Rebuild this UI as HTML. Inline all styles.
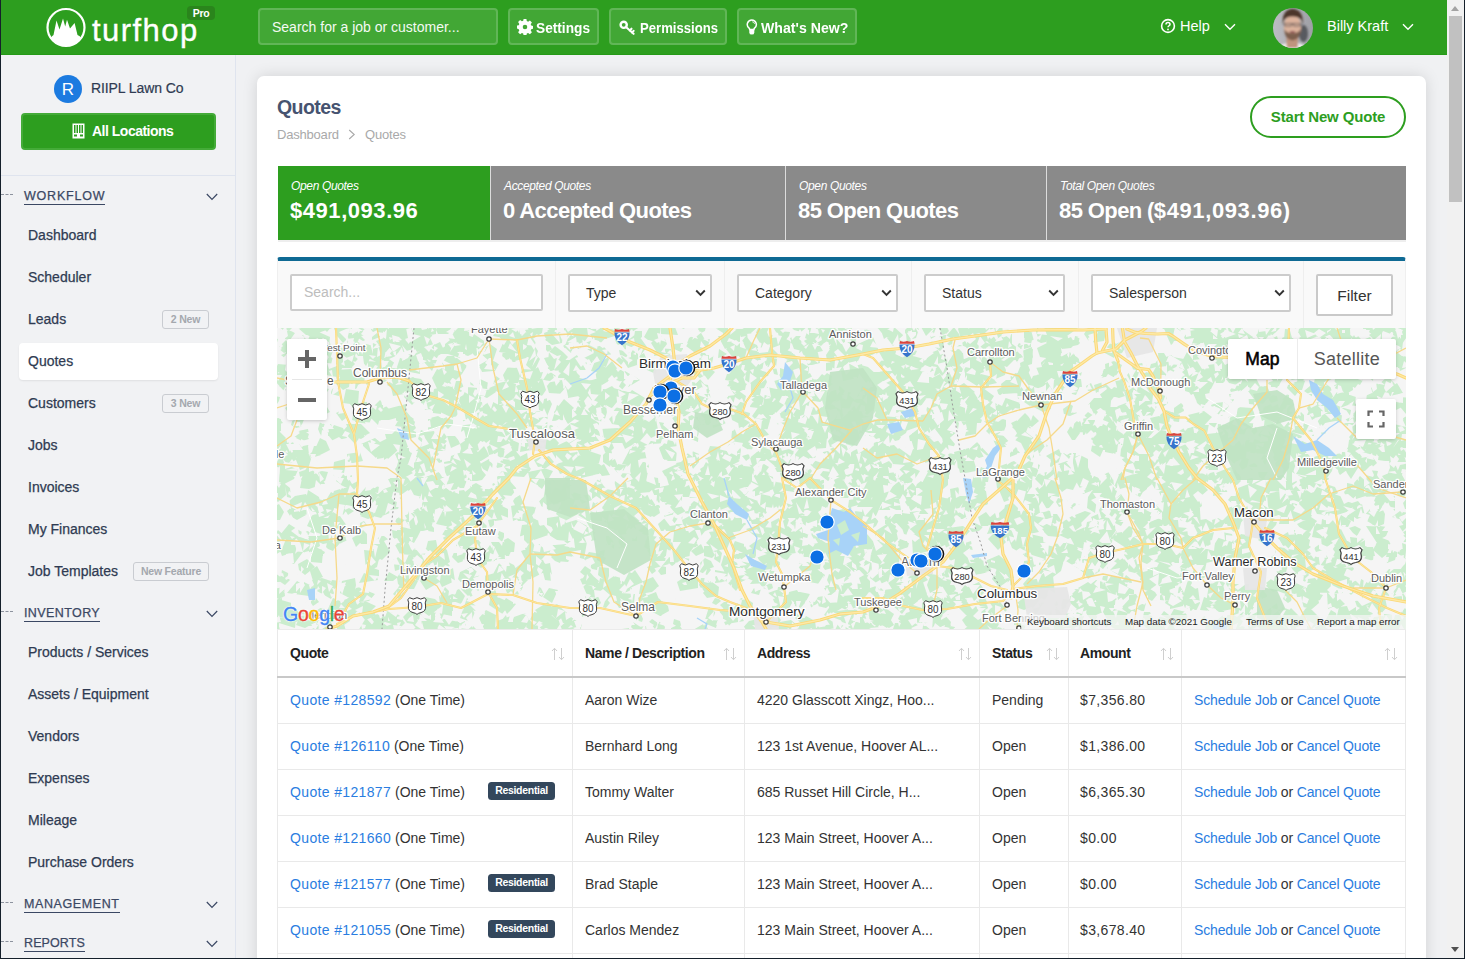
<!DOCTYPE html>
<html lang="en">
<head>
<meta charset="utf-8">
<title>Quotes - Turfhop</title>
<style>
*{box-sizing:border-box;margin:0;padding:0}
html,body{width:1465px;height:959px;overflow:hidden;background:#15202b}
body{font-family:"Liberation Sans",sans-serif;color:#2f3b52;position:relative}
.abs{position:absolute}
#frame{position:absolute;left:1px;top:0;width:1463px;height:958px;background:#f0f1f3;overflow:hidden}
/* header */
#hdr{position:absolute;left:0;top:0;width:1446px;height:55px;background:#2d9e1f;border-bottom:1px solid #259a17}
.hbtn{position:absolute;top:8px;height:37px;border:2px solid rgba(255,255,255,.17);background:rgba(255,255,255,.1);border-radius:4px;color:#fff;font-weight:bold;font-size:14px;line-height:37px;white-space:nowrap}
.hbtn span{position:absolute;top:0;line-height:35px;letter-spacing:0;font-size:15.300px;transform-origin:0 50%}
.htxt{position:absolute;color:#fff;font-size:14.5px;white-space:nowrap;line-height:20px}
/* scrollbar */
#sb{position:absolute;left:1446px;top:0;width:17px;height:958px;background:#f1f1f1}
#sb .thumb{position:absolute;left:2px;top:16px;width:13px;height:186px;background:#c1c1c1}
#sb .up{position:absolute;left:4px;top:6px;width:0;height:0;border-left:4.5px solid transparent;border-right:4.5px solid transparent;border-bottom:5px solid #a3a3a3}
#sb .dn{position:absolute;left:4px;top:947px;width:0;height:0;border-left:4.5px solid transparent;border-right:4.5px solid transparent;border-top:5px solid #505050}
/* sidebar */
#side{position:absolute;left:0;top:55px;width:235px;height:903px;background:#f1f2f4;border-right:1px solid #dfe4ee}
.mi{position:absolute;left:27px;font-size:14px;color:#2f3b52;white-space:nowrap;line-height:20px;-webkit-text-stroke:.25px #2f3b52}
.sec{position:absolute;left:23px;font-size:12.5px;letter-spacing:.8px;color:#3b4863;white-space:nowrap;line-height:16px;border-bottom:1.5px solid #3b4863;padding-bottom:0;-webkit-text-stroke:.25px #3b4863}
.dash{position:absolute;left:0;width:12px;height:0;border-top:1px dashed #8d939e}
.chev{position:absolute;left:205px;width:12px;height:8px}
.bdg{position:absolute;height:19px;border:1px solid #c9ccd1;border-radius:3px;color:#a4a8ae;font-size:10.5px;line-height:17px;text-align:center;white-space:nowrap;font-weight:bold;letter-spacing:-.2px}
/* card */
#card{position:absolute;left:256px;top:76px;width:1169px;height:900px;background:#fff;border-radius:7px;box-shadow:0 0 15px rgba(0,0,0,.13)}
.stat{position:absolute;top:166px;height:74px;background:#8a8a8a;color:#fff}
.stat i{position:absolute;left:13px;top:12px;font-size:12px;line-height:16px;white-space:nowrap;letter-spacing:-.35px}
.stat b{position:absolute;left:12px;top:31px;font-size:22px;line-height:28px;white-space:nowrap;letter-spacing:-.6px}
.sel{position:absolute;top:274px;height:38px;border:2px solid #ccc;border-radius:2px;background:#fff;font-size:14px;color:#333;line-height:35px;padding-left:16px;white-space:nowrap}
.sel svg{position:absolute;right:4px;top:13px}
.fdiv{position:absolute;top:261px;width:1px;height:67px;background:#eee}
/* table */
.th{position:absolute;top:643px;font-weight:bold;font-size:14px;color:#222;line-height:20px;white-space:nowrap;letter-spacing:-.4px}
.srt{position:absolute;top:647px;width:14px;height:14px}
.vl{position:absolute;top:630px;width:1px;height:330px;background:#e9e9e9}
.hl{position:absolute;left:277px;width:1129px;height:1px;background:#e9e9e9}
.td{position:absolute;font-size:14px;color:#333;line-height:20px;white-space:nowrap}
.td a,.lnk{color:#2a7de1;text-decoration:none}
.res{position:absolute;left:488px;width:67px;height:18px;border-radius:3.5px;background:#33475c;color:#fff;font-size:10.5px;font-weight:bold;text-align:center;line-height:17px;letter-spacing:-.3px}
</style>
</head>
<body>
<div id="frame">

<!-- ================= HEADER ================= -->
<div id="hdr">
  <!-- logo -->
  <svg class="abs" style="left:44px;top:6px" width="44" height="44" viewBox="0 0 44 44">
    <circle cx="21" cy="21.5" r="18.500" fill="none" stroke="#fff" stroke-width="2.200"/>
    <path d="M5.500 32.300Q7 29.800 8.500 29L11.500 14.500L14.500 23.500L18 12.400L20.200 20.500L22 13.700L25 22.500L29.600 17L32.500 29Q35 29.800 36.500 32.300A19 19 0 0 1 5.500 32.300Z" fill="#fff"/>
  </svg>
  <div class="abs" style="left:91px;top:13px;font-size:31px;line-height:36px;color:#fff;letter-spacing:1.45px;white-space:nowrap;-webkit-text-stroke:.35px #fff">turfhop</div>
  <div class="abs" style="left:186px;top:6px;width:28px;height:14px;border-radius:4px;background:#2a851c;color:#fff;font-size:10.5px;font-weight:bold;line-height:14px;text-align:center;letter-spacing:-.3px">Pro</div>

  <!-- search -->
  <div class="hbtn" style="left:257px;width:240px;font-weight:normal"><span style="left:12px;letter-spacing:0;color:#f4faf3;font-size:14px;top:0">Search for a job or customer...</span></div>
  <!-- settings -->
  <div class="hbtn" style="left:507px;width:91px">
    <svg class="abs" style="left:7px;top:9px" width="16" height="16" viewBox="0 0 16 16"><path fill="#fff" d="M6.6 0h2.8l.4 2.1 1.3.55 1.8-1.2 2 2-1.2 1.8.55 1.3 2.1.4v2.8l-2.1.4-.55 1.3 1.2 1.8-2 2-1.8-1.2-1.3.55-.4 2.1H6.6l-.4-2.1-1.3-.55-1.8 1.2-2-2 1.2-1.8-.55-1.3L-.35 9.400V6.600l2.1-.4.55-1.3-1.2-1.8 2-2 1.8 1.2 1.3-.55zM8 5.700a2.300 2.300 0 100 4.600 2.300 2.300 0 000-4.600z"/></svg>
    <span style="left:26px;transform:scaleX(.895)">Settings</span>
  </div>
  <!-- permissions -->
  <div class="hbtn" style="left:608px;width:118px">
    <svg class="abs" style="left:7px;top:8px" width="18" height="18" viewBox="0 0 18 18"><circle cx="5.700" cy="6.800" r="3.100" fill="none" stroke="#fff" stroke-width="2.400"/><path d="M8.200 9.200L15.600 15.800M11.800 12.600l1.700-1.900M14.100 14.600l1.500-1.700" stroke="#fff" stroke-width="2.100" fill="none" stroke-linecap="round"/></svg>
    <span style="left:29px;transform:scaleX(.857)">Permissions</span>
  </div>
  <!-- what's new -->
  <div class="hbtn" style="left:736px;width:120px">
    <svg class="abs" style="left:7px;top:8px" width="12" height="18" viewBox="0 0 12 18"><path d="M5.800 2a4.500 4.500 0 00-2.700 8.100c.4.400.6.900.6 1.500h4.200c0-.6.200-1.100.6-1.500A4.500 4.500 0 005.800 2z" fill="none" stroke="#fff" stroke-width="1.500"/><path d="M3.300 11.200h5v3.200a2.500 2.200 0 01-5 0z" fill="#fff"/><path d="M6.300 3.800a2.600 2.600 0 012.300 2" fill="none" stroke="#fff" stroke-width=".9"/></svg>
    <span style="left:22px;transform:scaleX(.924)">What's New?</span>
  </div>
  <!-- help -->
  <svg class="abs" style="left:1159px;top:17.500px" width="16" height="16" viewBox="0 0 16 16"><circle cx="8" cy="8" r="6.400" fill="none" stroke="#fff" stroke-width="1.600"/><path d="M6 6.400a2 2 0 114 0c0 1.300-2 1.400-2 2.900" fill="none" stroke="#fff" stroke-width="1.500"/><circle cx="8" cy="11.400" r=".9" fill="#fff"/></svg>
  <div class="htxt" style="left:1179px;top:16px">Help</div>
  <svg class="abs" style="left:1222.500px;top:22.500px" width="12" height="8" viewBox="0 0 12 8"><path d="M1 1.200l5 5 5-5" fill="none" stroke="#fff" stroke-width="1.400"/></svg>
  <!-- avatar -->
  <svg class="abs" style="left:1272px;top:8px" width="40" height="40" viewBox="0 0 40 40">
    <defs><clipPath id="avc"><circle cx="20" cy="20" r="20"/></clipPath><linearGradient id="avg" x1="0" x2="1"><stop offset="0" stop-color="#bcbdc3"/><stop offset="1" stop-color="#9fa0a6"/></linearGradient><filter id="avb" x="-10%" y="-10%" width="120%" height="120%"><feGaussianBlur stdDeviation=".9"/></filter></defs>
    <g clip-path="url(#avc)"><rect width="40" height="40" fill="url(#avg)"/>
    <g filter="url(#avb)">
      <ellipse cx="30.500" cy="25.500" rx="4.500" ry="8.500" fill="#505157" opacity=".9"/>
      <ellipse cx="19.500" cy="42" rx="15" ry="7.500" fill="#f3f0f0"/>
      <rect x="13.500" y="26" width="11.500" height="14" rx="2" fill="#c0947e"/>
      <ellipse cx="19.500" cy="19" rx="8.700" ry="12.300" fill="#dcb29c"/>
      <path d="M11.300 21Q11.500 31.500 19.500 32.500Q27.500 31.500 27.700 21Q25 25.500 19.500 25.300Q14 25.500 11.300 21Z" fill="#6b4f40" opacity=".85"/>
      <ellipse cx="19.500" cy="24" rx="3" ry="1" fill="#8c4c4c"/>
      <path d="M9.900 17Q8.300 2 19.500 .8Q31 2 29.700 17L28.300 11.500Q24 7.800 19 8.600Q13.500 8.800 11.300 12Z" fill="#4b3429"/>
      <path d="M10.800 15.500H28.200M11.500 15.500V18H18.500V15.500M20.500 15.500V18H27.500V15.500" fill="none" stroke="#3a3a40" stroke-width=".9" opacity=".8"/>
    </g></g>
  </svg>
  <div class="htxt" style="left:1326px;top:16px">Billy Kraft</div>
  <svg class="abs" style="left:1401px;top:22.500px" width="12" height="8" viewBox="0 0 12 8"><path d="M1 1.200l5 5 5-5" fill="none" stroke="#fff" stroke-width="1.400"/></svg>
</div>

<!-- ================= SCROLLBAR ================= -->
<div id="sb"><div class="up"></div><div class="thumb"></div><div class="dn"></div></div>

<!-- ================= SIDEBAR ================= -->
<div id="side">
  <div class="abs" style="left:53px;top:20px;width:28px;height:28px;border-radius:50%;background:#1c7be0;color:#fff;font-size:17px;text-align:center;line-height:29px">R</div>
  <div class="abs" style="left:90px;top:23px;font-size:14px;line-height:20px;white-space:nowrap;letter-spacing:-.1px;-webkit-text-stroke:.2px #2f3b52">RIIPL Lawn Co</div>
  <div class="abs" style="left:20px;top:58px;width:195px;height:37px;border-radius:4px;background:#2d9e1f;border:2px solid #44ab38"></div>
  <svg class="abs" style="left:71px;top:68px" width="13" height="16" viewBox="0 0 13 16"><rect x=".5" y=".5" width="12" height="15" fill="#fff"/><g fill="#2d9e1f"><rect x="2" y="2" width="1.500" height="8"/><rect x="4.500" y="2" width="1.500" height="8"/><rect x="7" y="2" width="1.500" height="8"/><rect x="9.500" y="2" width="1.500" height="8"/><rect x="2" y="11.500" width="3" height="2"/><rect x="8" y="11.500" width="3" height="2"/></g></svg>
  <div class="abs" style="left:91px;top:66px;font-size:14px;font-weight:bold;color:#fff;line-height:20px;white-space:nowrap;letter-spacing:-.5px">All Locations</div>
  <div class="abs" style="left:0;top:120px;width:235px;height:1px;background:#dfe4ee"></div>

  <div class="dash" style="top:139px"></div>
  <div class="sec" style="top:133px">WORKFLOW</div>
  <svg class="chev" style="top:138px" viewBox="0 0 12 8"><path d="M.8 1l5.200 5.400L11.200 1" fill="none" stroke="#3b4863" stroke-width="1.200"/></svg>

  <div class="mi" style="top:170px">Dashboard</div>
  <div class="mi" style="top:212px">Scheduler</div>
  <div class="mi" style="top:254px">Leads</div>
  <div class="bdg" style="left:161px;top:255px;width:47px">2 New</div>
  <div class="abs" style="left:18px;top:288px;width:199px;height:37px;background:#fff;border-radius:4px;box-shadow:0 1px 2px rgba(0,0,0,.08)"></div>
  <div class="mi" style="top:296px">Quotes</div>
  <div class="mi" style="top:338px">Customers</div>
  <div class="bdg" style="left:161px;top:339px;width:47px">3 New</div>
  <div class="mi" style="top:380px">Jobs</div>
  <div class="mi" style="top:422px">Invoices</div>
  <div class="mi" style="top:464px">My Finances</div>
  <div class="mi" style="top:506px">Job Templates</div>
  <div class="bdg" style="left:132px;top:507px;width:76px">New Feature</div>

  <div class="dash" style="top:556px"></div>
  <div class="sec" style="top:550px;letter-spacing:.4px">INVENTORY</div>
  <svg class="chev" style="top:555px" viewBox="0 0 12 8"><path d="M.8 1l5.200 5.400L11.200 1" fill="none" stroke="#3b4863" stroke-width="1.200"/></svg>

  <div class="mi" style="top:587px">Products / Services</div>
  <div class="mi" style="top:629px">Assets / Equipment</div>
  <div class="mi" style="top:671px">Vendors</div>
  <div class="mi" style="top:713px">Expenses</div>
  <div class="mi" style="top:755px">Mileage</div>
  <div class="mi" style="top:797px">Purchase Orders</div>

  <div class="dash" style="top:847px"></div>
  <div class="sec" style="top:841px;letter-spacing:.6px">MANAGEMENT</div>
  <svg class="chev" style="top:846px" viewBox="0 0 12 8"><path d="M.8 1l5.200 5.400L11.200 1" fill="none" stroke="#3b4863" stroke-width="1.200"/></svg>

  <div class="dash" style="top:886px"></div>
  <div class="sec" style="top:880px;letter-spacing:.1px">REPORTS</div>
  <svg class="chev" style="top:885px" viewBox="0 0 12 8"><path d="M.8 1l5.200 5.400L11.200 1" fill="none" stroke="#3b4863" stroke-width="1.200"/></svg>
</div>

<!-- ================= MAIN CARD ================= -->
<div id="card"></div>
<div id="main" class="abs" style="left:-1px;top:0;width:1465px;height:958px">
  <div class="abs" style="left:277px;top:94px;font-size:19.5px;line-height:26px;color:#465370;font-weight:bold;letter-spacing:-.55px;white-space:nowrap">Quotes</div>
  <div class="abs" style="left:277px;top:125px;font-size:13px;line-height:20px;color:#a9a9a9;white-space:nowrap;letter-spacing:-.2px">Dashboard</div>
  <svg class="abs" style="left:348px;top:129px" width="8" height="11" viewBox="0 0 8 11"><path d="M1.200 1l5 4.500-5 4.500" fill="none" stroke="#a9a9a9" stroke-width="1.100"/></svg>
  <div class="abs" style="left:365px;top:125px;font-size:13px;line-height:20px;color:#a9a9a9;white-space:nowrap;letter-spacing:-.2px">Quotes</div>

  <div class="abs" style="left:1250px;top:96px;width:156px;height:42px;border:2px solid #2d9e1f;border-radius:21px;color:#2d9e1f;font-size:15px;font-weight:bold;text-align:center;line-height:38px;letter-spacing:-.15px;white-space:nowrap">Start New Quote</div>

  <!-- stats -->
  <div class="abs" style="left:278px;top:166px;width:1127.500px;height:76px;background:#eee"></div>
  <div class="abs" style="left:278px;top:166px;width:1127.500px;height:74px;background:#dcdcdc"></div>
  <div class="stat" style="left:278px;width:212px;background:#2d9e1f"><i>Open Quotes</i><b><span style="letter-spacing:.55px">$491,093.96</span></b></div>
  <div class="stat" style="left:491px;width:294px"><i>Accepted Quotes</i><b>0 Accepted Quotes</b></div>
  <div class="stat" style="left:786px;width:260px"><i>Open Quotes</i><b>85 Open Quotes</b></div>
  <div class="stat" style="left:1047px;width:358.500px"><i>Total Open Quotes</i><b>85 Open (<span style="letter-spacing:.6px">$491,093.96</span>)</b></div>

  <!-- filter bar -->
  <div class="abs" style="left:277px;top:257px;width:1129px;height:71px;background:#f9f9f9;border-top:4px solid #0f6a94;border-left:1px solid #efefef;border-right:1px solid #efefef;border-radius:3px 3px 0 0"></div>
  <div class="abs" style="left:290px;top:274px;width:253px;height:37px;border:2px solid #ccc;border-radius:2px;background:#fff;font-size:14px;color:#bdbdbd;line-height:33px;padding-left:12px">Search...</div>
  <div class="fdiv" style="left:555px"></div>
  <div class="sel" style="left:568px;width:144px">Type<svg width="11" height="8" viewBox="0 0 11 8"><path d="M1.200 1.500l4.300 4.300 4.300-4.300" fill="none" stroke="#333" stroke-width="1.900"/></svg></div>
  <div class="fdiv" style="left:724px"></div>
  <div class="sel" style="left:737px;width:161px">Category<svg width="11" height="8" viewBox="0 0 11 8"><path d="M1.200 1.500l4.300 4.300 4.300-4.300" fill="none" stroke="#333" stroke-width="1.900"/></svg></div>
  <div class="fdiv" style="left:911px"></div>
  <div class="sel" style="left:924px;width:141px">Status<svg width="11" height="8" viewBox="0 0 11 8"><path d="M1.200 1.500l4.300 4.300 4.300-4.300" fill="none" stroke="#333" stroke-width="1.900"/></svg></div>
  <div class="fdiv" style="left:1078px"></div>
  <div class="sel" style="left:1091px;width:200px">Salesperson<svg width="11" height="8" viewBox="0 0 11 8"><path d="M1.200 1.500l4.300 4.300 4.300-4.300" fill="none" stroke="#333" stroke-width="1.900"/></svg></div>
  <div class="fdiv" style="left:1303px"></div>
  <div class="abs" style="left:1316px;top:274px;width:77px;height:42px;border:2px solid #c9c9c9;border-radius:2px;background:#fff;font-size:15.5px;color:#333;line-height:39px;text-align:center">Filter</div>

  <!-- MAP -->
  <div id="map" class="abs" style="left:277px;top:328px;width:1129px;height:301px;background:#dff0df;overflow:hidden">
  <svg class="abs" style="left:0;top:0" width="1129" height="301" viewBox="0 0 1129 301" font-family="Liberation Sans, sans-serif">
<rect width="1129" height="301" fill="#f5f5f5"/>
<path d="M307 141L308 147L297 149L289 140L294 132ZM978 154L988 149L989 173L973 165ZM272 223L265 231L257 228L262 217ZM922 140L920 147L916 150L908 151L906 143L912 136ZM387 226L392 236L375 241L374 231ZM644 153L651 160L653 163L642 171L636 159ZM733 248L728 258L722 259L715 251L720 241L726 241ZM651 220L655 215L666 222L656 229ZM227 10L216 8L220 1L229 2ZM792 54L789 47L796 45L797 48ZM764 175L759 164L766 158L775 167L770 176ZM653 137L657 133L661 135L660 140L660 142L655 142ZM335 96L332 91L338 85L344 87L343 91L341 97ZM588 248L576 235L590 228L594 230L595 242ZM409 0L392 -6L399 -17L409 -21L419 -6ZM669 187L664 190L662 181L663 178L669 180L673 185ZM438 166L427 168L420 159L429 148L436 150ZM709 158L705 168L695 164L694 159L697 146L707 146ZM240 161L231 172L216 167L232 152ZM814 146L806 148L802 144L810 137ZM216 217L225 224L228 229L218 232L213 227ZM864 246L877 248L882 255L871 263L865 261ZM94 217L105 206L113 213L113 224L105 232L99 229ZM399 135L404 134L409 141L404 144ZM871 107L864 114L853 107L858 100L863 99L869 102ZM589 69L593 74L589 77L583 76L582 73ZM934 26L934 20L946 23L947 26L942 34L936 30ZM831 264L840 271L834 276L827 275L823 275L828 266ZM656 0L664 -5L667 -1L668 6L662 8ZM1074 140L1063 142L1065 124L1079 123ZM201 68L196 69L193 54L196 56ZM1048 181L1043 183L1040 180L1042 174L1046 174ZM753 164L761 159L764 166L759 173ZM23 15L28 17L32 27L24 33L15 29L17 22ZM600 317L585 316L581 306L586 299L599 302ZM430 237L434 242L430 247L423 244L424 236ZM237 26L236 26L237 18L243 18L243 23ZM138 62L132 63L128 52L136 49L141 52ZM1086 272L1085 268L1091 266L1093 270L1090 274ZM631 214L629 217L625 220L622 213L623 211ZM72 9L69 4L71 0L78 -4L79 1L82 6ZM624 192L617 196L613 192L618 186L624 186ZM465 136L473 146L468 151L456 148L455 141ZM260 42L261 43L264 52L254 57L243 49L245 41ZM978 33L985 45L974 51L967 46L972 34ZM126 99L118 98L122 91L126 83L137 91L131 98ZM625 165L637 163L640 169L637 179L632 178L628 169ZM1091 -15L1107 -6L1091 -1L1082 -10ZM648 69L647 62L650 57L656 56L659 63ZM164 110L167 105L170 109L166 114ZM1087 95L1082 100L1070 95L1075 90L1085 86ZM414 167L416 158L425 158L425 169ZM907 31L896 43L893 33L896 29ZM914 38L912 42L902 40L903 32ZM640 306L639 314L636 319L625 316L631 305ZM878 48L883 54L877 59L867 54L870 48ZM500 3L513 4L512 8L503 19L500 15ZM511 49L517 54L509 62L503 54ZM802 307L807 312L800 322L788 319L790 303ZM538 274L535 280L534 279L532 273ZM137 22L130 20L136 12L142 13L145 17ZM246 248L250 244L255 245L254 251L249 252ZM561 280L565 276L570 283L568 288L560 285ZM417 185L411 183L413 177L417 173L427 178L424 182ZM252 60L261 67L244 81L236 72ZM842 111L850 103L863 104L860 119L856 119ZM158 297L151 301L141 297L147 290L153 291ZM399 171L405 172L405 183L399 186L393 179ZM629 105L623 109L611 99L621 84L634 92ZM272 1L267 -2L269 -10L278 -15L280 2ZM803 177L800 183L797 183L793 179L797 175ZM75 289L63 293L56 282L71 270L80 276L83 280ZM1060 277L1051 281L1050 265L1060 266ZM986 292L978 300L972 302L969 290L982 283ZM236 124L232 114L235 112L242 115L241 123ZM290 163L285 160L289 154L293 158ZM1131 106L1134 114L1128 118L1123 111ZM516 107L515 113L510 115L508 111L508 106ZM718 17L724 17L728 17L727 26L721 30L718 28ZM518 53L513 44L525 35L532 39L530 58ZM872 302L868 299L865 294L867 284L873 284L876 291ZM315 128L318 133L307 135L305 129ZM195 250L196 255L189 256L188 251ZM496 119L494 127L483 125L486 113ZM361 71L356 84L346 82L343 76L356 68ZM528 241L522 224L538 218L538 243ZM662 119L668 123L663 130L659 125ZM1008 1L1019 2L1018 7L1012 14L1007 11ZM726 91L729 92L729 98L727 103L717 103L715 95ZM1063 271L1068 276L1060 281L1054 277ZM471 231L472 242L469 243L464 242L462 236L464 233ZM929 150L924 157L919 159L916 155L918 149L924 150ZM618 48L612 41L614 38L623 43ZM385 279L376 284L367 280L369 268L379 264ZM872 139L872 144L868 148L865 143L868 135ZM687 266L684 273L678 273L676 263ZM336 2L325 -8L329 -14L339 -13L342 -5ZM1011 57L1021 53L1022 63L1018 68L1010 60ZM202 24L213 16L220 21L216 33L212 33ZM671 188L664 177L664 169L676 172L676 185ZM592 297L597 301L597 316L583 304ZM703 289L702 293L698 299L693 298L691 290L694 286ZM780 293L785 289L789 289L787 296ZM559 240L564 230L569 240L569 243ZM159 212L161 222L153 227L149 221L151 213ZM210 109L202 98L204 90L214 86L222 97L217 105ZM268 178L270 159L281 160L289 168L281 176ZM711 84L707 80L705 77L712 72L720 76L718 82ZM747 300L745 304L739 303L739 298L743 296L749 298ZM252 3L249 -6L257 -5L254 2ZM370 133L368 140L356 136L360 128L368 124ZM445 148L445 140L449 141L451 146ZM55 296L39 297L41 290L49 286ZM875 294L888 293L886 312L873 305ZM871 99L861 103L859 90L867 91ZM463 203L452 205L448 197L452 192L469 195ZM878 149L882 140L890 146L886 151ZM894 186L898 179L906 178L907 187L902 190ZM707 85L704 95L692 95L690 78L702 78ZM159 6L153 7L150 2L155 -2L159 0ZM196 99L190 100L192 91L201 86L203 98ZM923 293L927 288L935 288L932 297ZM1019 208L1017 205L1017 202L1024 203L1021 208ZM340 136L340 139L335 139L332 134L338 131ZM917 122L914 120L915 116L919 114L922 117ZM298 9L295 6L296 0L300 0L303 4ZM951 165L936 168L938 155L945 154ZM1089 116L1103 117L1099 128L1089 125ZM438 156L431 164L424 156L427 151ZM961 6L956 5L952 -1L959 -3ZM802 241L784 230L790 217L805 224L803 234ZM917 131L922 137L912 147L905 139L911 133ZM200 20L185 23L184 16L185 5L198 10ZM870 304L875 300L885 308L884 315L876 320ZM656 82L660 89L654 92L647 91L649 84L650 79ZM1123 242L1126 238L1129 235L1133 240L1135 242L1128 245ZM824 282L811 291L809 287L810 276L814 273L820 274ZM465 171L454 160L460 149L475 157L473 162ZM298 14L304 12L305 20L300 19ZM230 81L235 88L219 93L214 79L216 74ZM99 158L102 159L101 165L95 164L93 162ZM1133 156L1125 161L1119 150L1133 149ZM1089 -15L1097 -11L1100 -2L1086 1ZM246 98L240 107L232 103L231 94L239 93ZM67 145L56 143L57 134L68 131L68 140ZM83 8L77 24L70 15L73 5ZM533 45L541 59L521 63L519 53ZM273 196L285 186L291 200L277 204ZM654 71L652 66L657 61L663 64L664 70L660 72ZM587 140L583 139L581 135L584 131L589 132L590 136ZM324 109L325 113L317 113L315 110L316 106L320 104ZM181 159L178 158L178 150L182 150ZM1115 260L1114 254L1117 248L1125 246L1128 256L1128 260ZM625 97L620 104L614 101L615 91L619 89ZM901 292L896 294L893 288L898 285L900 290ZM540 52L545 46L552 51L548 58L540 55ZM90 197L82 201L83 195L87 193ZM493 163L476 169L475 158L483 151ZM449 239L453 234L461 238L461 241L452 244ZM891 159L902 165L897 172L888 176L882 164ZM187 162L189 165L187 172L180 169L180 163ZM701 126L691 141L679 133L677 124L692 120ZM66 304L86 306L86 314L73 323L64 315ZM549 120L536 121L530 109L540 103L548 104L550 109ZM152 71L161 60L168 66L163 78ZM88 31L84 24L89 16L97 18L95 29ZM667 13L663 8L674 6L677 5L674 17ZM971 87L976 91L974 101L964 98ZM327 21L326 31L319 36L313 29L309 19L316 13ZM285 132L288 122L296 122L298 134L293 135ZM601 206L619 202L621 211L610 223L598 211ZM802 41L793 46L791 41L786 32L796 25L802 31ZM509 51L511 42L519 28L528 50ZM1094 84L1090 84L1089 79L1089 77L1095 76L1095 82ZM845 115L836 116L835 108L838 105L843 104ZM663 306L658 289L666 285L674 294L672 303ZM324 260L329 251L335 254L333 261ZM864 83L872 80L874 87L866 88ZM994 76L999 87L997 88L990 91L986 80ZM636 46L638 39L646 40L645 48ZM641 297L632 301L625 292L628 287L637 287ZM509 42L508 48L503 47L503 40ZM251 66L254 61L262 62L259 71ZM-18 184L-10 177L1 181L-1 194L-9 197ZM600 293L605 289L607 297L603 298ZM177 187L180 196L172 196L170 191L169 189ZM64 17L56 -2L71 0L69 12ZM284 176L283 172L291 172L291 175ZM31 69L28 69L24 66L27 63L32 62L35 66ZM157 133L150 144L138 139L139 129L141 119L151 120ZM24 -2L30 -9L41 -10L44 -2L37 6ZM777 275L780 273L782 280L780 281ZM459 11L457 4L465 6L467 9L461 14ZM702 6L698 8L684 2L689 -5L697 -7ZM528 10L531 0L544 -4L549 13L544 18ZM1032 144L1039 144L1042 149L1037 160L1027 153L1028 151ZM855 96L855 87L862 87L865 93L859 96ZM473 39L481 32L491 36L490 41L483 47ZM834 109L822 105L826 96L832 99ZM788 133L794 140L785 152L775 148L778 139L782 131ZM322 227L323 223L328 222L327 228ZM798 16L794 20L785 21L781 16L785 13L794 9ZM618 -9L622 -18L632 -12L629 -7ZM1127 127L1129 134L1113 134L1118 127ZM355 75L363 76L365 94L348 94ZM863 50L856 49L854 37L865 35L870 38ZM562 248L557 254L553 248L556 244ZM294 141L289 144L283 146L279 137L288 130L295 134ZM1011 244L1019 233L1028 232L1032 245L1026 254L1019 254ZM558 124L555 123L553 121L557 119L559 118L561 123ZM1130 89L1135 105L1123 110L1114 99ZM1033 252L1040 257L1038 262L1029 263L1028 256ZM329 79L325 67L326 61L339 62L340 74L335 80ZM294 289L305 297L304 304L289 307L282 300ZM283 188L283 194L281 202L270 197L270 190ZM49 104L44 108L42 101L43 99L49 97L50 102ZM954 292L949 302L945 302L939 293L947 286ZM23 160L26 145L31 138L41 147L44 157L32 161ZM520 29L515 36L508 29L517 26ZM1082 -6L1082 -1L1068 -1L1067 -9L1080 -16ZM852 267L846 272L841 265L838 259L850 256L851 257ZM900 133L913 145L904 153L895 155L893 140ZM880 145L885 147L894 154L888 163L878 161L875 156ZM904 36L908 31L909 34L910 38L905 40ZM939 254L944 253L948 255L946 259L943 260L940 259ZM1125 1L1129 6L1123 11L1120 8L1120 4ZM1047 65L1048 74L1042 75L1035 68L1039 65ZM783 159L791 141L800 154L796 162ZM318 33L329 40L328 46L314 43ZM537 168L534 171L529 174L526 169L531 161L536 161ZM729 32L731 22L740 20L746 29L735 33ZM357 81L353 89L340 82L351 76ZM956 268L959 257L966 263L963 270ZM632 66L629 68L622 68L623 60L631 61ZM243 309L238 308L240 300L246 301ZM340 202L331 200L331 187L342 186L345 194ZM646 89L655 93L655 100L647 105L641 94ZM171 41L174 52L161 52L158 44L165 40ZM1124 1L1110 5L1104 3L1103 -2L1105 -8L1118 -8ZM826 24L835 13L842 18L837 30ZM274 0L277 1L278 2L277 6L273 6L270 3ZM961 308L958 302L965 298L968 299ZM110 57L112 54L116 51L119 50L120 56L117 61ZM1113 166L1108 178L1102 172L1098 168L1105 160L1110 157ZM715 6L713 12L705 5L706 2ZM1129 8L1126 14L1122 13L1121 3ZM713 23L702 16L704 7L710 2L723 6L727 14ZM192 223L179 218L188 202L197 207L204 215ZM441 166L452 160L457 171L452 176L446 175ZM170 65L182 70L178 76L164 83L162 69ZM303 113L310 111L317 119L308 130ZM285 87L290 76L302 88L291 96ZM576 41L562 33L573 20L585 24ZM976 123L970 124L967 118L973 114L979 115ZM349 97L345 92L348 84L355 90L355 97ZM679 33L674 32L675 27L676 25L680 25L681 32ZM23 26L18 34L12 29L15 20ZM335 2L334 -11L343 -12L346 0ZM575 82L580 74L586 69L598 77L599 88L585 90ZM935 292L937 291L943 295L940 300L935 297ZM929 215L931 220L924 220L924 216ZM110 81L129 76L129 86L126 96L110 88ZM1007 92L1021 91L1023 99L1009 101ZM975 119L977 111L992 115L995 118L988 126L973 125ZM384 288L380 285L381 279L385 279L388 284ZM838 277L828 276L822 269L839 263ZM623 52L628 56L629 59L623 61L620 58ZM397 218L407 230L395 238L383 227L391 215ZM1140 200L1130 189L1136 183L1142 196ZM1100 162L1098 164L1092 169L1087 164L1087 153L1095 153ZM811 -14L816 -12L815 -6L811 -4L805 -8L805 -10ZM120 7L106 14L109 -6L122 0ZM417 148L416 151L404 155L402 150L407 139ZM605 88L618 89L612 104L605 99ZM528 318L516 314L519 308L527 306ZM452 252L444 237L447 227L465 238L462 247ZM239 8L251 8L252 20L237 15ZM364 163L345 158L349 149L356 148L366 158ZM41 172L56 170L57 181L52 191L41 188L37 181ZM199 178L202 166L208 172L206 177ZM133 -23L147 -18L151 -12L143 2L129 -6ZM894 192L881 188L889 170L903 186ZM523 11L525 18L513 15L517 7ZM584 173L576 172L578 162L589 160L590 170ZM662 186L677 182L680 191L674 199L664 196ZM1067 53L1074 47L1084 52L1078 60ZM957 109L961 108L965 108L967 115L963 115L959 114ZM605 96L606 90L610 90L610 97ZM1103 189L1097 181L1103 176L1108 186ZM733 81L727 87L722 85L723 75ZM264 178L265 170L271 172L270 178ZM477 178L462 184L458 182L456 170L472 172ZM447 173L439 167L446 161L450 166ZM1021 227L1028 232L1026 237L1021 240L1017 234ZM225 98L210 92L221 77L232 91ZM356 104L368 95L376 104L380 114L365 123L357 112ZM1027 93L1025 93L1019 90L1024 84L1027 87ZM517 211L516 223L505 225L506 213ZM603 149L611 151L616 161L603 160ZM703 53L688 50L688 41L704 38ZM587 133L594 135L590 142L586 140ZM580 121L584 136L573 136L568 129L576 123ZM288 133L306 126L310 138L289 141ZM127 264L123 272L116 266L121 260ZM316 185L323 196L317 207L309 193ZM227 -3L245 7L239 14L230 16L223 10L221 2ZM672 23L678 22L686 25L687 33L677 42L670 34ZM1050 16L1054 11L1061 15L1057 21ZM470 222L476 220L480 225L478 230L470 230ZM1094 112L1089 118L1074 112L1072 109L1080 100L1090 98ZM815 98L818 97L821 101L818 104L815 106L813 101ZM851 285L849 289L841 299L833 291L833 287L837 281ZM545 52L552 59L548 68L538 63ZM568 227L557 228L551 219L561 209L570 217ZM470 56L466 62L457 66L453 60L452 52L462 52ZM706 266L697 273L694 267L691 259L702 254L708 263ZM1052 177L1053 186L1050 187L1040 186L1037 180L1043 176ZM355 188L365 195L366 199L358 201L351 197ZM863 173L876 182L873 193L860 193L853 185ZM574 285L560 293L553 283L551 275L565 274ZM116 18L119 5L128 8L129 16L123 23ZM812 -2L817 0L818 5L813 8L807 6ZM273 151L277 152L278 157L276 159L270 155ZM597 52L592 55L593 43L597 44ZM393 203L384 203L381 196L389 189L395 191ZM577 230L572 227L574 216L584 215L590 225ZM615 259L628 264L635 273L625 286L614 276ZM51 -9L55 -2L50 4L45 -1L43 -4ZM267 5L272 3L274 7L271 12L268 10ZM8 257L2 253L4 250L8 248L13 252ZM553 146L552 138L560 129L574 135L565 145ZM430 136L445 141L437 156L429 146ZM779 162L778 154L788 149L796 158ZM969 43L976 44L983 58L974 62L963 58ZM519 202L526 195L528 199L529 206L523 209L519 205ZM739 55L741 54L751 65L741 71ZM1137 262L1133 259L1129 247L1147 247L1154 253ZM248 2L266 -1L265 5L254 12ZM442 222L438 205L445 201L456 205L450 221ZM950 18L949 25L941 27L940 19L941 13L948 14ZM516 175L525 176L528 187L520 192L511 184ZM600 294L607 279L617 286L610 300ZM827 13L813 15L807 6L821 -5L829 5ZM127 198L124 193L127 187L134 191L137 194ZM636 227L635 211L642 206L649 209L652 223ZM1009 176L1009 178L1008 184L1005 184L998 180L1002 174ZM904 172L919 186L909 190L895 181ZM832 279L825 282L818 276L821 270L827 270ZM690 224L680 230L672 220L684 211ZM876 254L873 253L869 248L872 245L875 244L880 248ZM472 193L472 187L479 189L479 193ZM161 123L153 122L156 112L160 109L169 117L168 123ZM627 146L620 139L624 130L638 137ZM451 47L460 37L465 43L464 54L452 56ZM1076 171L1071 169L1074 163L1076 163L1079 167ZM164 217L170 222L173 234L159 242L153 225ZM482 8L490 -7L497 -2L504 5L490 14ZM228 133L241 134L244 139L231 141ZM463 105L459 107L456 103L459 100L463 101ZM210 259L207 248L218 245L225 256L218 262ZM257 20L247 21L248 20L248 10L255 9L259 15ZM228 121L226 131L214 124L223 119ZM164 26L164 21L170 17L174 20L175 26ZM603 295L612 289L617 297L612 300ZM582 155L573 153L577 140L597 139L600 151ZM473 176L480 173L485 181L478 188L468 183ZM274 229L281 223L286 226L283 235L278 233ZM1118 19L1121 12L1126 14L1125 22ZM92 273L82 274L86 261L98 266ZM670 162L652 163L652 155L671 154ZM42 65L38 52L47 49L50 61ZM630 141L627 141L625 137L629 133ZM106 23L99 13L112 8L114 18ZM890 206L892 207L896 213L890 218L887 217L883 210ZM547 223L544 219L547 215L552 215L549 221ZM58 17L53 31L46 21L49 17ZM189 6L178 7L176 -4L190 -4ZM914 269L923 274L914 283L908 279L904 273ZM521 49L519 56L512 54L516 48ZM590 270L591 263L603 264L602 271L598 273ZM559 19L569 22L568 27L560 27ZM1005 279L1013 282L1009 298L1002 291ZM725 144L735 154L728 168L720 160L719 152ZM571 129L572 127L578 123L582 129L577 132ZM754 16L754 19L747 21L747 16ZM250 86L245 86L246 72L250 73ZM769 244L763 234L775 223L787 232L784 243L776 249ZM616 78L612 87L602 83L596 70L608 71ZM482 112L467 114L466 107L473 95L485 99L487 105ZM1052 7L1045 10L1037 8L1040 3L1044 0ZM506 267L503 274L491 265L502 261ZM305 176L300 168L308 163L313 168L315 172ZM5 -13L13 -11L11 2L6 2L0 -3ZM1115 129L1110 126L1115 123L1118 124ZM1012 196L1002 196L1005 183L1012 190ZM955 125L962 125L963 132L956 135L954 132ZM33 315L30 303L49 299L46 319ZM525 62L533 51L544 52L540 68ZM697 284L692 290L682 280L689 272ZM887 -7L893 -4L886 1L884 -2ZM642 259L646 269L634 278L621 267L626 258ZM409 106L418 97L422 100L421 114L409 109ZM309 36L306 29L314 25L316 34L313 37ZM330 66L333 59L351 64L346 70ZM195 170L192 179L182 177L187 167ZM627 206L623 194L634 192L647 202L642 210ZM238 102L238 108L233 111L230 101L234 97ZM1127 -1L1130 -10L1135 -8L1135 0ZM557 129L556 142L545 140L542 134L546 124L551 123ZM179 167L172 174L164 171L160 165L169 160L174 163ZM972 266L978 267L981 273L970 274ZM971 22L977 22L983 37L976 47L970 46L961 33ZM397 218L404 203L416 212L418 217L402 223ZM461 228L466 223L471 224L472 231L467 234ZM518 263L533 266L528 275L517 276ZM480 104L480 111L476 110L470 111L471 105L472 103ZM777 174L772 180L754 182L750 167L760 161ZM677 183L673 182L667 178L673 172L678 174ZM373 187L376 175L381 177L383 185L377 189ZM90 206L90 216L84 216L79 209L86 202ZM665 6L659 -3L662 -10L673 -9L671 -1ZM844 166L850 175L851 183L843 188L836 178L837 172ZM1029 16L1040 11L1039 22L1027 20ZM436 184L445 185L447 196L435 197ZM165 278L152 288L145 283L148 269L158 271ZM382 297L391 306L387 314L376 307ZM735 23L725 26L720 12L735 6ZM993 163L992 153L1003 149L1009 164ZM1011 22L1015 25L1016 29L1013 32L1009 31L1006 26ZM641 252L649 263L638 268L631 263L631 251ZM434 40L428 42L421 34L426 28L437 26ZM145 254L143 241L148 234L158 249ZM554 236L557 233L561 234L562 239L558 241ZM940 313L930 312L931 303L940 302L946 311ZM368 70L359 83L342 77L355 62ZM606 -5L605 -2L602 1L599 -1L598 -4L601 -7ZM93 178L81 168L89 159L102 167ZM863 275L868 278L864 284L859 283L858 277ZM562 -14L572 -10L575 1L560 4L553 -6ZM372 176L369 165L382 161L383 180ZM310 267L303 251L315 247L322 253L318 263ZM736 214L742 214L746 220L740 223L737 220ZM471 185L483 179L487 189L481 196L475 196ZM504 156L513 148L519 154L517 164L504 162ZM1062 7L1070 3L1075 15L1060 13ZM94 17L96 25L89 38L83 31L81 20ZM724 38L709 43L707 34L715 21L723 26ZM589 190L585 174L599 170L607 170L599 188ZM560 69L558 76L551 73L556 68ZM933 137L930 134L933 129L935 128L937 136ZM495 222L502 225L503 237L496 240L491 242L489 233ZM957 256L972 256L971 275L951 266ZM259 200L251 203L250 195L253 192ZM669 6L665 3L669 -3L672 3ZM314 242L312 249L309 249L303 244L308 238ZM658 207L676 201L678 215L666 221ZM770 164L777 163L777 166L772 168ZM64 170L61 181L46 177L54 164ZM89 290L99 301L90 309L82 301ZM692 92L700 95L699 106L688 108ZM693 311L690 312L685 306L687 302L693 305ZM585 289L590 300L588 309L571 299ZM540 307L521 300L529 288L538 293ZM626 7L621 12L611 8L611 1L616 -2ZM461 231L457 230L457 218L465 223ZM917 198L919 194L922 193L926 196L928 203L920 204ZM419 145L423 152L418 154L414 149ZM885 95L883 87L889 82L897 85L900 90L893 94ZM754 210L762 210L762 213L758 217L756 215ZM451 -16L451 8L435 -2L436 -12ZM943 267L938 263L941 259L946 256L948 265ZM959 48L953 36L964 33L967 44ZM451 161L448 149L463 149L456 162ZM438 270L442 271L444 273L439 277L435 275ZM758 268L751 262L749 253L769 249L767 260ZM1006 299L1003 311L995 312L993 294ZM890 171L890 180L886 179L885 170ZM666 -8L671 -16L682 -11L682 -6ZM674 86L682 95L681 101L675 101L667 94ZM869 135L862 132L866 123L876 132ZM448 21L441 8L454 8L459 14ZM295 151L296 153L295 158L292 159L290 155L291 151ZM722 0L723 9L715 13L712 0L717 -2ZM781 202L779 205L770 207L767 204L770 190L774 194ZM30 198L35 187L46 185L52 194L44 204ZM1007 73L1003 70L1008 66L1012 67L1012 72ZM187 233L181 235L175 229L178 222L182 223L189 225ZM533 169L531 150L547 152L547 166ZM970 237L959 223L967 215L976 224ZM229 68L215 61L221 51L231 55ZM387 84L381 90L375 82L378 75L383 77ZM319 36L320 28L327 19L334 26L329 39ZM767 222L769 217L774 218L777 219L776 226L772 225ZM257 59L260 67L252 71L251 61ZM-2 53L5 39L14 36L21 48L18 56L7 63ZM293 141L289 145L285 141L288 137ZM929 113L918 111L917 106L927 105ZM487 87L482 79L494 72L500 79L497 87ZM19 290L18 300L2 295L3 287L11 277ZM142 290L157 293L154 301L144 307L140 292ZM361 101L358 101L354 96L361 93L363 97ZM594 130L587 129L588 123L594 123ZM375 116L375 102L382 101L392 107L389 115ZM203 136L212 131L217 138L213 145L206 141ZM1115 252L1110 261L1102 260L1100 252ZM138 -7L152 -8L151 5L145 5L139 3ZM415 160L420 163L416 168L408 167ZM605 157L608 170L595 172L596 159ZM238 215L237 224L228 223L227 212L231 210ZM460 82L453 83L449 79L452 72L456 74L460 79ZM1120 225L1130 216L1136 222L1133 234ZM168 259L172 263L171 270L164 267ZM540 168L537 161L544 159L547 167ZM241 189L243 179L246 178L259 179L256 190L250 195ZM1058 9L1050 6L1054 -2L1062 3ZM742 24L743 28L740 35L736 26ZM271 24L269 22L269 17L273 17L275 21ZM408 205L407 211L398 212L397 202L402 202ZM137 197L129 205L117 192L126 187L137 190ZM1103 114L1111 126L1091 125L1093 117ZM648 132L645 126L650 123L653 125ZM122 85L123 93L117 92L120 84ZM620 36L621 34L628 33L630 37L627 39L621 39ZM829 232L822 231L822 224L823 223L831 228ZM864 250L859 245L865 242L867 247ZM446 15L453 2L469 14L458 29ZM808 183L814 185L802 197L798 187ZM803 145L806 143L810 142L811 147L806 149ZM479 227L489 224L495 225L493 232L487 237L482 232ZM301 35L294 34L295 31L302 30ZM1034 168L1040 177L1024 186L1022 174ZM1011 308L1012 303L1018 304L1017 309ZM827 120L823 129L814 123L816 112L824 115ZM750 203L749 210L740 212L739 211L738 203L746 198ZM257 49L254 44L261 39L264 46ZM1078 169L1070 166L1070 155L1075 156L1081 159ZM233 76L240 81L236 89L229 90L224 89L226 73ZM169 274L163 276L162 268L168 265ZM192 3L183 1L190 -8L194 -5ZM1139 49L1131 42L1146 36L1151 46ZM1083 148L1092 156L1095 166L1079 171L1077 155ZM280 221L282 223L277 230L273 227L270 222L274 219ZM910 54L921 63L914 67L910 61ZM75 29L77 25L81 26L83 29L78 34L75 31ZM496 271L513 266L515 275L509 286L499 279ZM227 214L228 231L222 231L214 214ZM108 297L102 293L110 283L122 287L128 295L117 306ZM1001 76L1003 84L1001 92L988 89L990 81ZM1012 248L1005 245L1004 231L1011 226L1017 234L1017 241ZM524 280L518 278L517 270L524 267L530 273L526 280ZM1013 233L1018 226L1025 224L1031 233L1024 241ZM718 15L729 18L731 21L720 24ZM805 154L795 149L802 141L808 142ZM436 97L422 97L422 90L428 77L432 76L444 87ZM884 231L888 219L905 226L901 232L890 236ZM784 19L779 22L770 19L768 5L781 4ZM357 172L353 173L349 170L352 167L358 168ZM868 69L876 69L873 82L860 81L857 73ZM421 207L408 213L401 211L400 202L408 195L420 199ZM960 283L964 292L955 292L952 289ZM305 33L306 39L299 43L291 40L292 33L298 29ZM938 259L935 256L942 252L945 255L947 257L941 261ZM1074 50L1071 62L1067 64L1048 56L1052 50ZM1038 55L1040 46L1044 43L1051 50L1048 54ZM488 18L489 10L496 1L505 14L496 27ZM785 25L769 30L765 18L783 16ZM69 96L84 96L93 105L77 113ZM1050 314L1037 319L1035 314L1043 306ZM1046 211L1035 209L1038 195L1054 199ZM775 244L768 243L764 236L766 231L774 231L776 235ZM536 146L536 157L522 156L526 147ZM471 37L466 36L469 28L476 30L476 33ZM906 186L923 182L924 199L903 192ZM329 280L315 277L318 264L323 263L333 275ZM743 75L728 86L718 81L726 69ZM176 283L168 282L170 278L176 277ZM981 144L991 144L986 152L982 149ZM149 104L157 103L161 115L153 122L143 120ZM1123 43L1120 32L1128 33L1131 39ZM579 311L576 305L581 301L585 304L586 310ZM1058 143L1043 159L1031 148L1046 136ZM188 201L176 208L169 200L174 193L179 189L187 198ZM386 172L388 162L402 158L402 170ZM509 68L500 61L507 52L518 59ZM539 86L547 92L550 103L545 112L531 102L535 94ZM960 107L951 101L951 89L960 88L969 93L967 100ZM1097 42L1096 53L1090 48L1094 44ZM263 216L262 225L252 239L244 223ZM269 308L281 290L284 300L280 316ZM226 15L240 18L237 26L222 24ZM1082 134L1073 134L1066 128L1071 119L1083 119ZM292 116L284 104L294 95L303 96L304 108ZM812 199L824 208L819 213L802 211ZM274 25L278 24L282 27L280 34L276 37L272 31ZM23 27L23 35L15 29L18 26ZM207 261L201 263L199 261L204 256ZM882 34L887 48L879 53L870 48L874 36ZM376 107L370 93L379 91L381 102ZM715 -13L728 -11L732 3L723 7L712 2ZM286 299L287 319L278 315L269 309L277 297ZM662 253L674 250L679 261L672 269ZM1081 -18L1083 -5L1066 -6L1063 -16L1071 -21ZM1040 264L1041 244L1050 247L1059 253L1052 265ZM398 191L393 196L390 194L387 188L392 184L396 187ZM158 65L159 72L154 74L151 69ZM176 96L171 101L167 97L169 90L176 92ZM992 24L993 29L986 29L987 19ZM916 245L912 258L900 250L904 244ZM179 69L167 71L158 64L163 59L173 53L176 60ZM949 158L943 152L939 145L956 138L961 146ZM249 37L255 22L263 31L257 44ZM935 47L931 37L938 36L941 44ZM563 222L555 213L558 206L565 200L575 208L571 216ZM913 192L907 187L906 175L918 167L923 175L923 187ZM516 194L523 191L523 200L516 201ZM876 238L892 229L896 243L878 245ZM515 110L514 102L521 96L532 102L529 111L526 115ZM956 129L946 125L951 112L967 114L968 124ZM547 224L568 224L563 237L555 241ZM396 224L397 212L404 209L412 209L419 216L410 228ZM565 213L566 219L563 227L550 225L550 217L555 209ZM430 250L434 254L424 260L422 257L424 250ZM943 261L954 265L950 272L946 277L942 265ZM897 80L904 75L906 77L907 83L901 86L897 85ZM594 278L586 284L580 269L589 267ZM1044 177L1026 179L1024 169L1028 161L1043 171ZM476 139L481 151L469 156L466 154L467 138ZM554 94L561 96L560 107L554 106L550 99ZM274 173L271 177L265 179L262 173L271 165ZM597 141L598 138L602 134L605 138L605 143L599 145ZM142 2L138 -1L136 -4L138 -9L143 -9L144 -5ZM133 205L123 190L135 184L139 199ZM1135 124L1126 129L1116 120L1122 112L1137 109ZM1074 10L1059 16L1058 9L1062 2ZM976 9L969 13L961 9L966 2ZM422 70L413 68L414 61L423 51L433 63ZM426 156L435 148L441 152L436 165ZM940 121L934 118L932 113L938 111L944 112L944 121ZM114 297L111 302L109 306L97 301L97 296L104 291ZM827 118L834 116L832 122L826 122ZM899 117L905 119L908 125L902 129L897 129L895 122ZM1056 134L1062 130L1066 136L1061 138ZM349 105L354 107L361 112L355 117L348 121L343 110ZM275 120L266 117L266 114L272 110L276 113ZM1081 117L1080 125L1070 127L1072 112L1077 109ZM1058 201L1053 210L1039 204L1053 188ZM962 167L961 160L977 154L980 165L977 170L971 176ZM23 108L23 105L26 102L31 101L32 106L31 109ZM832 155L828 159L821 152L825 147L829 145L836 150ZM91 33L112 35L115 45L91 41ZM794 297L797 290L807 288L804 302L799 302ZM579 197L579 203L572 201L577 196ZM706 3L684 11L681 1L688 -10L702 -4ZM1110 235L1109 229L1110 225L1120 224L1118 232ZM682 234L690 236L690 242L687 247L682 246ZM561 32L558 35L550 33L549 27L553 21L561 22ZM51 190L56 184L61 187L57 193ZM642 1L639 10L632 12L628 9L628 2L635 -5ZM1137 273L1131 276L1128 270L1132 265ZM173 133L174 128L187 123L196 130L193 141L184 141ZM256 220L253 221L250 219L253 214L254 212L258 218ZM494 89L490 103L480 102L471 94L482 78ZM643 103L657 111L658 119L648 124L637 121L634 111ZM706 242L700 242L697 239L698 231L708 233L709 238ZM816 264L830 260L829 271L819 273ZM940 117L937 113L942 109L949 114L944 118ZM722 216L719 206L724 200L731 202L736 210L731 213ZM699 314L688 311L684 304L697 293L702 302ZM826 189L832 190L840 204L829 213L823 210L816 194ZM666 10L667 19L663 23L655 17ZM357 -14L366 -3L350 7L347 0ZM495 237L495 246L485 249L480 239L494 235ZM957 109L955 99L970 100L964 116ZM1079 29L1078 22L1085 18L1090 28ZM148 173L142 170L147 163L155 163L161 166L157 176ZM1093 250L1108 253L1108 260L1095 266ZM738 303L746 297L754 305L753 310L739 312ZM1113 179L1110 170L1118 168L1118 183ZM648 276L644 270L642 268L649 265L652 270L652 274ZM1057 198L1058 204L1052 213L1042 208L1046 191ZM360 86L355 98L349 101L339 93L342 81L352 83ZM203 111L196 100L205 99L208 106ZM752 249L760 255L756 264L750 262L746 256ZM856 40L862 40L867 56L856 58L850 47ZM449 21L463 8L471 20L457 31ZM90 74L90 81L80 85L73 76ZM176 79L168 74L171 66L177 63L180 75ZM526 67L522 65L526 59L533 61L531 68ZM630 23L634 20L640 23L638 27L633 28ZM712 53L715 49L720 55L711 57ZM1071 256L1065 259L1062 255L1066 247L1073 250ZM504 45L516 46L515 59L513 63L500 60L497 52ZM658 295L665 302L658 309L654 296ZM415 192L424 194L429 202L419 214L414 212L408 199ZM731 -2L727 0L723 -1L725 -5L726 -9L731 -8ZM183 298L186 316L166 312L178 302ZM894 173L894 180L888 181L884 173ZM563 44L553 38L564 31L568 37ZM565 235L565 220L572 216L582 225L577 234ZM184 167L184 180L175 180L170 172L177 163ZM368 213L376 208L394 211L393 219L376 226ZM979 141L974 142L972 137L977 135L981 137ZM708 25L706 30L693 28L692 19L697 16ZM299 125L306 135L289 142L284 131L292 121ZM844 131L847 114L856 111L859 127L851 137ZM41 309L35 311L33 305L36 300L42 303ZM883 143L887 130L895 130L898 139L891 150ZM555 144L557 149L551 153L543 147L546 143ZM1112 241L1125 241L1128 251L1121 260L1104 250ZM1110 288L1114 295L1107 304L1097 295L1101 291ZM233 300L240 300L239 307L237 311L230 305ZM1033 20L1025 22L1023 17L1032 16ZM-9 218L1 202L10 210L13 218L-4 228ZM690 140L687 134L691 130L695 134L696 140ZM708 32L690 38L690 31L703 22ZM90 103L89 108L84 111L75 108L77 103L85 99ZM89 286L88 276L93 279L98 285L99 288ZM191 149L187 160L183 160L175 153L176 145L184 140ZM983 272L977 275L968 272L971 261L980 260L984 268ZM473 89L473 95L462 100L460 88ZM639 85L648 85L649 90L641 94ZM349 100L343 99L339 94L343 90L351 92L350 93ZM343 111L340 101L346 98L357 103L351 112ZM17 38L4 27L16 22L25 34ZM781 304L772 317L763 314L765 299L772 299ZM820 241L807 243L805 232L814 219L825 226ZM1129 233L1142 238L1142 244L1133 254L1126 242ZM25 35L24 31L27 25L36 26L37 29L32 35ZM621 52L619 48L622 46L628 48L629 52L624 56ZM456 114L461 120L455 126L449 121L452 116ZM938 293L942 299L934 304L928 302L930 293ZM420 206L407 201L413 189L428 188L427 203ZM878 238L893 232L901 246L895 256L884 253L881 248ZM499 305L511 299L513 310L510 321L497 318ZM870 161L866 164L850 154L855 147L871 142ZM182 175L194 179L197 187L192 189L174 188L174 180ZM652 113L659 110L667 120L660 129L650 123ZM746 67L746 54L752 49L757 55L760 67L753 67ZM243 11L254 25L249 30L234 34L229 20ZM811 254L815 257L814 264L806 265L801 260ZM912 48L905 40L914 38L918 39L916 45ZM452 195L447 198L442 194L444 190L448 185L454 191ZM381 243L385 238L389 239L389 246L384 247ZM540 20L543 35L531 38L527 25L536 18ZM192 186L200 177L206 191L198 198ZM240 270L230 257L233 251L243 248L246 259ZM968 63L963 65L961 64L962 56L967 55L969 59ZM344 169L346 171L347 175L342 176L339 175ZM1082 100L1076 104L1075 97L1078 95L1081 98ZM467 306L464 302L472 293L481 291L490 303L484 312ZM803 9L801 16L797 13L798 8ZM208 184L210 179L214 178L215 185ZM562 140L556 140L557 133L561 133ZM988 297L986 297L982 285L990 285L992 284L993 291ZM380 294L380 297L378 301L372 294L375 291ZM935 89L922 103L911 87L927 83ZM609 111L610 125L603 125L598 117L604 112ZM1132 151L1118 150L1123 137L1132 135L1138 146ZM870 212L863 208L863 200L868 200L876 207ZM459 25L467 17L474 21L475 29L469 30L465 32ZM524 298L527 308L519 313L515 304ZM714 104L713 102L712 97L718 98L719 103ZM530 173L539 171L547 173L544 187L539 186L529 181ZM769 231L770 240L765 241L763 235ZM585 280L594 284L596 295L590 300L582 295L583 283ZM671 159L659 156L664 149L671 151ZM1098 180L1105 192L1096 197L1086 189L1093 181ZM336 217L329 217L329 208L338 207ZM480 38L464 37L469 16L485 26ZM654 182L640 180L637 171L656 166L658 174ZM1094 289L1088 289L1086 286L1088 280L1093 283ZM572 -8L581 -12L583 -5L576 -2ZM869 275L867 283L848 281L862 272ZM232 37L240 40L243 48L241 55L228 55L226 47ZM356 81L349 77L352 69L360 75ZM593 302L600 297L605 304L595 308ZM972 220L957 214L964 206L975 208ZM169 -6L172 -10L175 -7L169 -3ZM987 216L981 212L986 207L994 212L991 217ZM139 61L139 58L138 50L144 51L147 55L145 60ZM406 216L409 218L413 224L412 233L404 228L403 225ZM565 300L565 305L558 307L559 300ZM303 91L303 86L314 84L314 91ZM659 206L657 195L672 194L668 206ZM919 -17L918 -5L916 0L904 2L901 -16ZM265 115L270 106L273 105L282 115L276 124L264 119ZM844 250L845 262L834 266L829 256L834 248ZM150 301L159 296L166 315L150 321L143 311ZM354 182L349 201L332 190L344 177ZM215 248L222 235L226 239L223 253ZM679 94L677 89L685 83L689 92ZM201 98L198 113L189 115L184 103L186 96L199 93ZM963 46L964 53L955 59L949 51ZM952 276L947 276L944 271L948 267L955 273ZM1031 222L1014 223L1005 214L1010 207L1024 206L1033 212ZM892 201L880 199L887 186L891 183L901 200ZM417 48L418 42L428 38L432 45L423 50ZM443 235L437 231L440 220L445 225ZM1117 0L1112 7L1101 5L1100 -4L1110 -6ZM194 67L201 76L204 80L196 85L187 84L184 77ZM189 223L182 211L181 203L197 209L196 214ZM618 26L627 30L628 35L618 37L616 33ZM892 6L898 -2L904 3L898 9ZM6 -8L10 -14L20 -12L14 -4ZM606 130L591 137L585 129L596 118L606 121ZM66 75L69 61L82 63L81 77ZM917 118L924 111L929 126L918 129ZM810 180L811 169L815 163L820 171L818 185ZM296 5L305 9L306 17L299 18ZM644 130L640 133L631 135L636 121L644 122ZM526 115L538 108L541 115L538 132L528 127ZM454 163L442 174L438 161L453 158ZM185 164L193 166L196 172L189 175L181 172ZM840 110L850 121L843 127L828 124L828 118ZM803 200L788 206L787 193L795 188L804 195ZM924 41L935 40L939 52L931 60L923 51ZM79 23L75 40L60 38L61 19ZM662 198L679 202L672 214L660 211ZM937 280L934 283L923 282L927 269L937 273ZM223 77L226 82L218 87L217 82ZM699 273L703 271L708 270L710 274L709 279L703 278ZM774 27L778 25L779 34L776 34ZM738 204L735 209L724 206L729 200ZM602 150L596 145L596 137L604 133L608 144ZM78 250L79 257L76 272L63 265L65 253ZM505 144L497 138L504 123L512 121L514 138ZM664 134L670 132L673 133L671 140L668 142L666 139ZM810 304L807 324L796 318L801 302ZM767 276L752 267L763 258L772 261ZM597 308L586 323L579 311L584 300ZM665 48L658 40L656 29L666 26L674 38ZM567 223L560 213L560 206L570 202L583 210L576 223ZM896 151L907 154L903 163L894 159ZM141 139L147 141L146 148L137 148ZM755 19L756 29L754 34L745 29L745 23ZM511 301L516 306L511 308L508 307ZM568 234L559 223L571 219L576 224ZM930 142L923 131L941 124L941 142ZM74 18L82 14L90 27L83 30ZM902 229L892 215L898 206L906 214ZM782 -12L786 1L782 15L769 7L766 -1ZM818 235L821 223L837 228L826 241ZM296 20L294 25L286 18L293 13ZM247 65L251 74L242 75L238 68ZM644 113L633 113L632 108L641 101L646 106ZM147 21L149 30L147 35L138 37L134 32L139 25ZM1082 124L1084 119L1087 117L1090 125ZM715 96L709 95L707 93L716 90ZM834 211L832 202L838 197L839 212ZM923 198L932 203L934 219L917 213ZM1136 290L1126 293L1121 288L1128 280ZM712 -3L715 -14L729 -9L730 -2L720 4ZM783 31L783 37L780 53L773 49L768 37L769 27ZM141 253L137 261L130 261L127 255L130 251L135 251ZM116 68L113 55L126 47L127 66ZM545 66L540 58L548 52L558 57ZM91 87L92 80L104 86L101 97ZM341 169L337 174L329 170L328 165L329 161L340 163ZM308 132L313 140L310 146L303 141ZM140 20L141 14L147 18L146 24L141 22ZM938 152L932 152L931 147L933 145L937 144L939 150ZM811 251L807 245L812 234L821 235L823 243ZM1113 140L1112 132L1117 133L1118 137ZM1050 248L1046 261L1039 254L1043 246ZM1009 266L995 261L989 255L1003 244L1015 254ZM952 303L954 299L961 298L964 299L963 309L958 309ZM1097 4L1081 -7L1088 -18L1096 -19L1103 -6ZM531 219L518 216L523 199L534 207ZM120 39L123 30L127 26L136 36L128 47ZM527 315L522 321L514 312L517 299L530 306ZM1062 19L1058 24L1049 23L1055 14ZM489 255L495 256L496 260L492 262L486 260ZM582 177L578 179L573 181L571 179L572 172L578 171ZM962 39L970 37L973 43L971 50L961 51ZM836 221L836 229L832 229L831 222ZM424 5L413 -9L432 -18L428 3ZM709 165L706 169L701 167L699 164L704 161L708 162ZM1113 85L1109 74L1120 73L1127 78ZM219 175L231 181L231 191L218 193L208 185ZM861 58L868 58L877 68L870 77L858 73ZM9 144L16 149L8 153L7 146ZM399 178L390 176L389 170L393 167L401 166L404 172ZM808 247L803 242L810 239L811 241ZM1043 80L1048 73L1053 77L1052 85ZM1019 27L1002 27L1003 14L1006 9L1018 16ZM1037 143L1040 131L1048 136L1047 144ZM131 119L113 124L108 106L126 105ZM885 314L883 304L887 298L896 309ZM136 195L128 191L131 186L135 191ZM806 38L804 48L792 36L803 34ZM319 74L331 81L327 94L318 92L311 81ZM225 176L207 178L205 163L223 164ZM649 222L648 218L651 211L660 214L659 223ZM596 93L598 109L582 106L583 94ZM1058 159L1061 165L1053 170L1047 169L1048 161L1052 157ZM324 226L326 238L316 240L307 231L312 224ZM1073 1L1074 20L1055 16L1058 1ZM577 140L578 128L590 120L597 136L587 143ZM35 285L43 280L48 281L45 289L38 295ZM1049 6L1039 6L1035 -8L1048 -10L1054 -6ZM157 61L161 60L163 64L159 66L156 66ZM288 -8L283 -11L294 -18L298 -15L295 -6ZM208 165L197 183L184 176L184 165L202 160ZM355 138L355 148L346 150L337 141L341 136ZM-3 294L2 294L3 300L-1 304L-8 299ZM340 9L343 9L344 13L343 16L341 17L336 13ZM44 221L46 223L45 235L34 234L34 225ZM590 254L594 250L599 259L597 266L587 265L583 257ZM759 149L749 146L745 138L752 133L763 137ZM841 272L838 257L848 255L851 264ZM525 48L519 42L521 41L529 44ZM40 263L43 260L53 254L57 265L54 271ZM439 300L427 295L432 279L437 283L442 289ZM1037 179L1032 176L1033 168L1038 168L1043 170ZM299 49L315 53L314 58L307 73L301 68L298 59ZM360 37L351 40L344 29L350 21L360 26ZM826 164L824 168L816 176L812 173L817 158ZM666 313L661 318L658 315L660 308L666 310ZM1075 58L1068 59L1066 48L1075 48L1079 50ZM640 78L632 72L633 67L641 70ZM605 93L597 88L595 85L601 79L610 82L609 86ZM560 250L562 254L555 262L550 252L552 246ZM736 83L732 79L733 75L739 74L743 76L743 82ZM715 82L710 81L710 78L716 76ZM1110 147L1115 135L1119 138L1122 145L1122 149ZM831 80L843 84L839 97L826 92ZM1128 -4L1134 3L1127 13L1116 7L1117 -1ZM-2 289L-6 291L-10 287L-7 282L-5 284ZM191 78L195 72L201 73L199 79L195 84ZM325 57L320 49L335 33L344 46ZM314 284L305 289L303 283L309 275ZM761 146L770 144L765 158L758 151ZM841 239L833 242L828 229L835 229ZM-21 296L-13 292L-2 303L-17 307ZM816 215L805 214L808 201L816 204ZM524 165L525 158L546 161L545 168L539 175L530 172ZM146 33L147 29L160 32L155 43ZM506 111L504 106L507 102L514 104L514 108ZM67 304L63 304L60 301L66 296L68 299ZM337 54L348 43L363 52L346 62ZM1020 248L1023 254L1018 258L1015 253ZM481 139L487 136L492 139L487 146L483 144ZM646 254L650 266L641 272L634 270L636 254ZM575 92L570 99L558 91L561 85L568 83ZM670 267L679 276L671 287L659 283L659 278ZM128 235L132 226L138 220L148 232L139 244ZM872 149L880 150L878 157L874 154ZM529 145L531 153L525 158L521 151ZM-7 48L1 46L2 49L-6 50ZM592 264L599 264L596 270L592 267ZM569 96L578 98L573 104L565 100ZM565 39L560 41L551 32L564 25ZM644 295L639 289L643 280L652 280L652 293ZM1141 101L1129 101L1126 90L1132 87L1143 89L1144 95ZM726 66L724 56L734 48L749 57L741 65ZM960 267L962 270L959 279L951 277L951 272L955 262ZM1022 288L1026 291L1015 295L1011 293L1008 288L1014 280ZM373 111L372 118L368 121L361 120L359 115L368 110ZM638 40L645 43L639 59L630 45ZM176 273L180 262L182 261L188 268L184 276ZM198 96L195 102L189 102L187 96L194 95ZM635 100L623 101L619 86L634 82ZM570 140L554 130L558 115L575 128ZM329 252L328 256L327 258L322 255L323 250ZM478 39L486 44L482 55L476 53ZM855 139L850 142L847 137L853 135ZM97 298L106 306L103 315L98 315L90 311L93 300ZM1056 79L1061 80L1062 83L1055 84ZM103 93L91 84L103 72L113 82ZM888 44L882 32L894 27L903 34L892 43ZM136 296L130 295L126 289L132 283L142 280L147 294ZM1057 178L1061 177L1064 184L1059 188L1054 184ZM636 170L646 157L659 164L660 171L652 176ZM111 131L106 124L105 113L116 109L121 122ZM28 123L18 131L15 120L22 116ZM498 200L494 207L488 206L486 199ZM694 213L696 224L690 223L688 215ZM-6 291L-4 296L-7 301L-15 300L-16 292L-14 291ZM-7 277L1 271L18 276L16 288L8 290L-2 289ZM645 117L641 118L637 110L643 105L649 111ZM789 284L801 289L799 304L784 299L782 293ZM924 7L930 5L933 16L931 15L924 14ZM892 218L883 219L879 215L885 209L892 206L896 212ZM795 130L803 127L811 131L811 144L798 145ZM799 220L792 207L804 199L812 209ZM1076 182L1060 187L1058 178L1057 169L1078 176ZM-1 257L-6 261L-7 250L-5 248ZM610 -8L618 10L608 9L600 -1ZM356 199L345 194L345 184L356 176L362 191ZM1026 208L1026 206L1030 202L1034 206L1031 211ZM1130 282L1151 284L1149 291L1131 295L1130 287ZM640 129L638 135L633 133L633 128L635 126ZM394 236L382 231L390 219L398 229ZM672 98L669 97L665 95L669 90L672 91L675 92ZM294 159L297 171L284 174L282 168L287 155ZM60 -3L71 -13L77 -6L73 8L64 6ZM899 105L912 97L916 116L899 114ZM37 157L32 159L28 160L24 151L28 146L36 146ZM934 110L929 106L930 99L932 99L939 103L938 108ZM517 33L513 35L511 26L516 25ZM517 80L509 80L508 72L507 70L516 70L520 73ZM931 22L932 25L926 28L923 24ZM579 46L574 39L585 36L587 46ZM341 100L332 116L326 111L324 101ZM147 116L141 111L144 102L151 105L152 110ZM136 199L141 208L137 215L126 209L130 204ZM241 62L246 64L247 69L241 71ZM676 136L666 144L658 127L665 123L680 127ZM72 220L64 221L60 211L68 208ZM878 225L874 221L874 213L883 210L888 220ZM782 293L780 288L790 289L785 294ZM598 307L600 313L593 314L591 308L593 306ZM302 51L297 55L294 56L288 48L296 41L303 48ZM652 105L643 90L651 83L661 98ZM1020 196L1034 189L1040 193L1033 204L1023 200ZM813 219L811 213L825 203L836 213L830 220ZM433 150L425 145L423 141L432 135L436 139ZM32 111L25 113L15 108L21 103L26 102ZM246 62L241 62L239 58L244 56L247 57ZM371 97L368 105L362 105L361 95ZM437 86L441 79L452 79L452 88ZM239 276L234 282L230 286L225 276L229 270ZM975 80L980 92L968 103L957 101L961 79ZM1098 272L1105 276L1090 289L1087 281ZM192 134L181 131L186 114L201 124ZM885 125L877 121L883 109L894 111L896 114L893 129ZM892 196L889 192L893 188L897 192L898 195ZM231 99L239 87L248 91L249 104L237 103ZM811 63L809 58L814 55L818 63ZM810 194L819 192L828 200L822 210L816 211L808 205ZM434 208L441 211L439 224L431 222ZM533 125L538 122L539 126L538 130L533 130L532 127ZM643 88L643 98L629 103L621 91L629 83ZM218 232L215 228L218 225L221 225L223 227L223 232ZM1061 13L1063 27L1051 23L1057 12ZM821 151L829 155L832 159L827 169L818 168L814 159ZM897 150L902 155L897 159L893 153ZM507 131L500 140L486 128L492 122L504 120ZM993 45L999 44L1005 50L998 58ZM122 13L117 9L119 1L129 0L131 10ZM389 168L399 156L405 159L405 173ZM640 190L653 177L656 181L659 201L647 196ZM110 81L119 88L116 92L101 92L101 85ZM284 290L288 285L296 292L286 295ZM332 240L332 248L330 254L321 247L322 239ZM634 139L643 143L634 157L621 151ZM170 31L180 30L190 38L185 46L179 52L169 45ZM333 269L332 258L337 258L343 264L342 271ZM784 62L781 47L786 40L795 56ZM754 168L758 165L764 174L750 183L747 177ZM1128 121L1118 107L1119 104L1136 107L1137 113ZM569 8L579 11L578 24L574 29L561 23L559 17ZM594 -3L597 -6L600 -7L604 -4L599 0ZM439 203L447 209L451 219L438 222L429 215ZM201 266L195 270L190 265L193 261ZM39 270L42 274L36 278L34 275L34 273ZM62 168L61 166L65 160L68 162L70 167ZM130 193L145 200L140 210L126 207L123 200ZM1022 5L1023 10L1017 9L1017 4ZM370 305L364 307L362 299L369 298ZM465 45L469 57L468 62L450 58L454 53ZM439 312L430 311L431 306L439 301L445 308ZM761 272L760 278L755 279L753 277L754 273L757 271ZM652 187L663 190L658 197L652 195ZM671 179L667 174L668 171L675 168L680 174ZM502 229L498 219L509 213L515 226L510 232ZM817 84L811 77L817 70L826 70L828 77ZM83 -1L79 -7L84 -10L88 -7L87 -2ZM838 49L829 49L828 36L837 33L845 37L843 42ZM1046 137L1039 130L1043 124L1052 125L1050 134ZM211 192L217 191L217 197L213 200ZM151 16L144 15L142 11L150 13ZM861 58L857 49L870 45L874 52L865 60ZM959 105L974 109L970 120L960 120ZM613 115L603 112L600 97L610 91L621 100ZM232 17L229 20L225 15L229 11ZM129 39L126 50L122 50L114 45L122 38ZM1008 244L1023 233L1032 247L1022 256ZM498 34L501 47L497 46L495 38ZM826 316L819 312L821 295L830 297ZM1 20L9 12L15 21L7 25ZM858 284L849 280L854 270L862 271L865 282ZM121 181L112 182L110 178L114 172L123 175ZM549 222L550 233L547 231L539 228ZM316 307L322 302L327 315L314 313ZM657 214L648 223L638 226L636 215L642 205ZM812 262L814 256L819 252L829 255L825 269L819 268ZM549 215L546 226L535 219L537 207ZM209 225L210 236L204 240L192 230L198 224ZM559 63L565 66L566 74L559 75L555 69ZM604 31L610 20L619 23L617 35ZM8 80L12 77L22 80L19 83L12 86ZM557 34L550 31L552 26L558 28ZM818 103L823 98L830 98L831 107L827 110L823 111ZM520 74L521 81L517 82L516 76ZM998 5L988 1L1001 -8L1010 -7ZM175 69L176 79L168 78L164 71L168 64ZM193 88L189 82L193 76L197 79L197 85ZM427 218L432 218L438 227L435 230L427 228ZM572 -20L581 -16L583 -13L575 0L572 -4L565 -11ZM517 146L521 154L516 159L511 159L510 152L513 147ZM817 259L820 269L812 272L811 262ZM345 219L338 223L334 218L342 214ZM241 -5L243 6L226 11L222 5L234 -12ZM986 112L981 107L984 103L987 101L993 104L992 110ZM312 255L323 255L320 270L313 269L310 259ZM762 93L755 99L749 96L756 87ZM609 229L607 216L614 217L622 223L616 227ZM898 132L897 151L891 154L884 146L887 135ZM858 137L862 137L864 142L859 144L857 140ZM241 52L249 52L255 55L254 61L245 63ZM899 255L906 259L900 269L891 264L893 257ZM1067 80L1074 82L1071 98L1057 92L1060 80ZM257 217L263 220L264 235L252 235L248 220ZM720 0L709 9L706 11L702 -2L716 -8ZM878 240L879 244L875 247L870 242L875 239ZM0 128L6 131L7 135L2 140L-3 137L-4 130ZM1073 46L1068 39L1071 35L1078 40ZM542 167L552 175L549 183L542 187L533 182ZM122 48L131 50L136 59L125 65ZM600 63L604 57L619 54L620 68ZM496 162L499 153L508 155L507 164L498 167ZM1031 150L1031 161L1025 161L1021 147ZM466 173L470 169L481 173L472 182ZM1031 251L1038 250L1043 256L1043 267L1029 267ZM822 155L817 157L814 153L817 148L822 150ZM308 95L295 90L297 83L310 83ZM782 193L774 196L771 194L773 188L781 189ZM148 -12L144 4L135 4L139 -11ZM249 -20L258 -9L247 -3L242 -14ZM335 165L338 153L349 161L351 174L337 174ZM1082 185L1075 180L1075 175L1081 173L1085 178ZM192 88L192 90L191 94L186 94L185 91L188 85ZM648 108L649 111L643 114L640 109L645 106ZM398 -1L401 7L384 6L383 -4ZM993 300L987 291L996 286L1006 293L1004 298ZM908 63L908 60L910 52L917 50L923 60L918 66ZM791 -15L800 -9L801 0L790 8L785 -1L786 -7ZM1141 148L1137 151L1131 148L1140 142ZM1002 58L994 59L994 53L1005 51ZM56 59L62 61L62 65L62 68L54 66L54 64ZM878 250L883 246L893 251L892 261L882 258ZM514 107L514 111L511 113L506 108L509 104L512 102ZM593 150L590 148L588 142L590 135L596 137L599 146ZM1099 156L1105 150L1111 157L1109 163L1107 165L1096 164ZM571 12L582 18L573 26L569 16ZM373 177L380 181L374 189L367 186L363 180ZM622 148L619 154L612 151L610 143L620 140ZM1007 130L999 131L992 115L1006 115ZM612 133L615 136L614 148L606 148L604 149L599 139ZM754 191L752 194L743 194L744 189ZM832 294L824 306L814 308L805 297L818 284ZM206 181L198 183L194 182L191 174L201 171L203 172ZM509 41L512 36L516 40L511 46ZM296 135L306 127L321 130L316 143ZM627 254L617 259L613 241L625 243ZM226 76L227 83L221 81L220 78ZM570 71L569 82L563 86L556 76ZM206 202L211 199L214 201L213 208L206 208ZM18 217L20 223L5 228L1 217ZM170 45L165 35L170 28L177 28L182 38L173 48ZM312 163L321 151L332 164L328 174ZM1078 257L1076 261L1072 258L1071 252L1077 253ZM36 225L30 221L31 216L41 214L40 221ZM654 167L647 167L643 155L655 149L665 159ZM414 214L410 223L399 223L393 215L411 208ZM837 253L841 258L836 263L832 258ZM136 101L126 103L127 85L129 83L138 94ZM69 183L66 187L63 185L64 180L66 178ZM229 252L223 242L231 234L237 237L240 243L237 250ZM619 2L607 11L602 -3L614 -5ZM730 189L737 190L735 198L732 202L724 199L725 192ZM44 154L41 144L45 143L51 144L48 153ZM656 70L661 65L666 76L654 80ZM-6 213L-9 205L-6 203L-2 211ZM990 12L981 7L990 -2L1000 3ZM202 37L211 32L218 38L216 43L205 44ZM826 248L831 248L830 253L825 252ZM573 112L577 110L578 117L574 119L572 114ZM796 78L800 85L793 88L787 87L786 81L793 76ZM355 213L356 205L360 207L360 213ZM673 145L668 156L656 154L650 143L661 137L670 139ZM1084 77L1088 85L1082 93L1076 88L1079 82ZM353 30L343 27L342 22L354 24ZM672 204L671 200L686 198L693 203L685 212ZM622 293L635 295L634 311L626 314ZM242 181L247 185L248 191L246 193L241 193L237 186ZM967 50L969 44L973 45L975 50L972 52ZM639 279L638 281L634 283L632 282L632 277L637 276ZM2 176L7 184L3 192L-6 192L-7 185L-2 178ZM227 160L222 156L222 151L229 154L229 156ZM677 64L685 75L676 86L668 77L666 70ZM1058 54L1051 54L1046 49L1049 45L1056 47ZM674 275L665 279L656 277L650 273L656 264L666 264ZM107 161L118 174L116 177L101 168ZM223 77L224 85L217 90L213 86L213 78L219 77ZM674 236L681 243L675 248L668 248L669 239ZM680 -19L686 -12L679 -5L668 -1L665 -8L665 -19ZM52 258L55 252L63 253L58 261ZM570 86L583 78L585 92L569 95ZM275 106L272 99L273 97L281 98L279 102ZM208 114L202 110L210 101L215 111ZM147 128L151 112L157 114L157 131ZM543 256L527 253L537 239L548 247ZM621 -9L623 -7L624 -2L619 -1L617 -8ZM527 108L520 109L519 103L520 95L528 96L532 105ZM949 101L960 112L944 124L939 107ZM1075 -2L1071 4L1062 -5L1072 -9ZM132 17L132 10L134 8L140 13L139 18L134 21ZM1071 25L1072 19L1077 8L1083 13L1086 21ZM1027 167L1022 174L1010 170L1014 163L1019 158ZM529 73L523 82L510 71L518 64ZM850 159L843 161L839 150L842 146L849 144L855 152ZM995 304L986 287L992 284L1004 292ZM1101 71L1089 75L1090 64L1099 66ZM109 30L115 23L120 26L114 34ZM659 132L647 135L643 119L649 116L660 117ZM901 -2L901 12L894 17L886 -1ZM233 27L232 31L229 32L225 26L228 23ZM139 109L131 111L128 106L133 101L139 104ZM159 230L168 232L173 238L157 240ZM160 41L176 49L171 56L163 67L155 50ZM1085 176L1088 188L1080 191L1073 186ZM286 149L289 140L293 140L299 144L301 151L293 156ZM1031 278L1045 292L1033 303L1020 293ZM66 23L78 36L75 39L60 33ZM802 284L799 276L802 271L809 273L812 280L808 283ZM443 214L432 215L438 201L447 210ZM482 49L487 51L484 60L470 53ZM488 183L483 188L470 180L479 173ZM1000 275L1001 279L997 292L990 286L989 283ZM217 177L210 171L216 155L234 163ZM872 248L870 253L863 252L864 244L869 244ZM650 190L640 198L635 186L649 181ZM882 74L875 88L865 83L864 73ZM712 142L706 147L702 144L704 139ZM486 140L492 146L486 152L483 150L484 142ZM1014 111L1020 119L1018 133L1005 123ZM531 127L524 125L526 109L539 113ZM956 146L962 146L964 149L964 152L959 155L956 151ZM1013 180L1015 175L1033 179L1032 187L1017 194ZM719 301L721 299L739 304L733 318L723 315ZM929 71L919 72L913 58L932 46L938 53ZM154 184L158 194L142 198L139 186L152 177ZM308 60L315 72L305 82L300 74ZM906 162L910 170L905 173L902 167ZM1019 263L1025 259L1029 265L1023 269L1020 269ZM818 298L818 320L805 319L801 304ZM1142 201L1128 207L1122 198L1134 195ZM853 139L852 121L866 124L869 132ZM795 207L792 203L791 197L798 194L803 199L803 203ZM474 107L472 104L475 99L479 106ZM217 -1L205 -4L207 -7L216 -10ZM439 183L425 179L427 172L438 164L444 169L442 180ZM368 264L374 277L364 282L361 270ZM4 91L4 103L-10 107L-13 92ZM493 6L483 10L479 4L493 -5ZM667 81L656 70L663 61L675 71ZM993 202L985 201L976 197L984 184L992 181L997 191ZM390 190L395 189L402 190L397 204L389 202ZM819 60L828 55L839 66L830 78ZM594 141L600 142L601 147L593 149L591 146L591 141ZM1085 -14L1090 -12L1090 -7L1090 -6L1085 -5ZM272 65L269 55L285 52L288 66ZM942 273L945 262L955 266L950 273ZM986 1L998 10L997 13L987 20L979 7ZM918 139L902 133L911 120L924 120L925 128ZM782 43L773 51L766 56L759 39L768 31ZM490 41L485 35L493 29L500 31L499 39L492 42ZM44 127L34 130L29 118L45 118ZM416 252L416 257L412 259L409 258L410 250ZM486 216L494 213L501 219L492 227ZM593 10L583 10L588 1L594 3ZM864 161L863 167L860 167L856 164L859 161L864 161ZM39 125L39 119L45 118L44 124ZM159 246L155 254L146 254L145 247L152 240ZM958 176L959 164L967 166L963 176ZM244 93L225 88L227 79L249 85ZM461 50L469 57L462 64L453 59ZM144 13L149 21L140 24L137 19L140 14ZM10 183L19 176L26 183L29 187L20 192L13 188ZM386 173L381 166L385 164L391 165L390 171ZM935 212L927 214L924 208L937 204ZM875 212L873 218L867 216L864 210L872 209ZM862 243L858 245L850 243L852 236L859 231ZM863 203L852 187L869 185L871 195ZM635 140L618 141L613 129L622 120L636 130ZM284 133L279 120L289 117L295 126ZM751 2L754 6L754 8L751 12L747 10L747 4ZM799 214L803 208L806 209L807 216L804 220ZM920 5L930 8L926 15L916 13L914 5ZM166 20L162 23L159 16L163 14ZM501 7L513 13L514 19L506 27L496 19ZM1074 267L1070 263L1077 259L1077 264ZM895 257L896 237L913 243L908 251ZM945 204L955 206L958 221L946 226L937 217ZM168 178L178 192L178 200L159 196ZM808 279L802 284L793 280L793 268L798 261L811 262ZM576 117L562 111L566 101L580 99L583 110ZM555 60L559 56L564 59L568 63L564 69L557 67ZM725 252L720 234L731 233L737 250ZM865 276L861 285L852 278L852 267L859 266ZM1003 101L1013 88L1032 97L1027 107ZM117 117L118 125L107 132L106 117ZM1049 227L1053 223L1056 227L1057 230L1050 231ZM453 282L460 282L466 288L456 295L449 289ZM528 145L530 141L532 139L535 143L533 146L530 148ZM772 0L774 6L753 13L752 4ZM980 85L976 76L982 71L988 71ZM385 143L402 135L407 142L402 153L391 153ZM687 121L698 131L688 144L683 145L679 127ZM96 289L88 292L81 283L88 273L101 279ZM619 246L618 252L610 254L607 242L616 240ZM913 160L926 157L924 170L920 173L911 169ZM672 83L663 97L660 90L667 73ZM515 100L517 104L514 107L506 102L509 98ZM996 292L988 303L979 298L980 289L992 284ZM163 84L168 73L176 67L185 79L178 91ZM696 181L695 172L707 179L700 184ZM713 275L714 274L721 274L720 279L717 281ZM1084 201L1080 208L1076 205L1072 200L1078 198ZM573 14L585 18L583 26L575 32L567 22ZM341 164L349 174L337 180L333 175ZM548 96L540 89L547 77L553 88ZM660 62L649 70L639 68L647 50ZM1048 175L1056 179L1059 186L1050 190L1043 184ZM333 5L320 19L313 8L326 -2ZM1048 95L1042 86L1047 78L1059 84L1064 92L1053 94ZM186 128L183 116L198 106L202 122ZM900 304L893 296L896 288L902 288L910 292L904 300ZM874 71L865 71L866 66L873 65ZM482 22L474 29L467 27L468 16L469 12L480 17ZM700 153L701 149L708 148L705 155ZM689 231L690 239L688 242L679 239L680 232ZM109 24L105 24L101 19L103 14L107 13L115 17ZM952 4L949 -6L961 -9L967 -1ZM902 235L900 236L891 231L893 225L898 224L902 225ZM315 233L317 230L321 237L320 242L315 241L312 237ZM999 114L990 115L990 110L998 104ZM757 211L769 215L768 220L760 229L754 222ZM80 282L76 291L67 297L59 290L62 277L72 279ZM44 147L48 156L34 156L37 151ZM796 12L801 12L803 15L801 17L796 18ZM1134 123L1141 125L1137 132L1134 130ZM164 18L164 26L159 29L152 25L149 22L158 16ZM682 229L689 225L693 236L687 240L679 237L680 232ZM727 23L706 30L704 19L726 9ZM465 289L455 282L464 270L470 271L476 275L475 284ZM776 157L767 157L768 148L782 148ZM240 266L230 265L228 260L232 254L237 252L243 263ZM692 80L688 74L696 63L703 74ZM455 176L448 181L433 175L432 168L441 162L451 167ZM867 241L863 246L857 243L860 237ZM454 46L455 53L448 52L450 46ZM1045 107L1042 100L1045 98L1049 101L1049 105ZM555 315L550 317L547 315L548 310L553 309ZM835 148L841 151L840 160L829 160L828 154ZM754 232L756 232L759 238L753 240L747 239L747 233ZM511 157L505 156L505 152L511 151L514 154ZM28 186L12 183L12 173L18 168L29 166L34 174ZM867 109L875 110L880 115L876 118L864 118L863 113ZM614 191L614 197L608 196L608 189ZM171 301L175 302L180 304L176 310L171 308ZM747 101L749 111L746 114L738 112L741 101ZM174 19L174 13L187 12L191 16L190 26L180 25ZM668 124L665 110L673 110L678 116L675 122ZM873 154L870 148L878 145L883 148L877 156ZM449 164L445 155L454 150L458 157ZM78 94L78 85L93 82L96 87L92 96ZM804 42L798 47L787 43L787 37L802 32ZM668 209L659 217L656 219L651 204L660 204ZM481 5L489 6L483 15L478 7ZM254 189L262 193L264 205L258 208L250 198ZM448 14L446 5L454 1L457 1L457 12ZM11 137L6 131L7 126L17 124L20 131ZM1002 108L996 100L1005 91L1009 95L1011 108ZM901 192L902 203L896 205L892 201L894 192ZM714 28L723 34L721 39L711 37L709 27ZM511 269L512 264L520 262L523 267L518 275ZM616 18L610 10L617 2L622 10ZM112 180L100 167L107 161L118 157ZM46 185L27 182L31 162L42 169ZM415 244L421 249L421 260L403 263L400 254ZM437 153L443 162L437 169L431 167L425 162L433 151ZM183 168L193 160L202 167L206 174L189 179ZM127 120L132 120L132 124L128 124ZM479 209L469 201L482 197L486 210ZM858 155L850 161L843 150L856 145ZM31 14L31 21L18 13L26 7ZM560 248L566 236L574 242L572 247L563 251ZM1036 -10L1044 -11L1045 9L1029 3ZM101 169L106 172L106 178L101 177L98 172ZM601 209L608 204L615 207L610 214ZM162 144L169 155L165 163L156 165L143 158L143 151ZM317 -11L324 -14L325 -9L320 -2L314 -5ZM39 -3L42 7L41 12L28 6L34 -3ZM302 172L287 171L291 160L304 166ZM563 224L565 215L578 211L577 226ZM1059 292L1062 279L1070 278L1075 291ZM308 214L300 203L306 197L315 201L319 212ZM661 298L657 296L656 292L659 287L666 290L663 296ZM265 150L264 144L267 140L276 143L272 150ZM418 214L410 211L411 204L415 202L422 207ZM147 224L154 221L155 232L153 237L144 239L140 228ZM912 -2L914 -2L914 5L909 1ZM131 41L130 45L125 45L123 41L124 40L130 40ZM898 211L890 212L888 198L896 193L901 203ZM990 269L985 271L982 266L986 262L990 267ZM467 77L467 80L457 74L457 67L462 63L469 68ZM86 89L80 78L85 74L87 73L93 82L93 84ZM735 99L740 95L744 99L739 103ZM1055 75L1051 73L1051 68L1058 72ZM203 109L205 100L211 93L218 107L217 112ZM249 134L254 141L247 149L233 148L227 139L235 129ZM610 207L608 204L617 199L621 203L617 209ZM830 158L840 163L836 174L825 169ZM226 65L233 60L236 67L231 73ZM925 178L921 181L919 171L924 171ZM26 118L31 117L34 123L29 128L23 127L22 123ZM892 276L890 271L890 265L896 264L901 270L901 275ZM170 113L158 127L147 104L157 105ZM791 219L790 215L802 218L798 227ZM1044 244L1048 236L1062 232L1060 247L1050 246ZM929 157L916 153L918 146L930 145L932 151ZM1028 264L1040 265L1042 275L1035 281L1026 279L1024 266ZM408 159L412 157L414 162L412 169L406 169L403 161ZM68 54L65 58L59 57L59 51L60 47L69 50ZM1108 186L1107 196L1100 199L1090 193L1102 179ZM450 83L451 68L458 67L467 78L459 85ZM891 31L890 38L877 37L884 27ZM472 175L463 173L464 167L470 168ZM847 111L855 116L862 121L854 135L838 126ZM682 21L685 24L684 30L677 29L676 27L675 22ZM1051 302L1051 296L1054 295L1058 296L1058 303ZM883 249L882 252L876 247L873 242L879 240L884 239ZM857 238L857 244L843 242L844 239ZM291 68L286 65L291 50L297 57ZM1084 258L1077 257L1077 253L1082 252L1084 253ZM172 164L184 174L182 183L176 185L163 180L162 173ZM910 206L915 210L912 215L908 215L903 211L904 208ZM470 9L476 17L470 25L458 15ZM774 81L766 84L753 77L765 64L771 68ZM548 -12L539 -6L538 -15L545 -16ZM823 50L827 41L832 40L833 48ZM964 279L967 278L977 279L972 288ZM416 73L427 76L425 81L420 86L414 83ZM166 -9L170 -7L172 -4L164 -1L159 -3L162 -9ZM990 192L992 187L996 190L998 191L993 195ZM827 79L840 79L843 92L832 93ZM145 313L138 318L135 303L139 299ZM360 162L371 167L372 182L350 174ZM595 251L604 243L612 256L604 265ZM463 287L467 293L450 296L450 287ZM962 120L958 136L951 130L949 119L959 117ZM750 194L756 195L754 198L751 205L747 200L745 196ZM647 247L651 252L639 258L631 250L641 240ZM566 243L572 242L574 247L572 249L568 248ZM165 163L160 156L163 148L169 150L168 158ZM222 301L220 293L234 288L239 301L229 307ZM1006 306L992 299L993 290L1005 289L1010 299ZM97 223L105 228L94 243L89 242L87 222ZM746 205L751 206L744 219L734 212L730 205ZM874 188L868 175L874 171L881 184ZM193 63L201 78L192 85L186 82L182 73L183 69ZM50 8L54 17L51 25L40 23L36 13ZM685 32L697 27L701 38L698 49L689 50ZM1023 248L1029 252L1026 258L1021 257L1021 252ZM1020 229L1011 227L1013 208L1023 211L1034 219ZM691 21L683 16L688 13L695 16ZM167 180L167 169L179 167L180 178ZM891 174L896 177L889 187L884 185L879 177ZM1136 178L1144 182L1138 193L1130 186ZM621 76L614 79L614 70L619 66L625 75ZM742 91L748 85L755 92L755 97L746 100ZM1001 35L988 27L997 20L1001 25ZM201 121L199 126L192 130L190 127L191 121ZM552 232L556 228L558 240L555 243ZM352 125L357 116L366 123L356 129ZM760 70L753 78L744 72L740 67L753 60ZM651 64L644 63L644 58L653 54L655 56L657 64ZM1070 66L1079 69L1079 78L1073 77L1066 75ZM557 -8L564 -8L569 10L550 10ZM759 67L747 65L744 55L754 50ZM1060 215L1074 226L1059 241L1051 228ZM668 80L665 77L668 73L673 76ZM784 54L778 53L782 39L795 43L794 51ZM564 115L570 113L574 119L569 123L566 123L564 121ZM934 33L932 28L929 20L936 17L940 18L946 26ZM1053 6L1041 3L1044 -7L1057 -8ZM568 277L570 282L569 285L564 283ZM803 105L798 112L795 112L790 104L793 99L800 100ZM745 90L754 100L741 107L734 95ZM1083 17L1079 22L1075 15L1079 9ZM160 139L160 142L154 145L152 142ZM832 177L832 184L825 192L822 182L826 176ZM770 53L779 68L775 72L765 67ZM289 195L299 192L310 198L305 209L295 209ZM183 244L194 239L203 246L195 260L188 259L181 251ZM188 176L189 178L189 187L181 188L181 182ZM293 176L301 186L288 193L279 186L285 174ZM668 255L665 259L656 256L656 250L667 244ZM783 281L786 271L797 272L797 280L796 283ZM-11 207L2 213L1 220L-16 223L-21 216ZM65 145L69 149L66 158L59 153L61 146ZM845 13L850 17L845 25L841 26L837 20L837 17ZM483 177L484 166L493 168L500 178L488 186ZM611 86L606 91L598 86L598 79L604 77L611 82ZM994 159L993 150L1011 145L1017 163ZM213 105L213 112L209 115L205 112L209 104ZM719 81L724 88L716 91L712 86L716 80ZM686 18L674 19L668 14L670 7L677 -1L682 6ZM206 147L201 153L187 153L182 137L192 129L203 133ZM588 274L591 263L598 262L605 272L598 278ZM635 105L646 107L646 118L638 119ZM316 4L313 17L299 7L301 -6L310 -5ZM657 190L660 184L666 186L670 189L661 195ZM252 89L264 84L271 82L270 102L261 101ZM452 158L455 153L465 151L468 157L460 163ZM688 295L691 285L695 288L695 295ZM688 80L688 88L675 89L677 76ZM859 184L861 175L869 178L869 181ZM73 34L71 30L78 17L82 28ZM423 235L428 230L434 233L437 239L431 241L425 242ZM23 142L19 132L22 124L30 122L34 131L32 138ZM1012 128L1009 136L999 139L998 134L996 129L1003 121ZM886 128L885 119L898 113L902 119L905 131L895 136ZM710 7L719 12L711 22L699 11ZM526 84L518 77L525 66L533 72L531 80ZM671 97L665 91L662 85L677 78L679 89ZM532 96L539 95L542 102L540 105L535 107L528 104ZM558 31L552 20L565 17L569 30ZM112 19L113 16L120 17L120 23L117 25ZM14 56L8 63L2 58L3 51L11 51ZM528 97L533 83L537 79L548 101L536 108ZM130 217L135 222L135 227L122 226ZM933 65L927 71L924 69L922 63L924 58L929 60ZM988 40L982 41L978 30L991 28ZM65 -17L67 -7L58 -6L61 -18ZM30 219L30 214L35 214L38 218ZM1097 222L1096 233L1083 229L1086 217ZM947 12L930 23L925 10L927 0L940 3ZM657 292L659 287L665 287L664 293ZM449 178L449 183L444 183L443 179L444 175ZM39 57L52 61L45 72L35 66ZM615 134L604 119L617 117L625 125ZM714 303L707 306L700 304L701 295L707 293ZM745 243L747 234L756 237L756 244ZM680 183L674 177L681 168L691 168ZM62 140L62 147L57 148L55 143ZM1094 41L1086 46L1078 39L1080 33L1090 33ZM958 279L970 282L970 287L959 292ZM741 152L744 149L756 145L755 154ZM805 95L808 92L816 94L815 101L814 105L806 107ZM838 223L834 226L828 225L824 220L828 216L838 219ZM405 147L404 134L408 130L420 136ZM710 283L723 274L730 282L720 292ZM294 164L283 164L289 155L293 157ZM190 21L197 6L210 15L199 23ZM602 236L595 234L591 227L602 224L607 227ZM318 27L311 23L313 17L316 19ZM268 150L264 159L253 153L251 144L266 141ZM797 281L806 279L805 289L796 286ZM975 167L979 163L984 165L982 169L978 172ZM709 27L701 26L691 19L695 7L708 4ZM513 211L516 207L522 213L520 215ZM879 36L889 34L889 45L887 46L879 48L879 40ZM336 270L343 265L358 266L357 275L356 280L342 280ZM994 83L988 91L984 86L988 78L993 80ZM950 223L960 222L963 229L951 231ZM1009 48L1011 40L1022 41L1023 48L1020 51L1015 52ZM1078 273L1087 272L1096 286L1084 290ZM1040 128L1039 139L1029 141L1021 129L1026 125ZM173 304L160 295L167 291L182 294L185 301ZM412 15L433 11L430 22L419 27ZM962 17L955 13L954 5L966 5L968 12ZM425 198L431 197L435 199L427 204ZM739 203L745 200L752 202L753 218L744 219ZM317 274L308 279L308 268L311 267ZM638 46L653 51L644 67L627 53ZM4 50L-6 57L-12 50L-3 37ZM41 252L45 253L48 259L46 264L38 261L36 258ZM940 19L936 11L940 9L945 11L942 18ZM584 39L581 50L566 53L563 38L570 39ZM376 237L379 243L375 246L370 239ZM909 166L906 159L914 156L917 157L916 165ZM786 195L778 202L776 186L780 186ZM1095 2L1101 3L1102 9L1094 9ZM430 180L421 180L422 169L432 166ZM677 246L679 248L673 255L667 247L669 243ZM154 8L156 16L145 20L143 8ZM177 9L189 17L183 30L168 25L168 16ZM232 228L229 228L225 219L230 215L235 221ZM603 224L605 214L612 212L619 217L619 222L610 228ZM531 301L551 298L556 306L546 315L534 308ZM1058 219L1054 207L1064 201L1071 215ZM545 244L545 249L539 254L533 253L533 249L536 243ZM653 229L653 219L659 213L666 220L663 231ZM852 150L849 141L857 141L856 150ZM575 47L572 40L576 34L580 37ZM244 259L232 245L245 235L258 242L251 252ZM750 -15L760 -6L751 0L742 -1L740 -9ZM1007 242L998 232L1003 217L1017 227L1017 237ZM753 42L750 48L744 43L743 35L749 32ZM487 201L479 195L487 189L492 194ZM775 41L769 38L771 29L775 29ZM1030 80L1036 71L1041 74L1043 87L1035 92ZM1033 108L1031 103L1035 101L1037 108ZM1124 7L1127 13L1121 23L1112 14L1115 9ZM680 44L677 56L671 56L669 46ZM1045 7L1052 11L1054 22L1049 25L1041 23ZM614 304L623 318L606 319L600 309ZM578 190L592 189L589 208L583 208L571 201ZM425 165L434 164L439 179L428 178ZM1013 70L1020 81L1014 86L1008 90L1001 82L1006 73ZM750 270L763 259L771 267L759 287ZM1004 166L1002 148L1016 147L1020 154ZM533 96L528 86L535 79L539 88ZM1002 135L1010 124L1020 133L1015 147L1011 148ZM709 103L713 98L716 100L717 105L713 107ZM792 3L786 -11L795 -12L797 -1ZM645 213L636 210L631 200L642 194L648 204ZM662 172L658 171L654 168L658 163L663 166ZM1121 69L1135 70L1135 77L1129 86L1124 80ZM347 163L356 157L359 167L353 169ZM131 186L132 183L137 185L138 189L136 190L133 190ZM640 126L641 118L646 117L648 122L643 128ZM-2 107L-5 107L-17 103L-17 96L-8 95L0 96ZM291 213L280 212L272 207L279 198L293 194ZM954 75L952 66L958 66L957 72ZM343 196L345 189L351 190L353 192L353 200L345 202ZM699 47L694 38L703 32L707 44ZM120 250L125 241L133 242L136 252L127 261L121 256ZM1032 283L1028 286L1026 284L1029 280ZM423 161L420 156L421 153L426 152L428 157ZM746 97L756 105L746 116L736 111ZM332 256L343 260L340 268L328 267ZM599 85L593 83L588 82L591 74L600 70L602 74ZM493 105L484 116L478 119L473 109L476 103L481 99ZM810 274L803 278L799 265L808 266ZM875 61L863 60L865 43L875 50ZM199 94L206 87L208 90L209 98ZM76 87L78 84L82 87L82 91L79 93L75 92ZM423 167L426 158L431 157L433 169L431 172ZM1101 85L1110 86L1115 94L1105 99L1094 96ZM180 293L193 303L172 313L163 306ZM122 111L117 109L115 106L119 102L122 105ZM759 61L753 55L756 48L763 46L770 57ZM557 282L549 288L547 287L554 277ZM976 72L973 59L990 58L994 67L984 78ZM202 188L186 183L187 171L200 175ZM926 215L934 222L930 229L921 226ZM490 31L488 23L497 17L500 30ZM986 175L981 191L967 182L973 174ZM106 37L93 31L96 15L109 21ZM674 10L676 6L678 4L684 10L681 13L676 14ZM958 112L943 117L940 111L936 103L950 100L956 100ZM501 259L504 259L506 261L509 264L504 267L500 264ZM123 171L121 155L128 157L130 167ZM563 85L562 77L579 70L580 74L571 88ZM615 170L613 166L623 158L628 162L623 171ZM83 274L90 275L89 284L78 280ZM922 188L922 192L913 191L915 188ZM1115 222L1120 224L1120 229L1114 229L1114 224ZM116 27L116 11L125 8L136 21ZM467 42L469 31L483 29L484 29L485 47L475 46ZM442 148L451 153L444 162L432 159ZM1036 179L1038 175L1043 176L1044 182L1039 183ZM1118 161L1121 153L1133 160L1127 169L1121 168ZM655 117L650 121L644 111L652 109ZM885 139L884 141L881 143L877 141L880 138ZM176 -6L172 6L161 6L159 2L162 -8L170 -10ZM86 264L87 269L81 270L75 267L79 260L83 259ZM822 213L829 207L832 213L827 217ZM234 297L237 289L248 285L253 293L244 305ZM695 87L697 73L706 74L709 80L704 90ZM619 50L622 39L630 37L634 42L632 55L623 57ZM412 218L414 212L416 212L420 216L419 219L413 220ZM869 123L866 131L859 134L853 126L857 118ZM777 143L773 138L774 129L780 128L783 135ZM786 194L787 193L793 192L794 203L786 200ZM566 272L569 284L558 283L558 276ZM1004 164L1013 173L1012 183L991 182L994 177ZM653 51L663 46L667 53L663 61L655 60ZM360 5L370 19L360 32L351 26L345 17ZM1099 169L1090 168L1088 154L1098 144L1105 155ZM1070 145L1066 136L1082 129L1084 135L1074 151ZM639 168L638 173L637 177L631 176L630 172L632 167ZM146 -17L160 -20L166 -9L154 -1L148 -1ZM1032 151L1032 157L1022 158L1026 150ZM52 17L29 18L35 1L53 9ZM647 284L665 296L659 305L646 309ZM187 145L184 150L178 145L184 141ZM143 181L148 168L160 169L157 189ZM940 35L944 31L952 31L955 36L949 44L944 42ZM129 29L132 26L140 29L136 36L129 35ZM357 105L357 99L368 102L366 104ZM46 228L39 231L35 223L39 219L48 224ZM1074 216L1073 209L1088 211L1088 219L1077 221ZM317 114L304 113L306 94L314 92ZM682 211L675 211L675 202L681 204ZM405 179L409 184L413 193L403 199L397 197L394 186ZM558 260L559 263L554 267L551 267L547 260L554 258ZM1056 175L1058 188L1052 189L1050 173ZM155 167L159 158L171 167L172 172L157 182ZM576 256L566 265L558 259L571 247ZM627 311L632 302L640 307L636 315ZM1044 100L1036 83L1045 77L1049 94ZM605 167L609 163L613 160L615 165L611 170L610 170ZM184 72L190 59L197 59L206 61L203 76L196 80ZM1113 267L1108 254L1110 247L1119 246L1121 261ZM620 178L611 182L607 173L617 169ZM13 223L26 224L17 236L13 236ZM942 9L936 5L943 -2L948 -1L951 5ZM1131 205L1137 208L1138 212L1134 214L1127 214L1124 209ZM599 106L597 101L599 95L603 101ZM234 102L232 93L249 95L245 102ZM975 150L979 154L974 156L970 155L970 151ZM660 123L667 112L674 120L668 123ZM798 33L788 40L780 34L780 31L793 24ZM772 23L781 26L781 30L774 37L770 28ZM211 184L214 174L226 173L225 183L220 188ZM300 224L297 216L301 214L309 217L306 223ZM416 141L408 129L413 122L422 126L422 134ZM157 131L155 135L150 132L150 128L149 125L155 125ZM840 191L847 193L844 198L838 195ZM841 209L839 205L845 204L846 206L845 210ZM959 193L962 192L964 195L962 202L959 200L956 199ZM1118 56L1112 65L1102 63L1099 59L1111 48ZM1021 62L1020 53L1024 51L1028 53L1025 62ZM48 47L49 35L52 28L67 37L60 49ZM872 219L868 218L871 207L880 202L885 214ZM360 309L364 303L370 309L362 313ZM562 262L565 256L575 260L576 278L569 278L560 275ZM184 261L186 258L191 253L196 258L197 263L191 268ZM557 91L572 88L577 99L569 111L558 100ZM785 143L794 148L796 156L785 164L777 153ZM1098 228L1089 227L1088 219L1096 219ZM873 122L865 135L859 136L852 124L864 112ZM1043 152L1042 147L1047 140L1053 146L1051 153ZM747 147L733 149L723 138L737 133L746 140ZM219 160L217 169L208 164L208 161ZM572 140L560 144L559 136L569 134ZM923 153L931 162L924 168L916 167L914 162L914 153ZM616 77L608 78L605 64L618 64ZM518 113L528 109L539 118L532 131L519 124ZM206 114L195 109L200 101L210 105ZM1095 3L1104 -2L1109 5L1108 14L1099 14L1095 10ZM158 113L162 115L159 122L158 120L156 115ZM1062 17L1068 16L1070 23L1066 28L1058 23ZM219 64L210 70L200 66L203 51L216 57ZM513 315L518 306L530 308L529 323ZM991 35L991 31L997 31L999 35L999 36L996 39ZM787 222L780 221L777 216L790 214ZM143 234L147 222L153 217L160 232L153 236ZM1118 261L1121 261L1125 269L1125 272L1116 270ZM7 156L2 154L3 138L9 136L21 142L17 151ZM517 21L513 10L524 6L525 23ZM435 196L444 191L447 213L438 211ZM742 25L739 20L742 15L746 17ZM472 4L472 -12L486 -11L482 5ZM899 297L893 288L897 281L909 284L909 291ZM264 298L266 288L272 285L281 293L277 303ZM1126 303L1135 303L1143 310L1135 318L1130 316ZM1032 177L1035 181L1033 194L1025 192L1020 186L1019 178ZM476 57L468 52L470 38L482 44ZM524 215L535 205L545 219L536 227L527 227ZM158 65L169 60L167 74L159 70ZM257 212L257 199L267 197L274 206ZM630 68L626 70L621 64L625 58L628 56ZM701 263L699 266L691 269L685 261L693 259ZM334 121L336 129L333 139L326 134L326 126ZM309 128L303 127L299 119L300 114L308 112L311 120ZM915 255L908 267L902 258L904 247L912 245ZM579 -4L569 3L562 -6L565 -13L577 -12ZM344 42L349 45L348 50L343 52L340 49L342 42ZM258 319L250 316L248 312L250 302L257 305L262 312ZM439 132L442 133L443 141L440 143L433 142L432 134ZM1125 301L1121 301L1116 296L1126 292ZM417 72L415 54L431 57L434 72ZM905 179L898 170L910 168L912 174ZM1105 96L1104 90L1119 95L1121 105L1107 107ZM1073 4L1063 18L1052 6L1063 -4ZM755 221L760 220L762 222L763 227L757 227ZM26 224L23 214L30 204L42 213L43 218L31 225ZM782 179L779 174L781 170L791 173L790 177ZM359 181L357 178L363 176L365 179ZM1021 289L1027 298L1026 304L1015 307L1013 296L1015 289ZM661 277L652 275L652 271L657 266L663 268L665 276ZM641 227L648 225L653 231L646 237L638 234ZM184 64L177 61L179 53L183 53L185 55L187 60ZM347 162L345 157L354 151L357 160ZM629 184L631 188L625 190L625 182ZM1 36L12 37L13 47L6 47L-2 42ZM1122 26L1114 33L1110 26L1116 18ZM1070 240L1064 254L1055 252L1048 250L1051 237L1068 236ZM76 2L70 6L65 -1L72 -6ZM1120 34L1128 28L1130 30L1127 38ZM798 156L795 155L793 142L800 145L804 152ZM34 229L39 228L43 232L38 234L35 233ZM1121 259L1113 248L1126 243L1130 257ZM365 304L366 317L360 318L355 305ZM517 211L515 226L509 223L499 221L500 212L511 204ZM871 271L867 265L873 261L878 264L880 267L875 273ZM434 41L438 44L431 52L426 45ZM810 198L821 200L816 214L807 200ZM908 102L916 98L918 110L911 114L909 107ZM919 105L919 115L915 118L908 113L909 103ZM748 183L760 186L753 200L738 197ZM1082 302L1082 294L1090 299L1088 304ZM191 84L189 86L185 85L184 82L186 79L190 80ZM820 284L819 290L817 293L813 289L812 285ZM-4 34L-2 41L-12 49L-17 41L-13 31ZM1048 293L1054 282L1059 285L1061 297L1055 302ZM998 162L995 162L988 157L992 150L998 151ZM294 218L310 214L307 231L291 227ZM882 133L875 141L869 135L867 125L876 127ZM980 12L978 22L965 20L963 19L961 8L971 7ZM751 164L740 161L740 153L751 147L755 150L755 160ZM348 211L348 220L337 218L338 212L344 207ZM829 259L833 264L829 270L825 268ZM63 188L70 198L68 201L53 200L49 190ZM312 53L325 49L324 67L314 66ZM389 65L381 72L375 59L383 60ZM1033 131L1035 128L1039 126L1043 131L1041 136L1036 135ZM823 196L818 198L814 189L821 186ZM895 110L888 117L883 108L887 105ZM110 27L118 33L111 46L104 36ZM652 162L644 176L637 179L631 169L632 159L644 155ZM851 235L851 244L840 245L840 234L846 230ZM407 89L399 80L409 70L412 71L414 84ZM563 260L556 261L553 248L558 242L566 248ZM870 157L863 169L855 165L850 158L864 155ZM416 195L419 188L430 185L436 192L439 199L423 205ZM873 194L883 190L889 192L890 205L885 206L878 204ZM1127 122L1124 117L1127 114L1131 114L1130 121ZM375 81L381 90L371 104L366 94ZM862 222L875 206L881 226L871 228ZM318 41L336 38L339 47L320 55ZM991 70L996 67L1000 68L1001 73L994 75ZM1110 279L1102 288L1093 274L1107 265ZM92 56L78 61L79 48L88 50ZM140 234L150 233L151 245L138 239ZM337 202L338 195L341 185L352 190L351 201L349 204ZM474 157L464 156L466 146L476 144L480 157ZM82 255L91 237L98 243L101 252ZM395 105L387 107L382 94L393 96ZM1060 196L1064 187L1074 193L1071 199L1064 198ZM507 -1L504 10L491 8L489 -2ZM712 127L702 130L690 123L700 114ZM516 54L525 48L534 51L533 69L521 73L512 64ZM986 50L990 42L994 45L990 50ZM60 3L57 -5L63 -8L67 -5L68 2ZM780 298L770 293L774 282L780 281L786 288ZM424 82L420 85L413 72L422 65L430 73ZM687 182L690 191L683 191L680 186L683 180ZM359 189L357 191L351 193L348 190L351 185L357 184ZM1077 194L1069 190L1074 183L1077 186ZM580 43L584 37L591 39L599 46L589 55ZM536 277L541 269L547 268L554 276L549 280ZM566 -8L568 -4L563 -1L557 -4L562 -10ZM249 299L257 284L267 286L269 300L257 305ZM641 83L646 82L650 86L647 92L642 91L639 88ZM882 220L889 216L899 220L894 229L886 229ZM514 119L507 112L509 102L516 99L522 111ZM601 123L604 127L603 133L602 132L598 130L599 126ZM376 199L374 208L359 202L367 192ZM469 106L474 104L484 114L477 125L465 118ZM25 16L42 19L33 36L23 30ZM474 125L486 124L490 130L488 133L477 133ZM1111 300L1115 310L1110 318L1102 309ZM633 37L636 28L647 31L645 39L641 42ZM1059 33L1051 33L1044 27L1053 19L1059 20L1066 30ZM143 159L141 159L141 153L144 151L146 154L146 158ZM432 204L439 203L439 209L434 208ZM911 220L906 213L904 209L917 208L918 213ZM211 252L217 248L225 255L222 260L216 261L210 257ZM685 229L699 239L681 251L671 238ZM674 240L678 244L674 249L670 251L667 243ZM1097 165L1090 169L1082 164L1088 158L1094 156ZM167 212L165 207L168 202L174 202L175 209ZM322 95L321 103L305 97L311 88ZM461 288L450 300L442 284L452 276ZM603 92L605 100L594 108L587 94L594 91ZM59 85L67 81L69 90L65 93ZM1089 198L1113 199L1109 208L1100 215ZM1116 -7L1125 -11L1134 -2L1127 3L1117 3ZM512 121L518 124L512 136L504 125ZM527 89L522 91L516 87L522 77L529 83ZM551 12L555 10L558 15L552 17ZM544 190L548 197L537 205L532 194L534 187ZM91 11L86 13L81 10L87 6ZM132 53L147 64L135 77L127 69ZM71 136L70 126L83 124L86 133ZM501 70L498 78L492 75L491 68L496 62ZM836 179L829 177L831 169L841 172ZM915 237L909 238L905 233L909 229L914 230L917 233ZM286 50L281 50L283 32L294 32L301 47ZM1037 42L1031 40L1035 31L1041 34L1042 36L1041 41ZM661 22L665 31L662 33L655 41L649 32L653 25ZM601 165L605 160L613 162L613 169L605 167ZM687 270L690 272L688 278L683 273ZM106 12L107 3L119 2L120 9L115 20ZM918 68L927 68L932 72L926 80L920 75ZM894 93L891 88L895 84L903 87L902 94ZM581 189L597 184L598 196L595 198ZM958 9L952 -4L959 -10L966 1ZM610 225L613 232L610 240L603 238L601 233ZM739 162L738 165L732 168L728 163L729 160ZM514 220L524 195L533 200L523 217ZM889 -9L893 -11L903 -11L901 -2L891 -1ZM1104 275L1087 277L1085 262L1093 253L1104 263L1105 272ZM99 130L84 116L98 110L108 118ZM597 44L607 44L606 53L598 60L596 56ZM486 212L483 210L488 204L493 206L494 211ZM901 262L903 267L904 275L895 275L888 268L894 262ZM532 225L533 218L538 219L540 225ZM703 290L702 280L710 277L713 286ZM644 157L651 144L657 148L654 163ZM459 263L451 255L459 250L463 257ZM800 93L807 100L801 106L796 109L792 100ZM545 -5L547 -13L555 -18L556 -2ZM774 227L771 231L767 227L769 222L772 222ZM170 108L180 108L183 116L174 120ZM452 167L459 183L448 188L444 175ZM1050 202L1044 201L1045 191L1054 194ZM1079 29L1066 23L1069 12L1078 11L1087 17ZM288 92L275 93L280 77L295 86ZM858 218L865 224L853 235L847 227L849 217ZM1115 38L1103 43L1092 43L1095 29L1104 21L1114 31ZM664 184L650 188L640 178L659 166ZM642 193L635 193L633 191L633 184L642 183L644 185ZM36 253L33 243L40 238L46 249ZM235 69L237 71L221 77L221 66L228 62ZM672 268L675 264L680 267L678 273L674 273ZM969 187L959 193L951 180L962 176ZM293 36L295 40L292 46L286 41ZM490 59L504 62L507 77L499 85L491 75ZM356 63L359 72L355 76L344 72L347 65ZM621 305L618 304L620 297L624 297L626 301ZM377 232L369 224L378 214L382 217L382 226ZM472 218L479 213L489 208L490 218L481 226ZM1062 210L1068 211L1075 216L1072 222L1066 222L1060 218ZM933 247L920 253L915 247L918 237ZM1024 226L1026 219L1035 226L1027 230ZM408 219L401 221L396 214L397 204L404 207L409 210ZM116 253L107 253L112 244L121 249ZM930 133L927 124L926 123L934 118L943 126L938 130ZM872 75L874 67L883 66L891 75L881 78ZM490 11L501 15L496 27L487 22ZM429 164L426 149L436 147L441 155ZM1115 101L1124 107L1116 120L1105 114L1102 109L1110 100ZM571 28L574 23L584 27L581 33ZM24 46L31 52L25 60L16 53L19 47ZM607 22L609 26L605 31L602 30L599 26L604 21ZM31 209L36 197L53 196L56 214L46 216ZM1018 246L1023 246L1023 251L1016 253L1015 252ZM142 -7L152 -15L152 -7L150 -5ZM868 58L867 67L864 67L862 60L862 57ZM121 260L125 252L129 253L127 260ZM329 113L335 103L344 102L348 115L330 115ZM1019 125L1019 130L1015 130L1010 130L1011 124ZM183 8L175 16L171 9L179 4ZM1070 309L1063 306L1069 298L1076 298L1076 305ZM600 44L605 49L601 60L594 59L590 49ZM532 310L541 298L545 304L541 317L533 314ZM110 -7L121 -4L127 2L113 7L109 1ZM992 205L987 201L988 193L1000 194L999 197ZM1001 47L998 53L991 54L992 44L997 43ZM741 197L746 196L748 202L744 205L738 202ZM861 243L857 240L861 236L864 236L865 241L865 242ZM642 200L649 193L654 195L656 200L647 203ZM1131 208L1132 201L1142 202L1140 209L1134 209ZM953 156L953 148L957 146L964 153L960 157ZM1043 178L1050 171L1052 184L1045 184ZM751 212L772 230L760 234L747 228ZM684 262L688 257L693 261L697 269L684 271ZM70 173L66 184L53 174L57 163L63 161ZM1009 163L1005 164L1000 160L1001 156L1008 156ZM887 283L901 294L893 308L875 299ZM447 281L443 277L447 274L453 274L452 281ZM1049 295L1053 303L1052 308L1044 314L1040 307L1038 299ZM341 105L336 109L332 104L337 102ZM221 158L220 149L225 143L232 145L234 156L226 161ZM765 246L764 240L771 232L775 235L775 242L771 248ZM1017 246L1015 241L1021 238L1025 240L1021 248ZM539 195L538 203L533 203L531 199L536 193ZM597 276L609 284L601 299L586 290ZM595 27L584 25L581 16L596 9L602 23ZM754 53L751 61L742 63L734 53L738 45L748 47ZM175 162L171 160L168 153L176 151L182 154L180 161ZM969 26L975 32L971 38L966 39L963 34ZM879 181L894 167L903 172L890 190ZM161 316L160 306L170 304L170 314ZM287 -17L299 -5L292 3L280 -5ZM996 40L1009 46L1000 60L991 56ZM540 195L529 191L536 181L543 186ZM889 108L895 108L899 115L890 118ZM948 48L948 53L946 55L939 55L938 51L943 45ZM1023 239L1017 239L1015 233L1019 229L1025 232ZM769 10L769 14L764 15L760 13L762 6L767 4ZM470 102L476 103L477 109L470 114L465 110L467 107ZM188 293L191 307L189 312L175 306L177 298ZM878 235L888 232L891 237L881 244ZM483 234L490 242L482 247L470 249L471 230ZM654 93L640 96L629 93L638 75ZM616 214L601 213L597 204L613 194L619 198ZM274 32L279 35L274 41L271 41L270 34ZM1060 64L1072 65L1071 77L1060 81L1054 72ZM891 110L892 107L895 105L901 107L899 111L897 112ZM91 191L83 188L83 183L93 177L96 183L97 189ZM78 1L72 4L70 -2L72 -4L79 -2ZM889 205L885 209L879 206L879 202L883 198L886 200ZM192 317L186 306L195 298L200 297L210 309L205 316ZM469 -4L471 13L460 14L456 3ZM911 44L903 37L910 24L919 36ZM908 95L915 87L921 95L920 101ZM499 9L499 23L491 23L484 19L486 8ZM657 63L654 70L642 71L643 63L648 60ZM1000 8L1002 15L1000 17L996 13L996 10ZM226 299L230 313L216 324L215 315ZM667 89L674 95L681 103L668 114L658 101ZM231 15L235 19L229 31L225 28ZM117 304L122 309L118 314L115 313L111 308ZM588 292L587 277L595 277L602 283L594 292ZM421 97L420 106L408 104L403 92L421 89ZM464 86L459 87L455 78L466 79ZM212 104L217 100L225 109L222 118L215 117ZM783 226L789 225L790 229L790 233L783 234L783 230ZM603 101L597 106L589 99L591 92L601 94ZM352 244L362 248L350 260L345 258ZM211 98L216 102L216 110L204 110L199 107L205 98ZM330 194L326 180L337 175L337 191ZM420 41L421 35L427 34L432 39L428 43ZM524 162L527 148L531 147L541 153L542 158ZM273 53L266 52L272 43L279 48ZM819 65L817 57L826 54L825 61ZM381 21L379 19L376 14L382 9L388 11L390 16ZM512 38L508 37L510 32L512 33L517 34ZM1016 124L1009 129L1002 120L1015 111ZM454 140L448 125L463 119L464 122L462 136ZM589 193L596 188L602 192L599 198L593 202ZM840 149L848 140L860 151L862 155L846 158ZM862 144L855 138L869 133L869 141ZM368 125L365 140L345 136L353 121ZM992 98L1007 92L1011 100L1000 107ZM1116 -9L1125 -2L1117 6L1112 0ZM924 -9L937 -13L945 -9L945 2L936 10L924 4ZM182 168L187 173L183 182L179 182L178 175ZM697 31L701 20L710 25L709 38L704 38ZM2 90L6 95L-1 97L-4 91ZM1026 15L1029 22L1018 33L1006 22L1021 5ZM1003 163L1011 167L1005 182L991 178L990 166ZM725 193L737 184L738 200L726 200ZM682 307L686 309L683 318L674 315L675 308ZM162 135L158 130L165 131L165 134ZM568 146L579 153L577 161L571 170L564 170L557 152ZM642 34L644 40L638 45L635 42L640 36ZM818 281L830 278L838 287L830 299L817 295ZM490 18L496 22L492 28L486 27L486 21ZM1128 -5L1133 -15L1143 -15L1140 3ZM902 119L914 114L920 120L912 132L901 128ZM1108 16L1096 24L1091 14L1100 9ZM347 306L345 301L352 300L352 303L348 309ZM1079 129L1085 134L1083 138L1078 143L1074 136ZM1003 313L998 303L1001 301L1010 298L1014 306ZM47 96L48 103L43 106L41 101L43 94ZM491 299L498 285L505 290L500 299ZM730 21L730 16L734 15L738 18L735 22ZM888 91L882 103L877 100L873 90L882 88ZM590 154L584 156L584 151L589 148ZM1128 181L1126 175L1133 166L1141 174L1137 182ZM778 -4L780 -7L796 2L788 9L776 11ZM927 116L927 120L922 120L922 115L926 115ZM1098 94L1083 94L1076 86L1084 78L1100 77ZM771 149L782 152L782 169L762 165ZM1067 64L1072 62L1072 70L1071 72L1066 68ZM884 102L885 89L896 95L893 101ZM1113 147L1123 146L1128 147L1131 154L1124 160L1117 158ZM512 153L507 154L504 149L503 145L511 142L515 147ZM638 244L636 239L636 234L643 235L648 237L644 244ZM900 185L901 178L915 179L919 182L910 191ZM986 298L994 297L997 305L990 317L983 310L979 303ZM175 45L171 42L175 38L179 36L182 41ZM418 8L425 8L429 13L418 16ZM691 -2L693 2L688 11L685 8L684 1L687 -5ZM910 200L911 208L908 212L899 207L900 199ZM461 -13L462 -4L442 -5L446 -17ZM546 176L547 181L547 191L539 191L535 185L537 181ZM623 43L618 47L613 43L617 34L622 37ZM370 130L372 139L369 140L361 136ZM527 167L535 180L520 185L514 172ZM621 241L608 236L613 223L624 219ZM308 81L314 86L310 91L305 89ZM751 0L756 -15L762 -18L769 -7L765 3ZM698 295L694 289L699 285L703 282L704 290ZM743 202L749 213L747 227L735 220L732 212ZM517 2L510 -6L518 -14L523 -16L532 -3L524 4ZM253 143L239 145L231 135L250 125ZM940 42L946 39L952 41L952 45L950 50L943 49ZM1049 173L1045 177L1035 167L1040 159L1048 162ZM371 206L376 208L386 216L381 225L373 223L367 219ZM143 183L142 187L140 189L136 185L136 183L141 180ZM587 261L591 267L586 275L573 271L572 261ZM1125 185L1122 191L1115 189L1123 183ZM342 180L346 180L351 189L343 193L337 189ZM1107 151L1105 148L1112 145L1115 152L1113 154ZM821 84L818 88L815 82L816 79ZM433 268L426 262L424 256L430 252L442 260ZM1113 68L1110 62L1120 55L1126 65ZM885 239L880 232L881 228L885 224L891 229L889 233ZM76 163L64 157L62 149L81 146L81 157ZM266 44L264 50L257 53L253 46ZM484 132L475 140L465 128L482 123ZM589 28L585 25L588 19L592 19L594 28ZM553 15L544 11L550 2L556 2L560 14ZM520 221L519 225L512 226L511 216L517 217ZM423 145L429 134L439 143L433 153ZM923 149L920 154L909 146L921 138ZM1080 134L1084 130L1095 128L1100 135L1091 143L1085 143ZM1052 217L1044 213L1048 204L1055 212ZM852 117L859 122L868 132L860 136L849 140L848 125ZM631 219L623 222L623 222L621 213L630 213ZM1001 292L993 295L993 285L995 281L1006 282L1003 290ZM1092 185L1096 178L1099 173L1105 176L1106 183L1099 189ZM613 309L609 314L606 312L605 311L605 307L608 305ZM1009 83L1018 93L1004 98L1001 84ZM287 142L281 131L292 121L304 130L296 137ZM430 188L426 200L416 197L417 185L425 181ZM971 63L981 58L990 63L982 77L972 76ZM1004 125L994 122L991 107L1003 104L1010 113ZM148 82L144 66L162 65L167 77ZM1112 -9L1121 -14L1123 -6L1115 1ZM876 307L873 308L867 305L867 300L873 298L877 303ZM1055 136L1052 149L1045 146L1039 140ZM724 282L722 296L718 303L707 295L710 291L714 283ZM102 248L89 250L88 245L93 239L102 242ZM747 181L756 187L758 200L750 201L743 199L742 191ZM241 92L234 89L234 86L242 85ZM680 308L677 314L673 313L672 306L676 305ZM959 168L960 170L959 174L956 176L951 172L954 168ZM616 227L613 249L603 246L601 232ZM6 18L12 16L21 17L22 24L11 30ZM665 134L657 139L653 134L659 130L663 132ZM690 80L695 80L699 90L694 95L685 92L688 86ZM454 6L458 3L464 2L462 10ZM852 310L844 308L842 300L855 299ZM756 103L771 118L760 123L746 112ZM885 205L873 207L872 195L878 192ZM1083 57L1081 56L1076 51L1080 50L1086 52ZM499 227L493 222L501 210L511 219L511 225ZM697 301L694 298L698 294L703 295L701 300ZM1082 292L1071 284L1082 277L1088 278L1093 294ZM1116 291L1126 292L1128 298L1124 307L1115 308ZM325 63L328 66L331 75L320 82L314 76ZM107 -16L120 -18L124 -11L121 -3L105 -8ZM434 178L429 179L426 178L424 174L433 171L435 174ZM865 113L873 111L879 122L872 129L859 124ZM796 55L802 57L803 58L799 67L795 66L793 60ZM748 200L758 198L762 204L752 206ZM145 135L139 122L155 117L162 126L155 134ZM602 85L596 74L605 72L609 81ZM457 84L466 83L473 85L471 96L466 100ZM155 242L166 252L149 262L143 253ZM465 312L452 318L446 305L453 305ZM187 -12L186 -6L181 -6L181 -11ZM174 -17L184 -10L179 -5L171 -13ZM118 126L125 121L135 125L131 136L122 135ZM697 -2L707 6L707 12L697 17L693 17L690 3ZM914 268L919 271L915 279L908 280L905 272ZM837 280L829 280L825 274L828 268L837 274ZM177 16L178 21L178 22L173 25L168 19L171 16ZM290 42L291 33L300 27L309 42ZM1006 147L1007 126L1013 130L1018 139ZM875 254L870 255L866 249L866 244L874 242L877 246ZM864 165L858 153L874 152L875 156ZM278 233L276 229L278 217L289 216L298 225L291 234ZM799 125L798 131L784 136L783 125ZM39 41L44 33L48 41L43 46ZM609 160L606 167L605 174L599 172L594 165L595 160ZM1099 -15L1104 -9L1098 -2L1096 -4L1091 -11L1096 -15ZM441 121L454 124L458 132L448 141L438 129ZM616 255L614 263L609 262L606 259L612 252ZM352 135L362 128L369 140L365 148L355 147ZM818 93L815 99L807 99L806 89L811 84L817 88ZM186 -12L188 -8L188 -6L182 -3L181 -11ZM590 216L578 211L586 201L595 212ZM1106 109L1115 115L1117 123L1101 128L1094 116ZM1114 217L1110 226L1105 230L1096 222L1102 210L1110 209ZM525 296L518 290L520 286L528 291ZM433 157L426 158L423 154L425 151L430 150L434 152ZM834 276L820 265L830 253L840 259ZM10 169L8 156L13 160L14 170ZM557 115L561 108L570 111L563 121ZM730 189L731 198L724 207L719 204L711 194L723 189ZM850 64L841 63L838 52L849 50L853 58ZM917 193L929 191L939 197L935 203L928 207L920 204ZM846 87L857 83L863 90L850 94ZM475 53L478 40L485 42L490 54L487 60L477 62ZM50 215L54 213L59 218L56 223L51 221L49 219ZM210 198L211 199L203 203L202 195L204 192ZM268 12L276 4L286 4L285 15L275 17ZM980 7L982 1L988 0L987 11ZM976 95L976 99L973 100L970 93ZM847 242L846 250L839 244L842 239ZM689 233L674 228L684 209L690 220ZM403 191L403 186L415 181L417 183L412 193ZM95 -8L86 3L78 -2L71 -7L82 -20L87 -17ZM612 106L615 102L620 100L621 106L621 108ZM404 297L401 299L396 296L397 291L403 293ZM2 271L-5 268L-4 261L7 259L8 268ZM1135 267L1131 270L1127 271L1125 266L1132 264ZM135 295L138 287L146 289L149 294L141 303ZM775 191L769 202L754 191L760 180L773 183ZM154 201L146 203L138 200L145 186L157 189ZM762 246L776 248L778 265L760 255ZM442 195L437 196L434 193L437 187ZM493 207L498 205L502 210L499 212L494 213ZM346 259L345 265L335 265L333 260L337 254L341 256ZM969 133L952 128L958 117L970 116ZM69 303L60 305L60 299L67 296ZM579 287L569 281L573 273L581 271L586 283ZM140 163L132 160L135 156L140 159ZM520 99L511 98L508 95L512 88L522 89ZM848 87L852 81L857 82L857 90ZM357 -6L355 -8L355 -16L363 -14ZM839 304L841 295L855 296L849 310ZM293 98L304 92L312 96L310 108L303 112L297 109ZM258 241L264 232L271 238L267 244L260 247ZM638 157L631 162L628 158L626 152L629 150L636 152ZM265 120L243 124L245 110L255 108ZM503 219L495 208L503 197L511 205ZM505 280L504 285L492 283L495 276ZM738 170L727 174L722 162L728 151L743 157ZM852 202L871 204L874 213L856 222L853 209ZM524 59L533 64L519 76L513 74ZM956 259L953 262L949 256L950 253L957 256ZM1128 115L1140 116L1137 134L1124 127ZM556 -1L547 -5L548 -15L557 -17ZM232 6L239 2L244 8L239 16L235 19L228 12ZM29 146L23 149L22 144L28 142ZM129 312L128 316L122 314L120 312L125 310ZM654 277L643 292L632 287L634 274ZM655 147L659 135L672 136L672 151ZM1115 91L1123 99L1122 106L1114 111L1107 95ZM609 157L614 155L618 159L618 166L613 172L606 164ZM1004 161L998 157L997 151L1004 148ZM618 113L614 108L617 105L620 102L624 109L622 112ZM778 281L787 283L785 295L775 294ZM45 291L55 297L47 306L37 304ZM630 263L626 273L620 267L626 260ZM523 123L521 129L518 122L520 121ZM326 139L322 146L304 150L304 144L311 127ZM777 197L784 198L782 209L771 208L765 201ZM139 253L137 240L140 236L150 239L153 250ZM358 159L367 146L370 153L374 164L363 165ZM603 157L599 167L597 167L594 159L600 156ZM460 43L469 29L476 37L465 51ZM1062 54L1066 50L1075 50L1076 62L1069 66ZM6 116L9 112L17 115L10 124ZM511 79L516 85L517 95L511 100L502 93L500 88ZM58 292L50 283L56 270L63 273L68 288ZM326 118L335 115L337 120L332 125L328 124ZM372 100L373 112L364 111L364 98ZM645 162L666 160L664 172L647 171ZM609 169L608 173L603 177L599 171L601 169L606 165ZM379 20L394 21L395 25L377 28ZM246 97L250 85L263 83L268 92L269 97L255 99ZM304 305L305 309L300 310L296 308L299 304ZM419 199L414 201L410 195L415 191L419 193ZM61 -8L70 1L61 3L56 -7ZM571 162L568 159L570 156L574 154L577 161ZM82 180L76 181L73 173L74 168L83 170ZM981 103L977 107L974 103L979 99ZM411 167L413 162L417 162L420 170L413 170ZM567 202L572 207L571 210L567 212L564 209L563 206ZM1059 132L1064 138L1053 144L1047 134ZM157 97L157 90L166 92L161 96ZM127 166L114 163L114 152L120 144L131 150L137 159ZM265 140L264 131L272 128L277 134L269 140ZM229 81L240 82L240 91L232 96ZM502 75L497 65L505 57L511 77ZM1100 86L1100 95L1089 99L1080 90L1084 85L1095 81ZM711 239L711 236L716 232L723 237L719 241ZM104 29L111 31L119 48L105 55L97 40ZM906 278L893 281L893 273L897 268L906 272ZM634 300L624 295L629 285L638 282L644 292ZM565 220L562 210L573 207L579 218ZM82 283L73 285L67 272L77 268ZM692 200L698 195L706 199L702 203L695 204ZM172 4L167 0L168 -6L174 -5ZM1081 166L1069 169L1067 164L1074 156ZM20 28L25 34L22 46L14 50L9 41ZM266 173L268 161L281 169L272 183ZM889 90L894 90L894 95L892 98L886 95ZM359 292L359 288L363 284L366 291L365 294ZM1131 121L1131 114L1132 113L1138 114L1139 119L1136 124ZM921 221L922 234L911 240L904 230L905 217ZM975 314L964 320L956 309L962 300L974 301ZM500 221L497 216L500 212L502 213L504 218L502 223ZM97 294L94 290L100 286L102 287L104 294ZM571 307L562 308L562 304L565 297L572 301ZM1012 94L1006 104L1000 103L989 98L996 84L999 87ZM637 71L643 66L649 71L644 78L640 76ZM729 138L734 136L736 143L731 141ZM1009 242L1012 242L1011 248L1004 250L1001 244L1003 242ZM521 238L525 227L532 224L544 233L543 241L525 244ZM131 324L123 308L127 304L138 306L137 315ZM322 188L317 180L319 175L327 172L335 180ZM783 8L791 9L789 17L785 16ZM102 45L99 42L99 36L108 35L108 41ZM939 109L933 115L919 118L914 112L926 97L932 97ZM878 239L876 234L880 231L884 235L882 238ZM252 82L243 83L238 81L238 72L246 72ZM112 181L104 190L96 188L98 180L100 170L113 177ZM764 181L765 171L768 171L771 179ZM857 266L864 272L852 286L844 280ZM436 133L428 131L433 118L444 119ZM446 81L441 73L453 68L456 80ZM572 165L568 168L563 166L568 162ZM896 32L899 40L897 44L889 40L892 34ZM6 2L14 3L18 5L13 12L8 11ZM354 83L360 78L368 90L359 94ZM711 154L700 154L701 146L712 147ZM1079 46L1077 43L1083 35L1087 38L1087 47ZM893 307L895 303L900 305L901 312L895 315L893 312ZM493 15L496 31L482 29L484 18ZM420 167L420 158L425 152L433 157L429 164ZM984 131L987 126L992 130L988 137ZM462 150L459 152L451 147L458 137ZM705 62L700 52L704 46L712 48L712 59ZM278 196L284 199L284 201L278 203L276 198ZM1023 133L1015 116L1023 112L1034 117L1029 128ZM324 39L332 42L331 54L317 57ZM1116 165L1111 175L1105 178L1097 173L1100 166L1108 162ZM690 103L684 93L696 94L697 98ZM0 123L3 121L12 125L12 129L4 132ZM1125 149L1144 144L1144 153L1134 162ZM631 287L639 272L649 276L653 288L642 295ZM831 106L832 118L817 120L820 102ZM796 219L801 209L807 213L806 222ZM849 85L846 90L843 82L847 81ZM378 11L382 5L390 16L387 20L379 23L374 15ZM27 254L41 261L38 270L25 264ZM286 26L289 42L273 43L267 30ZM490 255L473 256L479 248L484 243ZM1076 231L1076 235L1074 239L1072 239L1069 233L1073 232ZM358 3L365 3L365 9L361 12L357 9ZM740 194L735 189L737 182L743 183L744 188L743 190ZM792 311L799 295L810 303L806 316ZM928 233L926 222L944 222L946 231L929 235ZM368 99L372 104L366 109L363 101ZM537 12L533 3L544 -2L554 0L552 12L544 17ZM994 29L988 15L1002 18L1003 23ZM937 36L940 33L953 35L953 43L940 44ZM313 90L321 97L323 108L303 109L305 94ZM1138 294L1134 303L1126 300L1134 292ZM905 131L904 119L919 118L924 129L920 142L913 143ZM228 174L224 170L223 168L226 163L230 165L232 169ZM631 64L631 58L636 59L638 64ZM148 177L147 165L154 165L161 176ZM1031 277L1029 262L1046 267L1043 272ZM203 26L198 28L194 24L198 18ZM846 291L849 288L851 296L848 298ZM161 93L165 91L170 89L168 98L165 102ZM996 99L987 98L988 87L997 88ZM361 170L368 173L367 179L359 180L353 175L357 169ZM663 251L662 260L653 265L650 257L654 246L660 247ZM767 222L749 219L753 206L766 209ZM547 59L544 51L550 45L555 48L553 63ZM247 12L252 9L261 23L258 32L243 26ZM121 49L123 55L115 58L114 52ZM929 47L923 57L904 52L905 49L916 42ZM21 236L30 231L38 239L28 247L22 242ZM182 64L178 68L176 68L173 62L181 61ZM1101 132L1103 120L1113 116L1122 124L1119 133L1108 133ZM593 306L580 302L582 294L590 292L598 299ZM119 141L122 131L138 141L125 151ZM537 219L545 215L549 217L545 224L541 222ZM722 68L720 62L725 59L729 63ZM512 312L499 306L503 294L514 292L521 298ZM551 68L543 74L530 72L530 63L535 56L548 59ZM336 84L338 81L344 75L347 78L348 86L344 88ZM1077 241L1075 243L1069 240L1074 235ZM427 37L423 37L422 30L424 25L428 25L433 32ZM166 162L158 165L155 164L153 157L159 157ZM838 81L841 78L849 75L852 81L850 87L843 90ZM848 90L847 98L837 97L833 92L843 87ZM737 201L733 191L739 187L747 189L751 196L744 202ZM695 45L691 36L694 32L703 33L708 40L702 46ZM148 148L139 147L138 142L144 140L147 143ZM328 162L315 171L315 159L323 150ZM386 309L380 305L381 293L387 297L388 299ZM676 57L672 57L666 52L670 47L675 45L678 52ZM1055 129L1062 125L1072 132L1074 139L1063 147L1057 139ZM665 2L664 5L657 7L657 0L660 -2ZM552 185L566 181L569 183L567 196ZM595 221L585 222L578 220L581 210L590 209L598 214ZM543 18L546 23L536 25L534 18ZM672 226L684 220L685 236L672 236ZM728 177L736 175L741 180L740 188L731 187L727 182ZM755 36L748 38L746 29L750 22L756 21ZM339 257L350 255L351 261L349 264L339 263ZM1126 110L1133 109L1135 116L1128 120ZM595 168L587 160L593 148L606 148L608 159ZM15 282L19 281L24 288L24 292L16 295L15 290ZM1021 118L1012 123L1004 120L1012 103L1025 108ZM798 51L804 51L805 59L797 58ZM191 87L191 78L199 71L205 74L206 83ZM10 265L20 253L29 258L32 268ZM947 108L957 111L958 117L948 119L947 114ZM964 281L963 273L971 269L978 273L974 284ZM379 313L383 305L392 302L398 311L385 319ZM375 264L362 266L364 254L376 249L382 258ZM642 160L655 165L652 175L646 175L636 168ZM185 22L178 18L182 14L186 15L187 21ZM924 126L929 115L941 121L941 131L938 133L924 130ZM745 20L740 26L737 27L730 23L737 18ZM923 219L917 209L924 202L929 200L934 209L928 218ZM1039 236L1041 229L1050 230L1048 238ZM699 247L693 232L702 229L716 243ZM815 264L821 268L817 274L812 273ZM338 191L336 199L324 192L327 185L336 182ZM469 197L453 200L453 197L460 185ZM180 267L182 273L172 275L175 266ZM605 228L594 226L597 216L605 215ZM218 272L213 270L213 263L218 262L222 269ZM494 194L502 190L503 205L495 203ZM768 298L771 303L763 307L762 302ZM68 52L75 47L80 51L75 56ZM1098 -9L1106 -3L1109 6L1097 8L1092 4ZM364 184L368 191L360 194L358 188ZM637 169L638 163L643 159L646 163L647 168ZM555 59L562 59L567 67L553 69ZM525 14L532 10L541 20L531 29L522 25ZM533 65L535 64L540 65L538 71L535 74ZM602 182L609 171L622 171L624 182ZM244 9L249 4L253 9L254 12L246 15ZM1108 107L1119 115L1111 123L1099 121L1102 110ZM895 -11L892 -4L883 -7L888 -18ZM1060 4L1067 2L1076 9L1064 19ZM806 104L798 105L793 100L803 93L804 95ZM940 95L938 99L933 103L932 95ZM600 256L596 258L588 256L591 246ZM782 121L786 131L778 135L769 128ZM231 260L224 258L226 251L231 246L237 250L234 255ZM406 91L415 87L424 94L417 104L411 108L401 101ZM587 289L576 278L576 274L585 267L594 276ZM1132 227L1126 223L1125 215L1135 219ZM218 301L208 303L202 290L209 282L219 287ZM478 86L481 81L487 85L479 90ZM164 86L156 85L153 76L164 72ZM14 125L3 124L4 116L7 112L12 116L14 122ZM733 250L737 257L737 260L727 255ZM756 8L754 16L747 15L748 8ZM484 165L475 154L483 144L496 149L497 161ZM629 166L622 166L619 163L625 154L626 155L630 162ZM544 227L543 222L548 222L550 224L547 228ZM865 61L881 57L887 75L872 76ZM442 259L441 268L430 270L426 265L435 254ZM1078 -3L1073 -1L1070 -4L1076 -8L1077 -6ZM191 94L189 85L203 83L199 95ZM110 -2L114 -10L124 2L114 5ZM1007 247L1007 261L996 264L989 258L1000 243ZM916 32L916 25L920 18L925 22L929 25L925 31ZM217 301L229 287L233 301L227 308ZM1095 27L1088 25L1088 15L1093 11L1101 14L1103 20ZM1064 218L1069 215L1076 216L1075 223L1071 225ZM1122 190L1126 184L1140 186L1143 196L1129 201ZM342 29L347 33L344 37L339 32ZM190 1L174 0L172 -9L185 -19L195 -9ZM746 126L755 113L766 115L768 126L751 131ZM835 68L831 65L837 59L844 61L848 68L842 70ZM565 143L556 143L560 134L565 141ZM541 234L534 239L532 235L536 228ZM993 89L985 93L982 84L990 82ZM297 2L293 6L290 9L287 5L287 -1L292 -1ZM538 239L532 231L537 224L546 226L548 231L543 237ZM521 51L516 49L517 46L519 44L524 47ZM872 305L873 309L865 316L860 312L857 307L866 303ZM1095 12L1095 22L1086 20L1088 11L1093 9ZM634 183L628 174L637 163L646 164L645 174ZM66 206L69 210L68 213L62 214L57 213L60 205ZM1061 176L1063 178L1059 181L1054 177ZM923 168L911 174L902 159L911 158L920 159ZM125 35L141 27L143 46L133 44ZM599 111L595 107L596 99L605 100L608 102L606 109ZM438 242L455 245L455 253L438 255ZM26 282L31 281L39 294L28 300L19 297ZM461 95L455 92L454 87L459 81L466 89L467 93ZM1067 35L1060 33L1061 23L1069 18L1073 31ZM841 251L847 253L851 263L843 265L835 258ZM425 147L426 143L432 137L440 136L438 142L433 149ZM514 219L498 215L505 197L520 209ZM380 155L387 155L389 159L381 160ZM534 109L538 99L551 94L553 108L545 116ZM326 228L329 230L326 236L320 238L318 234L318 227ZM1089 2L1092 -13L1102 -15L1107 -6L1102 2ZM445 29L441 30L442 21L450 26ZM632 97L626 102L621 93L630 91ZM833 84L826 82L818 75L828 70L834 73ZM1041 172L1036 176L1028 167L1037 164ZM871 137L878 147L870 159L862 152L862 148L865 136ZM110 178L113 185L105 188L97 186L102 175L104 176ZM839 160L834 168L821 157L825 151L831 144L836 149ZM999 226L998 223L1003 219L1006 225ZM218 134L226 136L225 139L220 140ZM157 93L160 96L155 99L150 94ZM549 288L561 290L555 300L549 291ZM840 193L828 183L827 174L838 169L847 183ZM835 211L841 206L852 204L851 217L849 220ZM568 236L575 224L583 223L591 237L577 244ZM544 160L547 164L541 169L539 166L537 163L541 160ZM35 298L25 297L23 292L30 286ZM393 26L398 43L379 42L384 29ZM202 39L213 31L222 36L218 43L205 43ZM556 34L555 42L549 43L549 35ZM1010 149L1007 142L1014 138L1018 146ZM943 19L940 26L929 22L928 16L939 9ZM314 189L311 193L301 187L310 178ZM375 167L366 164L367 158L374 156L380 165ZM-11 304L-8 298L-2 299L-1 304L-8 307ZM569 103L573 100L576 99L579 103L577 108L570 108ZM505 190L503 182L503 178L516 178L519 190ZM1066 169L1068 179L1054 181L1054 165ZM709 184L717 194L711 198L704 198L701 189ZM311 311L304 319L300 314L305 307L310 308ZM671 206L670 202L670 200L675 199L676 206ZM946 263L952 271L947 284L942 284L931 276L937 265ZM393 145L408 146L409 155L406 163L387 161ZM891 295L892 300L886 301L884 296L888 293ZM655 250L645 245L644 236L655 236ZM896 133L907 123L913 132L904 144ZM661 305L657 297L663 291L674 297L670 304ZM1098 -5L1105 -4L1106 1L1099 2ZM239 179L236 173L238 170L243 167L246 174L246 176ZM319 272L323 253L330 257L339 263L328 275ZM75 210L82 206L87 211L79 219ZM864 228L869 226L876 232L870 236L865 234ZM921 271L904 264L910 255L920 262ZM641 200L658 207L655 212L629 207ZM563 81L557 80L553 70L562 67L567 73ZM366 254L353 260L352 248L358 242ZM955 120L961 120L964 118L968 125L960 129L955 127ZM55 -5L45 3L40 -1L34 -5L44 -12L49 -10ZM517 59L523 58L526 65L526 71L513 70L508 68ZM904 288L908 285L910 287L911 290L907 292L904 292ZM837 119L824 107L834 104L838 111ZM576 294L584 285L592 290L588 295ZM874 48L873 57L859 49L870 44ZM852 98L851 92L857 90L858 97ZM424 315L416 302L428 295L435 309ZM165 286L167 270L175 266L175 288ZM474 56L485 57L483 67L474 67ZM504 7L507 20L502 26L488 24L491 9ZM567 148L576 145L580 160L568 164ZM1053 309L1057 307L1061 307L1062 312L1061 315L1055 312ZM95 9L100 5L103 9L95 12ZM434 310L435 302L443 302L444 309L440 314L436 315ZM144 75L145 63L156 64L158 72L154 78ZM424 187L445 186L442 194L430 200ZM1020 235L1030 224L1039 240L1030 245ZM905 265L921 260L923 275L919 283L906 272ZM738 31L730 39L725 37L728 27ZM152 163L155 169L155 174L148 174L145 168L149 165ZM953 62L957 57L962 58L963 62L954 64ZM230 -13L234 -17L245 -8L240 -5ZM646 298L649 295L654 301L652 309L645 305ZM78 116L66 103L73 95L88 102ZM20 201L25 204L17 213L10 214L3 207L12 196ZM186 90L195 91L198 99L188 101ZM169 93L163 98L158 99L153 90L161 88ZM599 53L610 61L608 68L602 76L592 68L591 62ZM993 104L1004 118L997 121L981 115ZM493 44L491 48L480 50L482 47L487 39ZM280 276L290 285L281 293L269 281ZM530 125L520 133L515 130L518 118ZM488 65L495 65L501 72L494 79L486 78ZM-4 258L-6 251L-2 245L5 250L4 253ZM624 302L622 304L615 304L618 295L624 295L626 298ZM297 80L280 92L277 84L287 71ZM760 20L774 13L778 15L780 28L769 30L763 29ZM891 157L904 152L904 163L899 164ZM472 190L466 183L472 178L477 181ZM236 193L234 178L243 176L245 179L247 188ZM1012 173L1011 165L1023 167L1022 171ZM599 49L605 40L614 49L605 54ZM554 235L555 240L548 242L546 239L548 234ZM659 -5L648 -9L657 -19L663 -13ZM120 202L131 201L136 204L131 217L119 218ZM607 265L613 252L619 252L627 259L624 269L619 273ZM210 119L213 117L216 123L216 126L212 127ZM1100 55L1109 62L1105 70L1096 66L1094 60ZM339 86L340 79L348 76L353 82L347 89ZM636 97L629 100L622 97L626 89ZM691 139L685 141L678 133L683 131L691 130ZM556 313L562 302L568 305L572 309L568 316L559 320ZM25 182L29 174L32 178L32 186L27 187ZM1063 247L1066 265L1051 266L1050 255ZM1026 52L1022 56L1017 46L1017 43L1026 42L1029 50ZM1063 224L1060 228L1053 226L1057 222ZM678 64L681 64L685 67L681 72L676 68ZM1054 68L1056 72L1046 74L1044 66ZM420 67L418 79L413 78L411 68ZM362 136L372 138L369 154L363 153ZM950 235L947 224L964 222L967 235ZM235 96L227 94L230 89L237 85L242 89L240 96ZM887 25L893 35L882 39L881 25ZM204 112L202 115L200 117L197 115L196 112L199 108ZM1137 258L1142 266L1133 273L1131 266ZM507 90L504 84L511 82L514 87ZM673 161L682 159L681 178L675 178ZM753 133L743 113L758 112L764 121ZM732 236L725 246L708 233L722 227ZM1126 262L1140 255L1143 270L1143 273L1126 273ZM202 170L194 163L193 158L199 155L206 159L205 165ZM688 145L675 136L691 123L697 133L700 143ZM14 222L7 225L1 222L8 212L14 214ZM657 0L649 8L643 -3L653 -5ZM530 176L526 186L517 182L519 174ZM629 220L621 218L622 213L632 215L631 219ZM443 145L440 135L448 133L451 138ZM222 203L227 205L227 209L225 214L223 212L220 209ZM845 289L845 294L837 295L834 291ZM239 -3L234 -13L240 -21L248 -7ZM299 81L305 72L310 75L303 84ZM66 100L70 110L56 113L51 107L57 97ZM134 221L128 226L123 226L118 217L123 211L130 212ZM974 48L975 57L968 58L963 50L967 48ZM86 3L87 9L82 10L80 8L83 3ZM634 24L638 32L630 44L625 30ZM539 302L538 309L532 313L528 307L531 301ZM1098 307L1092 299L1097 289L1106 288L1113 297L1107 302ZM313 186L316 174L331 184L318 195ZM269 62L265 68L255 63L265 50ZM782 69L780 73L774 70L777 64L781 61ZM678 32L686 41L681 54L671 46ZM3 250L5 242L11 245L13 251ZM951 5L961 -1L965 15L958 19L943 14ZM923 139L913 132L922 126L925 129ZM230 280L225 286L222 280L224 277ZM271 133L268 138L261 139L257 132L263 129ZM957 204L945 193L955 183L966 192ZM1077 27L1083 23L1092 28L1086 42L1078 37ZM350 206L343 207L339 201L342 197L347 194ZM1111 29L1121 25L1126 29L1125 38L1121 39L1112 40ZM1049 34L1039 37L1037 26L1050 18ZM162 68L165 82L147 81L144 67ZM549 224L541 226L540 224L544 220ZM714 107L723 104L736 118L720 120ZM230 53L239 56L237 70L226 70L218 58ZM391 112L399 114L400 121L399 133L387 133L382 120ZM1074 31L1070 34L1063 30L1066 26L1071 23L1073 28ZM736 32L721 43L718 31L729 28ZM1009 175L1008 185L995 189L991 178L1005 165ZM931 228L928 242L922 242L917 231ZM121 229L128 235L124 241L118 243L116 230ZM82 6L76 14L68 7L74 -1ZM777 14L779 23L772 27L766 21ZM180 20L173 6L184 0L192 4L193 17ZM1043 140L1048 129L1057 131L1051 142ZM855 58L864 67L854 72L850 74L847 63ZM657 273L651 276L647 273L650 270L655 270ZM6 304L-1 313L-11 313L-6 297ZM1008 266L1012 263L1016 268L1014 273L1011 275L1006 271ZM374 115L367 116L354 108L367 102L373 105ZM1103 198L1110 199L1110 204L1104 207L1101 201ZM210 123L212 128L204 133L198 127L202 123L207 118ZM565 170L554 164L557 156L566 151L572 154L575 167ZM216 103L225 104L233 115L221 120L212 116ZM917 134L910 141L906 137L908 129L912 130ZM335 171L331 185L323 175L330 168ZM1124 305L1128 301L1136 306L1130 312ZM785 65L776 65L777 52L787 51L788 57ZM608 0L612 -4L615 -1L614 6L608 5ZM693 -9L681 -4L677 -15L685 -19ZM212 277L214 266L234 275L224 285ZM396 155L404 169L389 177L383 172L389 153ZM195 20L195 26L191 28L188 27L191 19ZM1069 125L1078 119L1085 129L1076 138L1070 134ZM868 128L870 120L875 121L877 128ZM264 237L273 235L276 253L268 252ZM697 176L698 178L692 184L684 180L687 172ZM12 3L4 -4L10 -10L16 -1ZM176 240L178 253L165 259L160 249ZM788 148L779 158L767 149L777 141ZM102 -7L111 -11L114 -2L114 2L108 5L100 4ZM545 72L555 57L563 65L561 80L548 82ZM662 72L670 68L686 70L681 80L666 82ZM148 149L153 163L145 169L137 167L131 156L140 148ZM1058 -11L1054 -5L1051 -8L1048 -14L1053 -18ZM500 144L498 140L506 138L505 144ZM166 90L161 100L151 102L151 91ZM569 282L575 293L555 291L561 282ZM1138 288L1138 297L1137 306L1125 305L1116 295L1118 287ZM1124 107L1116 108L1111 98L1114 92L1122 94L1128 100ZM949 30L948 34L941 32L941 28ZM485 237L498 243L486 260L474 244ZM692 133L691 138L682 141L680 134L684 129L689 129ZM803 264L813 258L817 267L810 271ZM899 194L894 198L890 193L893 189ZM483 14L485 8L490 7L492 13L488 19ZM61 57L66 44L73 50L72 59L66 62ZM692 171L709 163L711 176L699 182ZM697 5L693 5L690 2L696 -1L697 -1ZM921 151L915 154L913 148L918 145L922 148ZM-3 288L-5 273L5 270L5 284ZM725 13L728 16L724 23L719 21L719 18ZM783 150L790 154L789 158L784 159L783 155ZM954 117L955 122L949 124L943 121ZM441 128L439 135L432 136L430 131L433 124ZM885 124L889 132L883 137L881 131ZM665 7L662 10L655 15L653 7L657 1ZM90 -3L92 -9L104 -10L106 -8L102 1L96 4ZM661 188L666 180L674 187L668 191ZM991 191L988 194L982 190L980 183L986 177L994 182ZM336 0L339 -1L343 2L338 7L336 8L333 3ZM792 44L771 43L776 30L786 28ZM291 10L294 7L305 13L303 21L287 20ZM319 252L323 261L321 271L311 266L311 256ZM467 230L489 237L482 249L468 243ZM546 213L562 224L559 230L543 234L536 225ZM828 112L828 117L821 119L823 109ZM506 179L502 182L494 170L499 163L508 165ZM608 188L614 187L613 192L607 191ZM597 275L590 287L585 283L582 275L590 266ZM794 191L803 188L805 199L800 202L792 197ZM632 17L614 10L621 5L634 12ZM1064 203L1051 209L1046 195L1055 191ZM942 146L949 153L940 158L933 150ZM512 185L506 183L509 175L515 177ZM906 148L911 144L918 155L910 159L907 159ZM1046 222L1039 224L1037 220L1043 216ZM669 41L658 48L651 43L655 31L664 28ZM937 -5L928 8L915 9L909 1L920 -12ZM1092 7L1104 -1L1110 5L1100 14ZM780 305L774 297L792 288L793 307ZM1 174L-8 168L0 157L8 153L9 167ZM467 42L464 38L468 31L475 35L474 38ZM-17 22L-11 8L1 11L-3 25L-9 26ZM289 204L297 199L304 203L305 212L295 219L287 213ZM209 224L203 231L195 236L188 218L202 215ZM44 87L42 83L45 79L50 79L53 84L49 86ZM858 107L863 106L864 113L859 113L856 108ZM914 53L905 44L920 33L925 41ZM268 156L265 161L261 158L262 153L266 150L268 153ZM318 258L313 261L306 250L311 242L319 251ZM704 287L705 296L701 305L689 298L685 292L699 278ZM567 201L569 210L553 214L549 207L553 200ZM455 219L458 213L467 216L471 224L462 231L458 231ZM857 266L848 266L850 259L857 262ZM481 178L481 182L475 186L472 181L474 176ZM651 167L653 163L661 161L663 170L657 173ZM636 197L626 202L616 191L632 183L637 189ZM740 290L744 296L737 297L737 290ZM279 113L276 122L265 117L263 113ZM975 172L980 155L996 159L986 175ZM47 30L41 24L44 22L52 24ZM319 141L327 136L333 147L325 148ZM990 306L1000 297L1003 299L1002 310L994 310ZM1048 74L1044 60L1053 56L1056 69ZM19 81L24 67L33 73L41 78L32 90L25 86ZM101 115L111 110L119 118L106 130L100 131ZM487 70L485 77L481 76L476 73L480 68L483 67ZM35 -13L38 -9L32 -3L30 -7ZM652 60L657 56L658 59L654 64ZM456 33L454 44L450 41L449 35L454 33ZM582 265L588 267L595 277L591 279L580 285L578 273ZM782 207L790 196L799 207L791 211ZM399 96L395 90L394 87L402 89ZM688 -6L686 -16L693 -15L697 -14ZM522 202L513 195L524 187L534 189L531 201ZM527 216L523 226L512 217L516 207ZM200 153L195 147L199 141L203 140L209 147L205 152ZM412 10L423 3L431 17L421 27L409 18ZM352 263L347 265L344 262L345 253L352 256L355 261ZM376 209L365 206L369 198L378 202ZM284 37L271 33L272 24L278 18L286 24L291 29ZM278 321L271 316L276 305L280 304L291 311L284 319ZM1075 17L1077 12L1081 8L1084 11L1086 16L1081 19ZM826 104L833 92L840 98L841 102L832 107ZM299 169L295 181L290 179L287 170L296 168ZM216 56L219 48L225 52L218 58ZM729 42L728 47L716 52L710 38L713 36L724 31ZM524 219L518 211L523 208L528 213ZM845 114L837 117L831 114L833 105L840 102L846 106ZM129 110L124 99L134 89L139 100ZM328 25L321 28L317 24L325 21ZM363 98L361 94L362 91L366 90L368 97ZM275 275L266 269L272 260L281 262ZM1101 269L1100 276L1090 273L1093 267L1097 267ZM384 280L379 282L381 275L384 274ZM618 271L614 278L605 271L607 266L614 265ZM582 232L581 221L589 222L589 233ZM953 96L957 95L960 101L952 106ZM454 201L459 210L451 214L439 212L440 203L447 197ZM639 48L642 35L651 31L657 41L654 55ZM2 110L-1 118L-10 115L-8 107ZM223 134L229 127L237 121L243 128L241 136L234 139ZM343 262L342 263L330 262L331 252L337 248L344 250ZM356 294L365 300L360 305L354 299ZM364 185L359 192L349 182L354 176L363 178ZM329 70L327 62L335 58L341 64ZM477 245L479 246L479 254L472 251L471 245ZM849 247L854 251L855 255L845 254ZM278 284L269 294L258 282L271 274ZM456 254L453 248L461 245L464 248L460 256ZM620 93L619 82L635 83L630 92ZM1134 238L1142 243L1144 251L1129 259L1128 248ZM1109 37L1109 33L1113 32L1117 35L1113 41ZM474 69L478 66L482 70L483 77L481 80L473 79ZM717 188L731 197L722 204L710 206ZM38 -5L38 7L29 7L21 0L26 -5ZM38 259L35 252L45 250L54 253L51 260L49 262ZM860 76L864 80L863 82L859 85L857 83L856 77ZM404 24L397 21L397 16L406 15L406 21ZM168 144L167 134L177 132L188 139L184 148L173 155ZM420 35L427 36L427 45L422 46L419 46ZM124 146L130 155L124 160L114 157L111 151ZM455 168L441 165L442 152L455 152ZM514 208L518 203L522 200L523 210ZM262 82L261 72L272 70L275 76L271 86ZM846 204L852 198L863 203L862 212L853 218L845 212ZM24 205L31 203L40 212L31 217L27 219L18 209ZM273 121L290 113L301 125L291 132L281 134ZM402 -1L402 -5L404 -7L409 -6L409 -2L407 1ZM928 126L917 128L908 118L916 112L927 118ZM619 157L626 157L629 164L619 169L615 163ZM267 -5L262 -2L256 -3L254 -12L260 -16L266 -15ZM1029 290L1033 294L1028 309L1017 298ZM1049 139L1049 152L1038 152L1037 143ZM610 76L598 77L595 65L605 58L613 68ZM121 120L129 118L133 124L131 127L124 127ZM589 177L580 168L585 162L591 160L598 162L593 174ZM784 23L784 26L783 31L779 29L779 25ZM622 41L613 41L611 32L617 28L625 29L626 34ZM696 46L701 48L702 53L697 55L691 51L694 47ZM49 174L50 178L39 183L36 178L37 174ZM889 68L891 75L885 80L881 78L881 66ZM555 257L554 262L550 264L548 258L552 257ZM549 206L557 196L571 203L561 209ZM895 311L904 299L912 304L912 318L906 321ZM360 200L353 201L354 194L361 195ZM1070 22L1070 25L1064 27L1062 21L1066 18ZM518 204L512 215L506 209L502 203L511 198ZM1098 102L1097 116L1081 112L1082 103ZM885 33L891 43L888 49L879 51L875 37ZM589 246L594 251L581 262L580 251ZM753 227L763 221L767 225L770 234L756 234ZM537 198L528 190L543 177L552 189ZM582 155L584 164L578 168L573 162L577 153ZM962 137L966 129L972 131L970 139L965 142ZM262 309L257 313L254 316L252 310L255 306L258 307ZM700 58L689 51L700 45L704 53ZM567 112L573 102L579 113L572 121ZM595 189L591 194L582 194L576 180L585 172L592 175ZM540 142L533 137L538 133L546 132L545 140ZM1127 40L1121 40L1121 33L1126 28L1133 35ZM569 124L575 129L567 137L562 131L563 125ZM462 252L463 241L473 243L475 249L464 254ZM635 64L638 63L640 68L636 71L633 68ZM991 112L997 118L986 125L982 119L985 112ZM355 143L357 141L367 147L363 154L358 154ZM888 128L881 130L882 121L885 124ZM-13 116L-3 98L9 110L-4 128ZM627 161L619 169L613 160L624 152ZM608 55L612 65L605 67L599 67L597 58L602 51ZM1011 204L1014 216L1006 218L1001 210ZM843 248L830 240L841 230L846 236ZM1019 253L1030 259L1018 266L1013 265L1011 251ZM167 286L160 301L154 293L154 284ZM1014 112L1021 116L1010 125L1003 116ZM877 48L885 47L886 54L884 59L874 53ZM-9 172L-15 168L-16 159L-4 156L2 167ZM482 253L481 247L492 247L491 252ZM800 155L808 146L821 154L814 163L806 166ZM72 40L63 40L59 37L65 28L71 27L74 32ZM941 96L951 97L952 106L940 106ZM549 297L560 296L567 305L560 311L549 313L542 307ZM1059 218L1063 214L1067 213L1070 219L1067 223L1061 221ZM474 249L468 249L469 243L474 243L476 248ZM809 278L803 281L798 272L805 266L812 269ZM935 291L941 292L938 302L928 303L929 294ZM711 287L715 288L718 294L712 297L706 295ZM412 204L417 204L421 218L407 221L404 215ZM761 165L763 176L761 185L745 179L748 167L750 160ZM156 20L160 30L149 32L146 29L143 25L152 16ZM115 202L129 205L128 209L120 215L116 211ZM660 77L665 67L676 73L673 79L663 83ZM665 306L665 304L668 297L678 299L674 310ZM892 255L902 255L902 264L894 273L883 272L883 259ZM524 75L519 81L513 75L516 71L526 73ZM725 203L735 208L721 222L711 211L720 202ZM235 71L235 65L243 63L243 69ZM100 239L94 242L89 235L89 225L102 231ZM566 24L556 22L552 19L561 8L570 12ZM827 113L823 119L814 111L817 106ZM668 185L670 173L683 178L680 189L674 188ZM1079 38L1073 40L1068 35L1075 30L1079 34ZM207 234L206 227L213 217L217 224L218 233ZM576 285L573 291L567 293L569 281ZM1066 -12L1059 -4L1054 -9L1059 -21ZM459 7L463 1L472 -10L479 0L479 5ZM1037 55L1038 49L1047 48L1047 60ZM212 255L211 258L203 259L202 255ZM651 129L650 132L643 134L644 125L648 122ZM872 112L884 102L889 103L891 114L880 119ZM63 49L60 42L74 41L79 50L68 59ZM94 298L101 288L113 299L106 305ZM612 25L624 36L609 50L602 35ZM847 173L860 174L863 185L846 185ZM419 146L429 141L432 147L427 151ZM474 265L477 260L484 261L482 267ZM641 160L647 155L655 155L658 161L653 172L642 164ZM154 23L156 19L163 24L160 30L153 29ZM608 118L608 128L596 127L597 113L599 113ZM1077 115L1080 101L1090 108L1089 121ZM535 2L530 -7L536 -8L541 0ZM475 39L466 45L461 38L467 33ZM336 251L338 254L336 260L332 259ZM440 80L449 96L436 100L432 79ZM908 144L915 161L910 168L898 151ZM720 20L707 16L714 -2L726 3ZM890 245L883 237L891 231L896 240ZM402 317L394 312L394 300L403 296L411 309ZM929 276L932 256L944 254L952 273L943 281ZM743 125L733 129L733 125L739 119ZM105 294L111 291L115 299L105 304ZM553 82L552 79L551 71L560 68L568 71L566 79ZM146 174L156 166L164 179L155 183ZM230 214L233 226L224 228L224 226L223 217ZM38 121L43 110L49 113L53 122L43 127ZM629 297L621 291L623 287L632 288ZM200 279L194 294L183 290L190 270ZM40 4L39 -6L49 -12L55 0L41 5ZM713 194L712 190L718 185L719 188L720 194ZM3 69L2 73L0 76L-4 73L-4 68ZM581 70L585 58L600 64L591 84ZM497 303L489 312L480 313L482 292L490 293ZM948 287L956 287L966 293L964 297L954 304L945 295ZM7 215L8 219L3 221L-1 215L3 212L6 210ZM676 71L671 68L664 63L668 55L680 56L678 66ZM747 282L736 278L750 267L759 277ZM1016 8L1021 8L1025 17L1016 20L1011 13ZM251 226L266 232L271 242L256 250L246 235ZM682 58L687 55L698 64L686 72ZM995 183L1008 172L1016 178L1009 191ZM253 52L261 50L261 60L255 61ZM370 42L377 32L381 37L379 46ZM912 232L915 218L931 223L928 233L922 237ZM714 93L708 87L710 74L722 79L718 95ZM219 89L214 91L210 89L211 83L216 82L219 84ZM65 176L73 159L87 172L84 180ZM114 -5L120 -19L126 -17L140 -9L133 0L120 4ZM246 20L247 23L246 30L241 25ZM868 123L875 134L867 136L862 129ZM509 201L504 201L501 192L510 189L512 192ZM635 203L641 192L651 195L649 209L638 210ZM303 50L296 59L287 52L290 42L297 44ZM226 -15L237 -12L236 6L218 7L214 -3ZM762 317L765 303L776 305L782 316ZM798 148L810 143L815 148L815 151L808 159L803 157ZM174 197L168 183L178 178L184 191ZM800 196L807 200L808 207L803 212L794 203ZM1029 139L1023 141L1021 139L1024 131ZM1035 188L1028 193L1026 186L1031 181ZM143 139L149 134L152 136L154 142L149 144ZM795 267L801 267L800 278L791 274ZM263 -15L271 -15L273 -11L272 -6L265 -3L262 -11ZM602 238L623 246L619 258L604 262L601 246ZM701 70L706 60L717 68L714 73ZM383 0L383 15L371 12L367 9L373 -2ZM33 32L29 38L19 38L19 30L25 29ZM383 302L390 306L383 308L381 303ZM1137 256L1142 265L1135 273L1125 266L1123 260ZM284 217L287 228L272 227L273 217ZM1002 225L1005 233L1003 238L996 235L994 229L997 227ZM293 138L287 136L286 124L299 124L298 129ZM1091 255L1090 261L1082 260L1083 256L1084 251ZM184 190L194 181L196 187L201 194L192 201L185 196ZM722 185L731 177L738 181L739 187L731 196L723 197ZM569 149L556 149L551 136L564 130ZM620 308L620 315L616 315L611 311L613 309ZM1104 266L1098 262L1105 252L1111 254L1115 259L1112 268ZM236 28L241 28L241 31L238 34L235 34ZM297 85L303 76L308 80L303 87ZM906 232L912 232L916 234L909 241L903 239ZM299 176L304 183L298 186L294 180ZM912 20L907 9L910 5L920 2L925 11L923 16ZM783 151L784 160L768 164L775 141ZM534 191L540 188L548 196L546 203L533 203ZM1115 287L1116 304L1105 305L1107 286ZM579 96L578 93L586 91L587 96L587 99L581 100ZM1062 211L1045 222L1044 207L1051 202ZM206 85L205 79L211 74L216 78L215 88ZM866 101L873 100L877 103L871 110L868 108ZM136 145L123 152L118 141L122 136ZM446 317L435 321L429 316L439 304L444 305ZM586 99L597 100L595 108L588 108ZM942 117L932 112L937 105L942 104ZM72 180L77 183L71 187L68 182ZM749 264L750 251L765 252L772 260L760 272ZM235 114L230 111L225 98L235 91L243 99ZM453 293L451 289L453 282L459 284L461 289ZM569 157L568 151L573 147L582 152L579 158ZM262 259L264 260L267 266L265 269L260 266ZM206 -5L205 -9L212 -10L215 -6L211 -1ZM263 -3L257 -3L258 -18L264 -16ZM312 11L308 7L309 0L319 1L321 9ZM1037 58L1053 60L1053 66L1038 74ZM80 9L73 12L68 -2L73 0ZM225 166L217 173L210 171L209 165L214 160L220 163ZM1045 78L1042 86L1030 87L1035 76ZM784 -3L791 9L786 18L776 16L768 9L776 1ZM47 96L54 96L56 102L51 108L45 104ZM1137 115L1139 112L1145 112L1144 115L1143 119L1139 119ZM393 320L388 302L403 303L406 320ZM618 54L617 61L608 58L609 55L617 51ZM1127 148L1125 154L1118 159L1110 154L1115 145L1117 144ZM574 190L567 189L567 186L568 183L572 183L573 186ZM673 77L662 75L669 62L678 62L686 67ZM122 51L115 52L114 40L119 40ZM325 179L331 189L324 193L317 193L318 180ZM371 156L375 149L381 150L382 160ZM511 110L507 116L504 114L501 110L502 106L506 105ZM537 88L540 82L545 79L551 83L548 90L543 90ZM558 11L547 10L543 -3L550 -8L559 -3ZM506 106L510 91L528 96L519 112ZM146 -2L145 5L136 9L134 -3L141 -6ZM440 168L440 180L433 187L423 179L421 167L428 163ZM220 311L229 303L234 307L236 315L228 317ZM1043 230L1040 237L1036 239L1030 236L1029 231L1034 227ZM921 136L917 131L912 124L920 119L927 126ZM935 225L936 217L948 215L950 222L947 231L935 232ZM876 133L872 144L858 145L859 132ZM774 244L775 250L770 254L760 249L764 242ZM1001 112L1009 114L1006 123L997 121ZM1102 79L1112 84L1117 88L1109 98L1101 95L1094 87ZM310 136L309 127L312 123L324 127L322 135ZM947 74L952 78L945 88L937 84L934 77L939 75ZM1039 9L1023 15L1013 8L1021 -4L1032 -1ZM502 98L499 94L502 89L507 92ZM2 -2L-5 -8L3 -12L6 -13L7 -5ZM670 294L664 300L653 289L661 281ZM391 54L396 64L387 77L383 71L383 57ZM1090 142L1101 143L1098 155L1089 159ZM527 304L536 303L538 308L534 312L528 313L523 309ZM391 278L392 283L383 288L372 282L372 272L379 268ZM1012 107L1011 112L1002 112L1001 107L1007 102ZM362 28L367 25L370 32L365 33ZM464 28L471 24L472 39L465 40ZM206 206L198 202L201 196L208 198ZM157 204L151 203L153 199L155 198L157 200ZM553 119L551 113L553 103L562 108L566 116ZM959 267L956 281L945 283L944 274ZM156 19L136 16L145 -3L155 3ZM568 83L571 64L585 65L587 80ZM1027 3L1027 12L1014 14L1015 2ZM578 293L586 295L588 298L584 302L578 299ZM144 137L141 143L137 141L137 134ZM1040 57L1041 67L1036 69L1027 63L1033 58ZM771 238L762 237L762 233L766 232L772 235ZM515 24L511 32L505 29L504 26L506 20L512 23ZM961 185L963 189L957 193L955 190L958 184ZM567 278L577 283L576 298L565 294L559 286ZM310 60L302 68L291 70L292 56L300 50ZM1023 20L1016 13L1020 2L1031 -3L1036 8ZM65 210L67 214L64 222L58 218L59 214ZM565 99L554 105L551 96L562 88ZM262 207L251 216L243 208L245 197L255 196ZM1086 72L1085 80L1079 78L1077 72L1084 70ZM894 279L888 275L891 268L901 270L902 274ZM1019 146L1026 134L1039 136L1037 143L1030 148ZM1069 20L1077 7L1083 18L1077 30ZM66 161L72 156L76 157L77 162L74 166L69 165ZM792 221L796 231L783 234L778 220ZM328 11L326 5L331 -2L342 2L341 7ZM601 75L600 54L610 58L610 72ZM519 195L521 190L525 188L529 193L525 196ZM820 304L830 302L838 315L816 319ZM197 137L183 136L187 123L198 121L206 131ZM373 163L369 156L372 151L384 158ZM459 102L470 109L466 115L454 113L455 103ZM848 290L847 301L835 302L832 289L837 285ZM941 190L948 194L945 199L939 200L936 198L935 192ZM1147 222L1137 225L1133 219L1139 211L1149 215ZM364 147L363 150L352 153L344 145L352 138L364 140ZM14 97L17 87L28 89L24 99L19 100ZM737 54L743 39L750 41L756 54L740 56ZM419 228L414 223L424 216L428 224ZM903 119L900 122L896 123L894 119L900 118Z" fill="#cbedce"/>
<path d="M703 218L709 225L702 231ZM459 50L462 54L461 55L456 53ZM769 56L769 66L763 61ZM378 94L379 87L382 88ZM412 170L414 178L412 178ZM526 185L522 186L519 174ZM355 46L362 52L351 52ZM281 194L281 200L279 196ZM487 41L491 39L493 43L491 47ZM1089 196L1083 192L1086 185L1093 187ZM945 83L946 73L952 78ZM403 74L401 86L397 79ZM950 289L946 289L944 284L951 284ZM662 187L664 187L662 191ZM43 140L32 144L32 138L38 136ZM333 150L332 161L323 153ZM683 106L686 100L692 103ZM798 119L797 113L805 113ZM704 134L701 134L704 131ZM324 146L323 153L321 152L316 147ZM150 1L145 2L141 -7L151 -6ZM819 279L812 278L809 272L815 270ZM665 251L659 247L667 248ZM140 188L132 183L134 183ZM430 21L423 19L424 13ZM149 83L156 83L154 92ZM837 54L831 56L831 46ZM33 217L26 223L27 215ZM941 88L944 83L954 85ZM204 16L200 13L203 14ZM528 30L519 27L525 24ZM1017 101L1013 105L1016 98ZM34 213L37 217L32 222ZM190 59L194 57L202 60ZM393 22L397 26L390 25ZM722 267L726 263L727 268ZM234 1L244 -1L239 4ZM351 28L345 22L353 20ZM52 54L49 66L47 57ZM157 206L162 211L156 212ZM71 231L67 234L69 230ZM14 181L7 180L12 170ZM519 128L522 129L521 133L519 133ZM399 142L396 140L403 138ZM700 122L695 121L701 118ZM531 166L529 158L535 163ZM538 210L541 215L536 216L534 214ZM879 182L877 189L873 188L875 182ZM584 269L584 276L579 273ZM367 258L363 256L366 254ZM640 192L644 187L646 187L647 192ZM217 182L207 180L215 175ZM950 142L954 143L951 145ZM1012 161L1016 167L1008 168ZM5 298L2 300L2 295ZM849 59L848 52L854 57ZM478 69L474 72L473 69ZM925 38L929 39L928 42ZM682 256L673 257L674 254L678 250ZM935 277L937 279L935 280L933 279ZM714 232L718 233L718 235L714 234ZM12 243L14 249L11 250ZM420 109L423 105L424 108L425 112ZM809 70L811 66L813 70ZM599 223L595 210L598 210L606 218ZM398 151L394 153L396 146ZM278 2L284 2L280 6ZM632 -5L639 -1L637 3ZM786 211L790 215L786 215ZM514 85L514 91L508 89ZM482 190L477 189L477 185L482 186ZM476 239L470 241L475 235ZM372 29L383 29L379 32ZM66 225L64 215L71 212L77 221ZM741 204L739 214L734 201ZM307 166L308 167L304 168L303 165ZM623 240L627 244L621 243ZM1127 33L1134 39L1125 40ZM608 173L612 163L620 168ZM473 128L471 126L476 121ZM519 273L524 273L520 284ZM541 35L537 32L542 31ZM261 19L261 15L267 17ZM166 15L162 11L167 13ZM527 187L526 188L523 188ZM482 86L489 89L484 91L479 90ZM300 17L302 28L294 24ZM775 229L768 237L769 228ZM1075 222L1077 232L1074 233L1068 225ZM686 158L688 158L688 166ZM349 22L352 19L357 19ZM719 12L716 7L720 6L721 10ZM708 131L703 122L714 131ZM1002 93L1007 86L1012 93L1007 99ZM340 109L343 107L347 109ZM741 3L744 7L744 11L740 8ZM310 277L302 285L306 276ZM466 286L462 283L463 280L467 282ZM121 167L128 168L126 172ZM892 62L894 62L892 67L891 66ZM463 239L460 236L462 233ZM632 114L628 118L627 112ZM841 183L839 176L845 183ZM637 20L639 22L635 26ZM553 265L546 268L550 259ZM339 172L336 165L343 169ZM1050 3L1054 1L1054 2L1050 5ZM423 248L430 241L428 248ZM572 204L566 198L575 198ZM890 205L882 198L894 198ZM365 215L366 219L361 216ZM905 256L905 247L916 251ZM256 43L253 51L244 49L244 45ZM70 151L70 146L74 146L72 153ZM284 157L285 159L283 162ZM738 115L734 117L736 112ZM1115 166L1117 165L1120 170ZM120 173L124 175L124 179L119 179ZM561 61L552 64L552 59L557 55ZM671 55L676 62L666 59ZM412 31L407 35L404 30L409 29ZM386 50L388 44L390 51ZM876 275L882 273L885 280L878 281ZM886 148L883 150L882 148ZM793 230L786 236L789 228ZM179 -2L176 6L169 4ZM857 208L853 213L851 210ZM368 296L372 294L377 297L372 302ZM535 110L531 112L530 109ZM141 254L144 245L148 247ZM668 297L666 305L659 301ZM156 264L153 265L155 260ZM538 283L540 286L537 290L535 287ZM310 23L304 23L304 15ZM1115 52L1116 57L1112 59ZM43 -3L53 -7L57 -3ZM17 94L23 94L24 100ZM118 57L122 54L126 56ZM530 211L533 200L536 213ZM785 77L782 80L779 79ZM594 89L586 87L585 84ZM1113 203L1105 203L1111 195L1114 200ZM1002 211L1007 220L998 218ZM755 152L753 152L747 145ZM142 44L138 42L143 39ZM430 114L431 116L428 121L423 115ZM312 105L313 99L314 104ZM608 151L611 148L612 151ZM389 184L395 185L388 188ZM196 300L189 290L195 284ZM692 235L695 234L699 235ZM884 215L889 216L886 219L882 217ZM1050 262L1055 257L1061 260L1056 267ZM78 191L75 191L75 186L78 187ZM593 19L596 13L603 20ZM60 36L60 38L52 41L50 35ZM1122 156L1125 161L1119 165L1116 155ZM8 142L19 140L21 143ZM40 177L45 178L47 183L42 185ZM164 246L163 253L159 250ZM141 274L136 271L143 270ZM254 255L257 266L249 263ZM1129 190L1125 194L1122 189L1129 186ZM848 62L846 53L854 61ZM884 174L884 165L887 165ZM237 128L238 131L233 133L231 130ZM821 25L823 35L813 32ZM401 77L400 73L404 77ZM1076 90L1077 95L1069 95ZM465 70L467 75L461 73ZM1087 149L1093 155L1087 159ZM969 214L965 216L963 211L967 211ZM824 144L821 140L821 137L826 140ZM530 1L532 2L532 7L529 5ZM718 14L720 11L724 8L726 12ZM261 303L261 298L269 305L265 310ZM690 127L690 131L685 129ZM654 186L654 188L648 189ZM592 300L604 299L602 305ZM307 73L311 68L316 74L309 78ZM983 106L989 97L993 108ZM386 109L380 111L388 108ZM862 73L871 71L862 78ZM1047 233L1042 228L1048 226ZM586 72L590 67L590 76ZM989 23L987 18L995 15L994 23ZM580 49L579 53L576 49ZM227 39L220 35L230 34ZM167 225L168 232L160 226ZM932 72L933 61L942 64ZM18 209L15 211L13 208ZM130 293L132 290L136 287L137 294ZM796 45L797 52L793 51ZM982 96L972 95L980 87ZM85 27L82 13L87 22ZM1050 243L1043 241L1044 238ZM372 167L380 167L379 178ZM789 118L793 114L796 118ZM82 76L91 85L82 86ZM119 24L119 28L117 27L116 24ZM11 290L12 294L9 291ZM715 85L715 86L714 89L712 88ZM601 118L601 115L607 113ZM930 136L937 132L937 134ZM450 116L450 111L452 112ZM1024 262L1031 255L1034 255ZM534 44L531 37L537 37ZM477 41L476 46L473 42ZM216 211L217 207L221 209L219 211ZM1076 22L1082 17L1079 25ZM683 180L686 183L681 185L679 181ZM571 26L572 30L569 27ZM188 193L186 187L194 187ZM1097 77L1098 80L1086 88L1089 80ZM791 55L792 50L794 54ZM36 134L33 126L39 126ZM931 266L937 264L933 270ZM429 190L430 196L426 197L425 189ZM983 152L975 156L977 149ZM443 182L451 179L454 182L444 184ZM861 32L853 37L848 35ZM536 122L536 126L532 124L532 122ZM756 229L750 228L753 224ZM834 126L833 131L831 127ZM844 42L840 43L842 37ZM1008 251L1009 248L1012 250ZM227 17L220 12L230 12ZM370 166L375 162L378 169L373 172ZM128 192L134 201L121 198ZM427 64L424 54L431 60ZM384 214L382 216L377 212L381 207ZM998 219L1001 217L1001 228L999 226ZM880 71L876 76L876 65ZM105 258L108 266L102 264ZM638 62L637 66L635 66L636 60ZM688 133L691 129L697 133ZM526 209L534 211L531 217L525 218ZM962 274L952 273L955 269ZM990 293L984 295L979 288L986 283ZM921 16L916 17L915 15ZM1126 171L1133 162L1136 168L1135 171ZM899 307L897 295L906 299ZM17 272L11 268L17 265L20 265ZM792 61L801 64L789 66ZM87 261L81 259L82 256L85 256ZM297 153L299 148L303 151ZM782 105L786 105L785 114ZM1095 -2L1102 -3L1096 2ZM871 41L867 45L865 33L868 34ZM620 93L622 96L620 100L616 95ZM224 187L232 190L227 196ZM160 11L158 14L156 11ZM101 45L98 52L92 42ZM1123 104L1121 99L1125 98L1128 102ZM236 132L225 131L225 129ZM382 208L388 201L392 208ZM330 27L325 22L331 21ZM805 301L806 290L814 295L812 302ZM439 253L436 255L434 247L437 245ZM686 225L693 220L692 230L690 229ZM636 185L643 183L640 193ZM826 20L825 27L815 20ZM721 114L715 112L722 110ZM283 88L277 86L280 82ZM991 113L983 114L984 107L991 110ZM1039 6L1030 10L1028 2ZM727 211L730 209L730 216ZM1045 88L1040 94L1038 90ZM359 123L352 126L353 122ZM207 -2L211 -6L219 -2L216 4ZM143 226L148 220L153 225ZM54 90L52 94L52 89ZM796 123L796 135L790 135ZM155 0L157 3L154 4ZM814 172L823 168L826 176L821 178ZM1129 223L1132 228L1128 231ZM434 13L427 3L436 8ZM25 195L31 186L31 195ZM133 200L130 194L132 194ZM425 4L415 12L419 3ZM90 2L85 0L85 -4ZM267 40L261 37L268 37ZM500 130L499 133L492 132L496 129ZM1116 262L1110 265L1113 257ZM829 59L830 61L821 68L822 61ZM614 2L610 -1L616 -2ZM651 295L642 294L643 290L647 286ZM882 39L890 38L890 47ZM136 3L137 5L134 6ZM487 195L482 192L490 187ZM343 167L343 161L346 161ZM1023 8L1022 12L1019 9ZM1084 41L1084 46L1081 45ZM416 34L421 25L425 29ZM713 78L718 71L719 82ZM657 124L666 128L654 129ZM1026 206L1017 205L1020 198L1026 201ZM441 73L441 61L446 62ZM402 173L397 167L406 166ZM333 289L336 286L337 290ZM308 15L308 13L313 6L316 12ZM30 98L26 101L24 97L26 96ZM342 211L341 216L338 213ZM99 234L94 238L90 233L94 228ZM720 107L724 104L729 108ZM144 150L151 149L146 158ZM243 304L236 302L241 300ZM826 143L830 150L823 157ZM629 40L628 36L633 38ZM464 131L465 133L461 132ZM125 33L126 25L133 27L131 30ZM893 66L897 62L900 64ZM770 273L760 276L764 270ZM1083 113L1081 120L1075 116ZM673 175L673 169L675 170ZM82 243L74 247L80 239ZM1074 32L1072 25L1077 23ZM243 269L240 261L242 260L245 265ZM783 91L785 88L788 91ZM596 274L589 278L593 270ZM918 252L920 247L922 248L920 252ZM814 194L817 192L818 196L813 198ZM952 72L955 65L957 71ZM177 0L182 -1L178 3ZM524 194L530 199L526 205ZM683 267L683 272L679 272L678 269ZM971 112L973 108L980 111ZM41 252L44 253L40 257ZM962 106L957 105L960 101ZM527 102L537 103L534 111ZM802 272L803 276L799 275ZM446 196L437 201L439 193ZM80 169L79 173L78 169ZM408 199L406 201L402 198L406 196ZM211 170L204 169L211 168ZM1103 270L1098 262L1106 262ZM994 279L997 281L994 282ZM986 59L981 52L990 54ZM463 242L467 239L469 243ZM90 267L96 271L86 273ZM192 75L192 67L198 70ZM1054 172L1054 167L1057 171ZM529 234L525 230L531 229ZM330 200L332 200L331 203ZM69 254L65 267L62 256ZM1103 118L1104 114L1108 117ZM572 34L573 43L569 47L566 39ZM846 40L848 45L841 46ZM104 8L110 1L109 11ZM770 112L769 122L766 115ZM958 271L954 265L964 263ZM44 206L42 208L37 207L38 204ZM1089 85L1092 80L1096 81ZM732 250L727 251L728 246L729 246ZM689 96L690 101L682 100ZM603 185L606 184L607 195ZM124 166L131 176L125 175ZM190 235L185 239L186 231ZM62 120L59 126L58 120ZM611 255L613 246L618 250ZM423 51L418 56L419 46ZM608 184L600 191L602 185ZM488 147L485 147L487 144ZM5 221L-1 215L9 211ZM297 210L297 215L294 213ZM208 246L197 249L201 241ZM800 182L798 186L794 181ZM1075 260L1075 265L1069 265L1072 259ZM644 10L638 -1L647 6ZM128 214L126 220L124 218ZM496 237L498 243L494 243ZM269 132L266 137L259 134L265 129ZM1020 2L1024 9L1020 10L1018 10ZM111 -6L112 1L107 -2ZM22 209L18 202L25 208ZM334 214L337 215L333 219ZM817 307L811 306L812 301ZM636 277L645 270L645 280ZM638 206L634 207L630 204L634 202ZM357 188L364 182L365 184L364 194ZM335 236L337 242L331 240ZM167 37L162 30L174 36ZM291 68L283 66L289 59ZM741 93L738 91L741 85ZM574 276L577 282L571 282L571 275ZM145 246L135 239L149 237ZM960 190L959 183L966 189ZM246 272L240 275L237 269L243 266ZM573 166L576 162L580 166ZM453 43L436 42L444 36ZM67 218L62 224L57 222L63 215ZM391 47L385 51L379 49L378 47ZM342 244L337 249L336 240ZM170 241L166 241L168 237L171 238ZM2 7L7 0L8 4ZM1050 99L1051 106L1049 104ZM259 228L265 233L262 238L259 236ZM642 62L645 64L640 69ZM499 71L496 74L495 74L497 70ZM355 53L351 59L346 54L354 45ZM914 227L916 232L911 231L912 229ZM597 66L594 64L598 63ZM1001 283L1009 282L1005 289ZM75 34L69 30L77 27ZM518 204L519 191L526 198ZM191 292L187 299L185 296ZM20 93L21 98L16 98L18 92ZM624 295L622 299L621 294ZM413 92L422 93L413 97ZM385 6L383 17L380 5ZM280 30L284 34L277 42ZM1121 233L1122 228L1127 227L1126 234ZM482 91L485 92L484 101L477 97ZM812 55L815 61L809 62ZM568 134L560 137L562 130ZM826 290L823 291L823 286ZM347 263L353 251L357 256ZM88 94L98 95L90 100ZM308 232L315 229L318 235L312 238ZM947 230L958 233L955 236ZM245 255L242 263L237 258ZM308 118L307 116L311 114L311 119ZM190 143L187 148L186 142ZM302 100L295 103L293 96ZM159 122L154 130L152 120ZM506 151L513 153L513 157L503 155ZM1058 150L1050 150L1055 143ZM507 77L502 74L505 68L511 68ZM369 281L363 274L366 272ZM904 34L902 40L899 36ZM320 101L325 98L327 110ZM806 239L807 232L813 235L807 243ZM187 152L192 152L192 155ZM490 258L492 264L487 259ZM655 1L651 -3L660 -2ZM705 287L706 287L707 292ZM325 165L325 160L334 159ZM235 269L237 265L242 271L239 274ZM1012 169L1005 175L1009 167ZM936 231L930 231L931 222ZM167 295L156 294L162 287ZM1011 114L1009 112L1010 105ZM862 178L866 181L866 184L861 184ZM41 136L36 129L42 135ZM514 306L512 303L514 301L516 306ZM531 64L531 59L537 64ZM751 122L753 116L757 115ZM1009 152L1006 146L1010 142ZM383 61L388 66L382 72L380 67ZM1113 275L1114 273L1122 282L1114 285ZM1057 192L1052 187L1053 185L1060 187ZM654 83L657 87L653 87ZM198 274L197 266L206 268L204 274ZM1118 -1L1126 2L1121 11ZM699 6L703 5L702 8ZM496 213L492 205L498 211ZM60 184L62 176L68 177L65 189ZM541 114L544 115L544 116ZM382 288L382 296L377 292ZM413 61L409 59L409 57L415 57ZM78 287L86 292L76 294ZM88 216L92 216L88 217ZM910 151L914 147L915 152L911 152ZM36 103L32 101L35 99ZM548 63L543 72L537 64ZM700 219L707 221L699 226ZM192 115L196 120L191 120ZM61 11L61 16L54 13ZM809 212L816 215L811 219ZM1088 206L1093 209L1089 210ZM195 159L190 157L195 153ZM115 28L109 29L111 23ZM420 211L417 216L411 215L417 209ZM533 267L531 261L532 260L538 260ZM855 55L859 57L851 63ZM554 117L563 112L563 126ZM726 107L724 106L726 102L729 106ZM663 268L669 266L670 270ZM21 96L17 97L20 94ZM778 211L774 217L772 212ZM1087 262L1093 268L1087 275L1085 265ZM836 125L848 130L837 134ZM776 138L775 142L774 139ZM606 140L597 140L594 136ZM562 33L557 46L558 31ZM501 112L498 110L509 102ZM762 178L765 173L771 183L763 185ZM159 149L153 145L159 144ZM707 22L701 23L702 17ZM549 161L556 156L557 163ZM1014 260L1015 266L1012 266ZM945 35L945 41L938 41ZM959 6L948 10L951 3ZM208 73L203 68L207 67ZM962 257L964 248L968 250ZM654 181L653 177L659 174L660 179ZM953 287L952 283L956 285ZM36 257L33 261L32 257ZM182 183L182 181L186 181ZM168 54L169 59L165 58ZM740 247L738 242L742 242ZM760 6L762 -2L767 -1L770 7ZM471 -5L471 -2L468 -1ZM552 155L553 144L558 143ZM615 17L621 6L622 16ZM170 181L168 189L166 177ZM794 284L796 290L792 289L790 287ZM502 40L490 42L494 34ZM318 11L316 14L316 9ZM1090 93L1087 98L1081 93ZM105 285L94 283L101 276L106 279ZM1125 141L1135 142L1124 145ZM677 181L688 179L687 187ZM925 273L918 276L915 271ZM617 174L626 177L617 178ZM854 210L856 203L862 207ZM498 102L496 111L487 101ZM195 146L195 153L187 145ZM319 197L322 198L325 203ZM958 118L952 112L957 109ZM801 240L794 237L799 235ZM587 270L593 264L600 271L593 275ZM220 144L215 141L216 134ZM968 9L972 13L969 17L965 13ZM1065 87L1071 94L1064 97ZM821 48L823 42L826 44L825 47ZM678 52L681 51L682 54ZM1101 290L1105 293L1105 295L1101 293ZM236 190L240 184L243 191ZM312 205L311 199L317 202ZM712 261L717 264L711 262ZM236 285L236 294L231 294L234 284ZM934 129L930 129L930 123L932 125ZM779 276L773 274L776 268ZM663 100L661 100L663 95ZM925 154L921 155L921 152L925 153ZM616 106L617 103L620 103ZM404 16L411 15L408 20L403 20ZM202 57L206 61L207 64L202 63ZM1069 132L1068 123L1074 125ZM982 99L984 96L987 98L985 101ZM678 118L683 118L681 123ZM1062 148L1054 148L1056 138L1061 142ZM931 282L931 288L927 287ZM58 264L67 270L59 273ZM242 190L239 185L248 184ZM846 187L842 186L843 183L846 185ZM1053 295L1044 297L1047 291ZM883 157L884 150L889 154ZM666 8L656 8L660 -3ZM282 245L279 246L277 244L281 243ZM926 57L922 58L922 55ZM585 138L583 140L582 135L585 136ZM733 2L726 6L725 -4L730 -3ZM636 231L640 233L635 233ZM681 266L681 263L686 263L685 265ZM77 2L77 -4L79 -4L81 1ZM120 189L117 197L115 186ZM435 115L439 109L441 116ZM235 168L233 175L226 167ZM951 161L947 163L945 160L949 158ZM585 103L592 105L592 113ZM863 268L861 267L862 264ZM840 283L841 280L844 281ZM339 268L340 273L333 272L335 267ZM221 52L230 53L218 56ZM829 192L826 198L823 195ZM581 288L580 280L587 283L585 289ZM339 118L344 117L341 124ZM841 246L833 242L843 240ZM689 -8L694 -4L688 -2ZM48 106L45 99L51 99L52 104ZM1125 219L1125 221L1119 222ZM827 191L824 197L820 192ZM1110 256L1111 249L1116 248L1114 258ZM805 7L809 14L800 9ZM893 27L905 34L902 37L892 36ZM558 300L556 308L552 303L553 301ZM1027 23L1027 19L1031 19L1029 25ZM133 64L130 70L125 65ZM1076 179L1072 187L1067 186ZM312 17L316 11L322 13L320 21ZM13 267L10 267L6 263ZM694 246L691 241L695 241ZM13 124L9 116L17 116ZM610 98L611 93L615 98ZM1090 96L1097 100L1092 104ZM54 37L56 28L60 31L59 37ZM818 85L820 92L809 92ZM460 222L466 225L459 225ZM447 83L446 97L441 93ZM42 175L42 180L38 177ZM43 184L48 187L42 189L41 185ZM106 141L108 135L116 140ZM511 2L508 2L509 -2ZM348 14L357 10L358 17ZM49 87L42 80L50 78ZM656 270L655 268L658 266L660 270ZM812 40L813 47L810 45L806 43ZM678 14L684 9L686 18ZM505 131L502 128L505 127ZM238 25L242 26L238 29ZM500 287L507 285L508 290L504 292ZM1039 176L1041 179L1039 181ZM841 265L842 255L852 260L848 266ZM152 116L144 119L146 107ZM843 227L847 227L847 232ZM349 288L347 292L347 287ZM931 287L940 290L929 297L928 287ZM1092 74L1096 75L1097 80ZM718 -3L723 -1L719 4ZM944 156L938 156L946 150ZM-3 165L1 165L1 170ZM1127 301L1125 308L1121 304L1124 296ZM1105 5L1106 3L1114 6L1105 13ZM570 275L571 273L574 275ZM867 89L870 84L874 84ZM390 96L391 90L395 96ZM1108 156L1105 163L1101 155ZM1110 208L1113 213L1105 210ZM305 301L302 297L304 294ZM973 224L965 226L965 221L972 220ZM107 152L109 143L111 147ZM26 122L12 122L21 114ZM676 211L677 213L673 218ZM790 265L793 263L796 267L791 269ZM629 88L632 87L632 90L629 91ZM1026 268L1032 271L1030 276L1025 274ZM1049 183L1048 188L1044 185ZM502 164L506 160L507 163ZM442 49L443 53L438 52ZM832 88L835 89L836 94ZM618 34L614 36L615 33ZM459 222L462 226L459 226ZM471 177L475 179L473 182L469 179ZM299 70L304 73L299 72ZM459 230L470 237L463 238ZM571 160L568 153L576 159ZM-8 105L-4 100L-1 105ZM408 83L410 81L414 82L413 84ZM1035 66L1040 67L1035 71ZM192 251L186 245L195 247ZM326 178L323 166L330 172ZM431 66L434 61L436 65ZM978 34L982 37L981 41ZM368 169L363 165L373 164ZM665 248L659 245L665 245ZM81 287L82 296L73 288ZM458 115L465 118L458 126ZM1000 237L998 233L1009 231ZM128 192L122 190L125 182L130 191ZM1089 59L1094 55L1095 58ZM1079 283L1079 278L1083 280ZM790 56L793 63L791 63ZM508 250L504 243L512 245ZM588 232L595 233L595 235ZM319 185L313 183L319 177ZM458 69L464 73L460 78L456 77ZM1087 26L1089 18L1093 21ZM128 41L132 46L120 49ZM705 98L705 107L700 96ZM390 179L394 180L394 182ZM828 19L835 21L835 25L829 24ZM515 152L521 152L520 160L514 159ZM867 47L869 56L859 50ZM827 52L831 46L838 50L833 55ZM753 126L744 135L740 125ZM384 41L389 40L388 46ZM803 286L801 291L792 286ZM1108 255L1110 254L1107 268ZM718 284L718 277L724 279L722 286ZM54 59L57 54L61 58L59 60ZM192 148L189 153L187 151ZM190 154L189 142L193 144ZM362 204L358 211L351 208L356 199ZM467 258L471 259L467 264ZM804 25L807 24L810 31ZM41 269L44 268L48 271L45 275ZM1052 20L1055 24L1050 33L1045 24ZM454 152L451 153L454 148ZM467 190L458 190L463 181ZM2 127L-5 134L-2 125ZM940 105L940 99L947 103ZM204 29L203 24L208 24ZM957 287L965 284L960 289ZM946 215L953 210L950 218ZM428 96L424 97L423 93L428 92ZM90 171L94 166L96 178ZM710 204L703 207L706 198ZM787 168L795 179L783 181ZM752 177L752 183L742 182L749 176ZM672 130L666 130L671 124ZM1130 126L1126 120L1134 120ZM666 111L657 114L652 109ZM1037 218L1039 216L1037 222ZM201 67L202 60L210 61L208 68ZM1095 125L1097 132L1089 130ZM1024 70L1028 74L1023 79ZM806 223L814 222L808 231ZM806 150L812 153L809 160L803 158ZM601 242L605 239L605 249L602 250ZM660 39L657 43L654 38ZM931 54L923 61L916 54ZM179 303L175 306L169 301ZM662 228L661 223L669 226ZM102 147L114 144L108 150ZM1102 181L1093 179L1102 177ZM307 155L294 159L296 152ZM286 138L297 139L294 145ZM1051 280L1050 277L1054 275L1055 279ZM258 180L254 175L260 177ZM638 232L639 228L646 230ZM51 176L45 177L47 172L49 172ZM333 223L333 219L336 224ZM196 53L201 56L196 55ZM840 187L838 191L834 190L838 185ZM522 300L514 303L515 294ZM830 301L819 300L826 295ZM940 36L944 43L938 43L937 34ZM1073 226L1080 234L1074 233ZM354 297L355 292L358 297ZM814 156L819 154L820 158ZM569 0L573 -1L572 5L570 3ZM117 136L110 133L114 130ZM680 194L691 188L686 196ZM920 288L914 287L916 282L920 282ZM12 66L10 67L9 63L9 62ZM436 109L433 102L441 103ZM18 103L19 100L22 102ZM361 21L356 16L363 16ZM470 84L469 82L472 77ZM1057 61L1056 59L1060 57ZM7 174L4 177L2 173ZM938 297L937 290L941 297ZM807 9L806 11L803 19ZM147 95L153 92L154 99L147 100ZM1025 204L1019 207L1019 203ZM103 34L103 30L105 32ZM610 192L599 189L601 186ZM665 21L675 16L671 29ZM589 278L585 279L588 275ZM100 16L103 19L95 21ZM730 75L732 78L729 79ZM93 3L88 -6L98 -5ZM677 184L679 178L678 186ZM3 21L3 14L6 18ZM664 12L658 12L662 8ZM354 50L357 51L353 60ZM1017 222L1011 221L1018 212ZM183 35L185 44L177 42L177 38ZM858 30L866 24L869 36ZM224 150L223 156L220 152ZM56 50L52 43L55 42ZM1127 213L1119 213L1123 205L1129 210ZM212 266L208 264L211 257ZM924 76L931 78L923 79ZM222 228L214 235L218 220ZM519 231L524 225L529 231ZM315 277L318 277L315 279ZM849 84L850 87L843 88L843 85ZM903 137L893 138L896 129ZM403 192L397 189L409 183ZM229 120L235 118L230 123ZM200 305L200 302L206 304L203 308ZM71 149L80 148L81 153L75 156ZM195 87L202 81L203 84ZM70 131L72 126L73 130ZM9 27L12 33L5 31ZM970 58L973 60L972 63L968 63ZM70 166L73 157L78 163ZM219 155L221 158L217 158ZM13 135L17 138L8 141L8 134ZM29 218L27 215L31 218ZM1025 228L1029 225L1029 230ZM509 94L503 95L503 91ZM298 257L292 253L304 250ZM429 113L427 114L425 111L429 109ZM515 12L514 6L520 7ZM1086 178L1080 181L1080 179L1082 177ZM1137 288L1132 297L1129 294ZM144 25L146 30L141 33L139 27ZM922 64L916 64L922 60ZM980 195L993 193L987 205ZM1019 245L1009 244L1011 237ZM696 288L702 282L708 288L701 292ZM1108 87L1111 84L1116 89ZM27 285L24 280L32 277L35 283ZM534 231L533 235L527 232L530 229ZM850 1L842 -2L851 -7ZM27 39L27 36L31 41ZM1074 160L1080 160L1079 162L1074 161ZM629 146L626 142L633 143ZM366 106L365 99L369 101ZM1109 263L1120 259L1113 268ZM38 92L45 87L46 96ZM1123 263L1125 268L1116 269ZM1112 166L1110 163L1113 159ZM311 257L317 258L317 259ZM1127 187L1131 184L1130 189ZM195 96L188 97L186 94L191 90ZM815 192L818 199L811 200ZM1044 83L1051 84L1044 88ZM600 275L595 274L596 271ZM325 277L320 266L326 261L333 267ZM494 70L488 71L490 68ZM590 250L594 241L593 253ZM156 126L162 129L158 132L154 126ZM476 148L477 142L480 146ZM541 129L535 137L532 131ZM1115 196L1119 198L1116 198ZM671 224L661 220L668 217ZM471 114L473 112L476 115L474 116ZM809 272L813 270L817 274L814 276ZM699 272L701 268L702 274ZM187 83L189 92L181 91L180 82ZM743 61L745 51L748 55ZM930 106L932 96L941 102L939 105ZM88 300L85 301L84 296L89 297ZM284 68L284 72L280 69ZM168 121L167 123L163 121ZM627 260L619 257L627 257ZM2 287L4 294L-3 295ZM1062 106L1064 110L1057 113ZM668 250L670 253L665 252ZM291 132L288 128L290 125L295 128ZM546 5L544 1L548 2ZM586 65L585 71L577 71ZM843 14L845 22L839 18ZM881 182L879 187L875 190L873 181ZM977 22L976 24L973 22L976 19ZM0 167L0 172L-5 171L-5 169ZM362 276L356 280L352 277ZM184 209L182 213L174 212ZM780 138L777 136L782 134L782 136ZM652 233L650 230L656 231L655 232ZM884 71L879 75L877 70ZM578 179L586 179L585 184L578 183ZM822 119L823 117L825 117L826 120ZM969 108L970 110L966 111ZM146 174L148 168L151 174ZM508 35L515 33L516 35L510 41ZM397 93L389 93L392 86ZM150 33L143 37L140 30ZM793 20L792 30L790 27ZM1112 10L1109 17L1106 10ZM567 98L569 106L563 103ZM314 233L314 240L311 234ZM349 66L342 70L341 62ZM140 218L148 213L144 221ZM775 287L774 281L778 280L779 286ZM169 264L167 265L166 261ZM113 12L112 9L116 10ZM221 131L225 129L226 133ZM152 34L150 31L154 33ZM935 130L932 136L930 135L930 131ZM576 63L581 65L577 69L576 68ZM1109 113L1115 115L1113 117L1110 118ZM803 260L806 263L801 265ZM535 282L545 285L544 289ZM149 177L151 184L149 183L147 181ZM694 167L700 170L694 172ZM390 116L386 115L386 111L391 110ZM551 89L547 96L543 88ZM856 2L850 8L847 1ZM796 101L789 92L798 92ZM1125 250L1125 252L1120 252ZM93 158L94 162L88 163L89 158ZM907 265L902 256L911 252ZM85 188L76 187L78 184ZM407 145L417 148L414 152L403 150ZM14 93L13 91L22 91ZM112 186L113 182L118 184ZM648 103L641 106L641 102ZM416 124L412 118L418 113ZM316 213L317 217L311 216L312 214ZM479 19L480 23L474 22ZM807 37L806 42L800 41L799 34ZM252 8L259 18L250 17ZM913 39L913 41L910 35ZM1124 11L1118 2L1124 1ZM550 208L543 212L544 200ZM705 252L702 248L709 249ZM394 91L390 87L398 88ZM851 280L853 278L857 282L854 282ZM919 53L923 53L918 59ZM356 171L353 172L352 170L355 169ZM199 268L203 276L197 275ZM203 71L202 75L198 72ZM495 154L492 148L499 153ZM910 161L913 169L908 170ZM388 40L383 33L391 33ZM828 279L825 286L823 278ZM673 252L671 244L675 248ZM1124 1L1126 7L1122 7ZM689 19L690 21L683 17ZM927 237L920 248L915 237ZM287 109L282 106L287 104ZM536 130L530 123L538 118L541 126ZM709 28L715 33L711 37ZM452 46L450 39L457 39ZM464 272L468 268L471 271ZM657 208L656 212L655 207ZM370 145L369 138L376 143ZM403 53L400 59L396 54ZM297 212L298 220L287 218L294 213ZM75 7L75 -1L82 2ZM483 218L487 221L484 222ZM413 154L408 147L413 142ZM699 11L693 16L688 11L696 5ZM736 113L736 124L732 122L731 115ZM1087 165L1087 161L1091 164ZM692 86L696 80L700 81ZM768 148L760 141L767 141ZM886 125L892 121L888 129ZM176 268L181 271L176 271ZM958 240L952 239L954 234L959 235ZM1046 157L1037 155L1045 151ZM496 116L496 123L488 120ZM1073 21L1067 22L1074 16ZM1054 46L1050 43L1052 39L1059 43ZM596 109L592 107L591 105L599 105ZM845 84L840 92L838 83ZM61 119L59 119L57 115ZM1023 171L1020 163L1025 163ZM523 88L528 86L523 92ZM595 240L596 242L594 244ZM222 214L226 213L225 218ZM934 22L931 16L940 16ZM189 16L190 22L188 21ZM682 15L678 17L677 15ZM922 136L926 138L920 145ZM82 34L79 28L86 28L87 36ZM452 124L451 118L455 120ZM647 218L650 214L651 219ZM947 93L951 91L952 92L948 95ZM531 68L531 65L535 66ZM478 264L477 259L490 258ZM976 268L984 259L982 270ZM304 157L303 166L292 163L292 158ZM797 74L803 80L801 83L794 85ZM798 130L805 126L801 140ZM399 237L400 250L395 251ZM707 238L706 230L709 237ZM1069 232L1058 238L1060 231ZM1136 151L1134 154L1129 155L1130 149ZM986 177L989 182L983 178ZM439 297L442 288L450 293ZM704 59L708 52L709 58ZM1033 105L1037 110L1024 108ZM288 17L298 17L293 22ZM611 139L612 139L614 142L612 144ZM543 185L545 181L549 181L548 186ZM301 289L305 286L304 291ZM884 157L876 153L885 149ZM349 154L354 153L354 156L350 160ZM1096 165L1089 158L1092 157ZM690 51L688 50L690 47ZM939 209L947 202L948 212ZM881 38L880 30L882 30L883 36ZM586 188L592 189L589 194L585 193ZM381 64L382 64L381 68ZM1118 240L1112 245L1114 239ZM1101 283L1100 287L1091 283L1095 275ZM524 194L521 192L525 190ZM787 136L794 141L793 142L787 143ZM288 51L295 58L291 62L286 54ZM889 66L890 76L885 76ZM246 73L237 70L239 66ZM495 128L493 121L498 122ZM766 244L768 244L763 248ZM412 -1L407 -3L409 -6L413 -4ZM822 198L817 196L820 195ZM846 280L843 282L842 278L844 275ZM158 226L160 229L155 228ZM528 52L536 48L535 52ZM300 87L295 90L295 81ZM460 107L457 99L459 97L465 104ZM780 215L782 211L788 213L783 219ZM579 242L579 246L578 246L577 242ZM132 183L138 183L133 186ZM612 68L609 71L606 73L605 66ZM513 217L508 213L517 214ZM319 0L319 -5L324 -3L324 0ZM479 191L475 192L470 184L477 182ZM575 233L566 237L568 226ZM1015 217L1016 214L1019 218ZM311 87L304 87L307 81ZM12 244L22 247L19 253L10 250ZM605 101L599 97L608 97ZM1059 108L1061 105L1062 110ZM1075 274L1070 273L1074 269ZM34 179L38 183L35 183ZM1055 15L1053 14L1054 10ZM162 212L159 204L169 208ZM1058 49L1057 62L1048 55ZM508 191L504 195L502 191ZM976 240L971 247L967 243ZM636 165L632 161L638 163ZM456 240L465 240L468 247L459 248ZM448 257L445 254L449 253ZM911 285L905 286L913 278ZM1011 65L1005 72L1002 67ZM701 186L699 190L692 184ZM72 5L73 0L81 4ZM990 249L998 247L997 253ZM50 92L56 85L61 87ZM1133 111L1128 110L1128 108L1133 105ZM965 0L968 6L961 5ZM214 81L208 71L217 71ZM800 26L798 24L801 23ZM546 155L549 156L545 157ZM1014 202L1008 200L1011 196ZM205 189L201 186L203 185ZM39 152L44 157L43 163L37 163ZM993 39L995 46L988 48ZM888 116L886 121L881 116ZM885 122L878 135L873 130ZM692 217L700 214L697 220ZM197 243L192 246L192 240L195 240ZM326 3L334 -5L331 4ZM54 68L57 58L63 62ZM658 297L660 301L654 301ZM298 286L304 288L295 293ZM273 244L279 252L274 254ZM500 233L497 225L503 223ZM998 27L998 34L993 34ZM874 95L871 96L872 92ZM213 137L221 148L210 145ZM924 177L919 166L926 169ZM516 230L512 228L516 227ZM1104 269L1103 270L1099 272ZM425 59L431 66L416 64ZM593 272L601 278L590 282ZM492 92L502 90L502 96ZM412 7L408 9L408 5ZM646 216L648 212L655 222ZM363 39L372 28L375 32ZM362 64L360 60L364 60ZM325 189L329 192L325 195ZM456 114L461 121L452 127L448 120ZM1064 79L1059 77L1062 73L1068 73ZM128 32L119 28L125 19ZM50 91L52 96L49 98ZM1069 26L1062 24L1066 18ZM972 249L973 253L970 252ZM627 163L627 156L636 154ZM385 41L393 39L389 45ZM896 53L899 54L895 57ZM232 79L229 85L225 78L227 77ZM393 103L386 97L389 92L395 95ZM849 191L850 194L842 194ZM650 241L649 239L654 240ZM825 144L830 148L823 153L821 149ZM477 74L469 76L470 68ZM376 115L376 120L371 122L367 118ZM509 262L503 259L501 256L511 257ZM1029 240L1028 230L1034 232L1039 234ZM156 122L157 124L152 123ZM303 168L307 165L306 171ZM383 65L380 68L378 60ZM661 68L663 70L657 77ZM940 155L939 159L936 156ZM783 156L782 157L777 153L782 149ZM508 201L499 197L505 189ZM340 149L335 152L335 140L338 142ZM1008 83L1010 77L1013 77ZM135 98L128 93L138 98ZM765 39L758 40L763 32ZM806 197L806 200L796 204ZM995 229L1002 222L1006 232ZM610 253L615 261L606 262L601 257ZM325 19L325 17L329 15L331 18ZM577 254L564 256L574 249ZM443 174L443 167L452 171ZM301 155L303 157L299 156ZM708 27L707 29L703 28ZM476 287L477 282L484 288ZM844 198L834 210L841 199ZM273 113L269 111L274 108L275 111ZM441 87L445 93L440 96ZM287 270L280 268L278 263L287 263ZM124 18L116 24L112 15ZM706 178L714 176L712 181ZM411 137L410 143L408 138ZM514 60L518 55L519 61ZM960 86L955 88L951 81L957 75ZM871 176L878 180L875 185L869 182ZM619 301L619 308L612 305ZM66 73L67 85L61 86ZM692 224L698 222L696 230ZM239 -1L243 0L242 5ZM205 261L201 267L202 261ZM485 18L494 16L489 23ZM525 23L526 30L521 26ZM438 27L432 31L432 18ZM661 28L661 37L657 36ZM660 36L668 34L669 37L666 45ZM551 113L551 104L556 107ZM755 145L750 140L753 140ZM31 208L33 204L44 208ZM616 136L628 137L617 146ZM811 241L815 234L820 241ZM112 209L101 207L109 202ZM487 118L472 117L477 112ZM943 149L942 154L939 152ZM393 247L389 256L381 251L380 248ZM523 229L527 225L526 231ZM874 232L882 235L880 239L873 240ZM515 79L514 77L522 72L523 82ZM1009 248L1014 251L1012 257ZM68 138L69 133L78 136ZM983 40L980 38L982 34L984 36ZM381 174L382 176L378 178L380 172ZM384 62L393 71L385 74ZM209 201L210 197L215 200L214 200ZM961 219L955 221L955 215L959 217ZM984 100L980 108L981 98ZM596 59L593 59L590 57L594 53ZM202 177L198 179L198 174ZM869 59L869 54L875 58ZM903 12L897 8L902 4ZM95 216L100 223L94 220ZM564 91L559 91L562 82ZM1051 265L1057 263L1058 269L1056 271ZM906 11L902 7L909 5ZM351 159L353 157L358 159L357 161ZM478 171L473 164L478 163ZM309 253L310 246L312 249ZM66 142L60 151L51 141ZM939 137L933 128L939 129ZM1053 32L1048 27L1051 22ZM1044 27L1037 23L1038 20ZM465 273L464 275L461 275L463 271ZM321 286L322 292L318 291ZM979 197L968 201L970 195ZM303 119L300 115L306 118ZM265 216L271 212L279 221L267 224ZM28 275L28 270L34 269ZM293 10L285 11L289 8ZM1011 250L1006 244L1015 245ZM584 146L589 149L587 154ZM885 276L887 277L886 280ZM515 127L511 128L511 125ZM669 81L665 82L662 75L671 76ZM784 276L786 288L779 278ZM490 226L479 230L479 221ZM1014 251L1020 245L1023 251L1018 257ZM843 80L845 86L840 87L838 82ZM2 148L-3 143L3 138ZM173 24L175 17L180 14ZM846 117L841 113L844 110L847 110ZM1093 21L1098 21L1098 26ZM444 12L441 18L440 10ZM314 76L316 72L321 74L318 78ZM932 137L922 141L918 136ZM841 118L844 114L844 121ZM1115 256L1112 259L1114 253ZM1103 298L1109 287L1113 293ZM763 232L766 234L761 235ZM747 51L752 58L747 63L744 58ZM716 286L715 287L714 284ZM879 199L870 208L868 202ZM632 209L635 205L643 210L638 214ZM468 29L470 21L473 29ZM479 141L486 135L484 144ZM490 4L494 -4L499 4L492 9ZM400 88L407 86L402 90ZM236 163L245 156L249 163ZM568 112L570 118L563 115ZM1033 226L1038 223L1036 229ZM228 148L220 148L226 143ZM213 129L221 124L220 138L212 133ZM348 265L342 262L348 256L350 261ZM447 238L451 236L451 239ZM670 102L678 92L682 106ZM14 186L18 194L10 192ZM1093 268L1096 273L1085 278L1080 272ZM791 225L784 225L790 221ZM547 151L543 153L544 148ZM896 175L891 179L890 174ZM1131 46L1131 41L1134 42ZM256 84L245 78L259 74ZM752 158L751 163L750 163ZM473 164L468 159L476 159L476 162ZM908 42L902 39L905 35ZM528 141L531 144L530 145ZM1011 39L1005 38L1008 33L1011 33ZM316 262L315 258L319 259ZM121 160L116 154L121 153ZM921 135L927 134L926 137ZM440 281L446 288L446 293L435 292ZM829 14L833 4L837 17ZM408 229L413 228L414 231L408 230ZM552 259L554 252L557 259ZM344 125L342 120L345 119ZM-5 297L-6 294L-4 292L-2 296ZM40 270L46 264L50 272ZM961 238L960 240L957 241ZM873 65L863 59L869 59ZM503 242L497 244L500 238ZM271 178L270 182L265 185L266 174ZM1010 80L1010 86L1005 84L1007 81ZM452 248L448 253L442 249ZM1040 225L1037 231L1034 227ZM909 19L913 18L914 23L911 24ZM450 276L453 268L458 270L457 277ZM1080 233L1081 236L1078 237ZM511 234L513 229L514 233ZM418 72L411 64L418 64ZM785 299L790 295L793 298ZM396 225L388 234L390 221ZM852 259L850 259L851 254L854 256ZM475 128L474 123L479 115L486 119ZM136 229L140 230L139 233ZM462 121L450 123L454 117ZM821 300L826 297L823 305ZM979 121L980 117L983 121ZM187 131L194 136L190 140ZM596 150L602 143L598 153ZM707 79L706 71L713 74ZM1091 281L1089 277L1092 280ZM939 121L941 123L940 127L937 128ZM831 137L840 136L838 145ZM435 36L430 37L432 34ZM280 184L283 181L285 183ZM676 235L668 237L671 230ZM893 131L896 131L896 138L889 137ZM516 126L518 126L519 132L512 131ZM639 154L633 149L638 145ZM741 23L742 22L744 22L743 26ZM190 301L183 300L185 296L191 298ZM1011 191L1003 193L1004 189L1011 189ZM502 46L504 51L497 53L496 50ZM1135 50L1127 50L1128 45L1133 46ZM365 166L365 170L362 170ZM285 93L273 97L282 91ZM1125 288L1119 286L1120 284ZM604 211L597 214L600 204ZM414 232L418 237L407 238ZM1005 221L1002 227L1000 225ZM769 220L763 220L767 217ZM831 225L838 228L837 233L829 233ZM357 5L355 7L352 4L355 1ZM971 112L960 113L961 106L972 107ZM207 16L207 11L213 12ZM412 80L416 80L417 83L413 84ZM227 109L224 114L220 114L221 108ZM811 7L821 4L816 14ZM675 57L679 59L676 60ZM14 113L18 110L15 114ZM168 42L166 40L168 37ZM822 192L826 192L827 201L821 202ZM959 -3L960 -6L964 -5L962 -1ZM385 111L389 112L385 118L383 118ZM114 23L117 22L120 24ZM292 203L297 213L291 213ZM20 67L24 65L25 67ZM819 21L812 18L818 16ZM38 140L38 139L43 139ZM355 80L352 78L358 77ZM880 289L871 287L880 283ZM1128 88L1124 92L1122 92L1121 89ZM1093 183L1093 175L1097 176L1101 183ZM443 168L435 171L430 165ZM319 216L327 212L326 218L322 220ZM1046 209L1039 203L1051 199ZM532 69L536 60L538 68ZM77 117L86 116L86 122ZM1009 129L1012 125L1017 132L1011 135ZM121 285L119 289L112 284ZM492 107L489 117L482 109ZM920 189L923 197L916 189ZM538 22L535 16L540 18ZM244 285L254 286L251 288ZM307 168L311 174L303 171ZM321 278L329 270L325 282ZM656 50L648 47L659 41ZM791 244L786 249L783 248L788 243ZM568 234L571 237L568 236ZM11 194L9 189L13 188ZM56 54L62 48L63 50ZM132 183L137 189L132 194ZM349 138L352 139L354 146L345 145ZM386 189L398 186L393 198ZM284 199L282 189L289 192ZM1028 126L1028 125L1033 124L1031 126ZM171 55L175 56L175 59L171 58ZM665 287L673 280L678 282L667 289ZM634 246L627 246L628 235ZM836 210L838 216L835 215ZM1022 79L1024 88L1012 83L1019 75ZM796 197L799 204L796 203L792 199ZM289 231L289 228L299 229L299 236ZM813 18L811 10L815 8L818 11ZM585 103L575 100L585 96ZM950 246L951 248L948 251ZM746 21L747 31L741 21ZM717 74L722 67L729 69L725 78ZM661 122L664 129L653 130L653 122ZM920 221L911 221L912 219L918 219ZM510 130L505 127L509 125ZM753 39L754 38L758 43L757 44ZM136 123L141 123L138 131ZM739 90L733 86L738 80L745 81ZM350 74L352 65L362 67ZM547 247L545 258L541 256ZM937 89L937 85L939 84L940 89ZM264 171L259 177L252 171ZM11 8L7 11L1 8L9 -2ZM856 66L856 62L864 66ZM989 165L989 170L987 166ZM29 57L27 54L30 50ZM189 191L191 192L194 194L189 196ZM183 218L186 218L185 223ZM794 55L790 63L785 56L792 51ZM535 58L538 57L541 59L538 64ZM1082 8L1076 5L1081 3ZM51 190L46 190L53 187ZM187 290L184 286L191 285ZM845 92L852 90L847 99L843 93ZM330 85L329 77L334 80ZM475 161L466 166L473 156ZM905 98L913 98L908 103ZM707 181L701 184L702 178ZM165 40L170 44L167 47ZM112 236L115 234L117 240L112 240ZM420 117L426 120L419 122ZM990 134L993 136L989 140ZM881 295L871 298L878 290ZM395 73L396 79L392 75ZM622 228L619 224L623 223ZM596 152L597 148L601 149ZM672 27L670 21L676 24ZM586 240L582 238L588 235ZM469 8L464 14L464 9ZM700 16L703 8L708 15L703 19ZM905 245L901 246L891 240L899 235ZM218 42L207 41L212 34ZM447 201L450 206L444 202ZM753 161L756 158L762 166L750 166ZM714 257L718 261L711 265L708 265ZM1124 55L1127 57L1124 62ZM516 -4L516 -1L513 -3ZM354 22L354 29L348 31ZM1039 117L1040 118L1035 120L1036 118ZM487 14L492 18L489 23L484 21ZM1058 262L1054 258L1057 258ZM279 43L284 45L280 49ZM951 260L952 256L955 261ZM1029 304L1026 306L1029 297ZM799 112L806 113L803 116ZM1019 255L1022 251L1031 255L1030 260ZM841 116L846 117L842 125L840 124ZM200 98L196 101L192 99L196 95ZM953 156L958 153L957 159ZM244 267L239 270L237 266ZM1061 57L1064 58L1066 64L1060 66ZM1066 178L1077 181L1074 185ZM526 235L521 240L518 236ZM991 91L1000 93L999 96ZM296 133L295 130L299 126L301 128ZM731 20L732 13L735 18ZM1101 230L1102 232L1098 241L1090 234ZM416 129L409 124L415 118ZM1016 305L1016 307L1013 304L1015 302ZM412 8L415 1L421 11ZM581 16L577 18L577 13ZM876 67L881 72L875 76ZM358 265L354 269L353 260ZM142 108L147 107L150 115ZM739 84L739 89L735 86ZM215 217L218 219L216 223ZM645 294L654 297L647 298ZM609 64L611 70L607 72ZM910 281L913 280L913 284ZM104 33L106 32L111 36L105 40ZM555 76L563 72L564 82ZM257 268L264 273L257 276L255 273ZM37 186L30 192L29 177ZM386 69L390 77L379 77ZM955 34L958 36L951 37ZM830 192L835 202L829 202ZM1045 162L1054 167L1044 167ZM398 59L401 52L403 53L403 59ZM45 21L42 24L38 18L42 18ZM771 169L771 165L779 166ZM219 158L217 163L213 157ZM511 300L515 303L514 305L509 303ZM1083 303L1076 303L1077 289ZM905 204L910 200L912 203ZM908 101L907 92L919 98ZM428 126L431 123L434 128L427 131ZM757 -5L760 -4L760 1L757 2ZM86 79L83 76L86 71ZM540 121L542 122L540 125ZM678 17L676 9L683 12ZM443 261L447 259L447 266ZM379 260L389 256L385 263ZM539 133L541 125L547 127L545 135ZM31 287L24 288L24 286ZM456 32L460 36L452 36L453 34ZM673 274L671 275L669 273ZM665 237L661 230L666 232ZM771 34L776 35L776 37L772 37ZM323 299L323 307L317 301ZM318 282L322 284L319 289ZM181 257L189 255L189 262ZM96 154L92 157L88 147ZM531 84L536 88L528 86ZM709 237L707 233L710 232ZM447 294L447 300L443 299L440 296ZM470 301L466 305L464 300ZM126 75L125 78L121 77L123 73ZM290 158L293 151L299 156ZM1013 56L1018 55L1015 57ZM116 209L120 216L112 222L107 213ZM87 54L88 49L97 53ZM384 59L383 63L381 60ZM339 20L337 16L342 17ZM298 240L297 238L299 237L300 240ZM383 157L384 147L390 150ZM118 15L116 10L118 9ZM855 64L860 69L856 71ZM845 245L851 240L852 246ZM501 268L507 269L504 281ZM180 137L174 134L176 131ZM85 120L82 129L79 123ZM35 124L32 127L31 118L37 118ZM312 115L313 123L308 117ZM1037 296L1034 300L1029 297L1032 293ZM585 -1L579 13L578 2ZM374 56L371 60L372 57ZM803 26L805 23L807 26ZM856 109L854 107L856 105ZM1 53L-2 47L5 47ZM61 272L62 268L68 269ZM869 212L871 210L874 213L870 217ZM856 194L849 189L858 192ZM595 32L594 34L589 35L590 31ZM163 248L160 249L165 245ZM579 61L582 65L573 65ZM624 46L628 49L626 50L624 49ZM200 85L201 91L194 85ZM717 0L719 6L715 6L713 2ZM1027 25L1030 21L1032 23ZM510 141L514 132L514 137ZM610 83L607 84L607 79ZM740 229L736 225L743 220L750 224ZM495 10L496 3L501 5L502 9ZM704 121L703 117L708 117ZM1077 40L1075 44L1071 43L1075 38ZM291 4L287 -4L290 -6L298 -1ZM563 228L569 220L571 228ZM896 101L908 105L899 106ZM1135 145L1129 154L1125 147L1126 142ZM856 78L853 74L855 73ZM791 276L796 286L785 285ZM883 102L882 95L887 96ZM342 126L332 133L332 125ZM457 78L460 81L455 83L454 80ZM1047 63L1043 67L1044 62ZM633 199L630 196L637 195ZM734 120L728 115L733 112ZM865 180L861 178L862 174ZM1070 21L1087 23L1076 27ZM706 -6L716 -3L709 2ZM1127 154L1130 155L1126 161ZM44 109L45 102L51 104L51 108ZM1072 306L1071 304L1074 300L1077 305ZM749 209L746 219L744 209ZM972 285L974 281L977 283ZM262 293L266 295L258 298ZM177 98L176 89L182 88L180 98ZM431 191L426 194L430 190ZM905 273L896 278L891 275L894 266ZM545 276L546 264L549 274ZM805 113L809 104L811 113ZM3 246L4 242L5 247ZM949 198L954 198L954 201ZM460 128L454 125L460 119ZM433 80L426 85L423 78L426 72ZM161 266L163 266L164 270ZM714 11L709 6L719 7ZM467 136L455 137L465 132ZM964 111L976 105L967 115ZM85 286L78 282L86 278ZM430 -6L436 1L429 -1ZM732 208L739 210L734 215ZM888 201L884 200L886 196ZM86 194L89 196L84 198ZM142 228L138 241L136 232ZM172 78L162 69L172 72ZM767 126L765 121L770 124ZM505 8L501 17L499 7ZM1056 238L1061 239L1058 240ZM754 112L760 107L756 116ZM1043 62L1041 66L1037 66L1037 62ZM918 112L914 124L908 116L910 114ZM473 131L471 121L478 122ZM311 32L304 39L298 30L305 28ZM866 290L868 291L868 297ZM437 74L430 79L431 66ZM606 233L608 235L603 237ZM74 163L73 167L71 165L71 163ZM711 159L707 159L711 155ZM195 297L207 296L203 305ZM667 203L670 203L670 206L666 204ZM268 151L258 150L264 142ZM939 276L933 277L936 275ZM164 289L158 288L161 280ZM112 198L108 199L108 196ZM1088 46L1096 44L1096 47ZM655 303L658 295L668 303ZM382 10L384 13L380 15L377 12ZM566 198L570 207L564 208L563 202ZM295 306L295 301L300 301L298 308ZM1035 89L1032 86L1036 85L1037 88ZM472 235L462 233L472 226ZM632 200L636 205L631 210L628 210ZM404 149L397 144L406 142ZM939 128L941 132L937 128ZM652 192L651 194L648 195L648 191ZM792 189L794 192L792 194L789 191ZM1042 40L1046 33L1053 36ZM762 98L766 101L760 103ZM1064 201L1062 200L1064 191ZM199 256L196 250L203 248ZM20 177L23 183L17 184L17 182ZM560 283L565 280L569 282ZM341 60L336 54L345 53ZM569 226L564 222L572 222ZM1109 53L1117 57L1109 64L1107 60ZM666 187L669 182L671 186ZM1073 232L1070 229L1075 227ZM1113 173L1107 166L1114 160L1118 173ZM71 31L66 34L66 27ZM1130 271L1126 265L1133 262ZM130 98L128 97L129 93ZM811 238L806 243L797 238L802 233ZM91 215L92 210L95 213ZM779 270L780 267L787 271ZM220 191L215 191L217 184ZM936 78L940 80L933 81ZM733 29L727 33L724 32L730 28ZM1060 31L1064 31L1062 34ZM346 11L338 5L348 2L354 6ZM963 11L970 7L973 15ZM867 284L860 288L858 280ZM853 155L852 160L847 155ZM842 115L839 117L837 110ZM990 189L986 188L988 185ZM834 152L833 151L833 147ZM628 114L636 122L628 119ZM693 40L683 38L693 32ZM824 222L823 222L821 220ZM627 181L627 176L630 182ZM1099 84L1095 89L1094 85ZM565 152L574 150L575 155ZM1053 111L1059 109L1060 115ZM106 3L109 6L106 8ZM483 42L491 37L489 44ZM144 8L134 14L132 5ZM361 222L351 225L352 215ZM536 278L531 271L537 268ZM308 20L317 25L305 31ZM816 165L825 165L820 171ZM57 210L61 209L62 210L59 212ZM503 100L503 98L506 102ZM711 258L707 258L708 254L712 254ZM529 21L527 19L532 16ZM1079 93L1081 95L1073 100ZM729 158L735 157L738 163ZM571 122L569 116L575 118ZM84 244L81 240L90 236L90 246ZM121 27L119 36L112 31ZM892 262L902 258L900 270ZM1119 86L1116 85L1118 81L1122 85ZM499 278L492 278L496 274L501 276ZM947 103L948 106L944 108ZM409 41L412 40L416 46ZM739 39L736 35L741 33ZM210 76L206 72L209 72ZM866 243L862 241L863 237L867 241ZM416 4L415 -6L422 0ZM752 18L749 15L754 15ZM811 220L823 223L817 227ZM482 261L490 263L489 265ZM1120 191L1116 189L1118 187ZM831 143L835 140L837 150L836 152ZM991 298L989 295L991 294ZM157 121L155 113L161 118ZM602 257L593 260L593 250ZM557 150L551 149L556 138L562 147ZM412 205L409 196L418 201ZM528 100L531 105L525 99ZM1123 225L1121 222L1122 221ZM1086 53L1078 50L1084 48ZM780 278L776 283L772 279ZM565 30L558 31L557 28ZM455 251L449 257L451 244ZM816 241L820 238L821 243ZM874 131L871 133L871 124ZM585 5L580 7L580 0ZM994 0L989 7L988 1ZM189 273L196 267L202 276ZM543 -9L552 -7L538 0ZM579 60L582 65L578 72L572 67ZM145 294L147 301L143 302ZM1020 128L1021 125L1025 127ZM496 86L503 86L504 90L498 91ZM392 105L401 107L398 117ZM762 93L772 91L764 100ZM642 41L635 42L636 39ZM207 212L199 212L201 205L209 205ZM541 1L542 6L532 4ZM736 137L742 134L738 139ZM261 81L256 85L253 75L261 77ZM1052 102L1058 107L1047 109ZM323 114L317 106L329 110ZM361 43L357 39L366 42ZM675 38L680 39L676 41ZM1039 104L1038 107L1035 106L1034 104ZM283 296L286 305L286 307L276 307ZM859 165L861 161L864 165ZM648 234L636 236L645 231ZM659 212L662 217L661 217L659 212ZM586 17L585 23L579 20L582 16ZM628 252L624 254L626 249ZM916 39L919 43L912 48L910 41ZM265 191L267 184L270 190ZM412 111L414 113L403 112ZM814 113L819 118L811 117ZM936 245L939 241L943 246ZM343 149L339 142L347 143ZM847 135L843 141L839 133ZM172 56L170 59L167 54ZM1030 108L1030 103L1035 104L1036 107ZM167 157L177 155L173 163ZM575 54L583 54L584 59L578 58ZM590 131L588 135L585 128L586 129ZM1054 219L1048 223L1054 216ZM101 270L104 272L100 273ZM712 267L719 264L717 269ZM504 93L506 100L499 99ZM840 235L831 244L830 229ZM728 50L731 44L733 49ZM111 293L111 289L113 293ZM120 210L123 215L114 216L116 211ZM856 77L852 80L848 76L853 75ZM657 288L650 295L644 286ZM831 103L831 99L834 101ZM824 52L826 53L829 56L825 59ZM427 196L425 201L420 197L423 192ZM535 -3L542 3L533 5ZM737 42L734 44L733 42L738 41ZM892 38L891 30L895 35ZM691 -6L694 -6L692 1L688 -4ZM961 6L967 8L962 10ZM445 130L448 126L455 129L453 134ZM486 188L485 191L482 190ZM640 85L645 81L645 87ZM667 239L664 240L659 236L664 232ZM370 105L375 111L371 117L363 113ZM669 7L675 11L668 18ZM1042 1L1049 5L1042 10L1037 5ZM196 66L198 61L201 65L198 69ZM6 245L7 249L2 247ZM529 272L535 276L526 279ZM767 35L764 38L768 33ZM986 290L989 295L985 295ZM1054 233L1048 226L1055 220L1058 224ZM476 99L467 103L468 99ZM132 260L130 266L128 260ZM398 180L404 171L407 178ZM765 241L763 237L771 236L770 239ZM345 274L343 270L348 273ZM181 24L186 24L186 29L180 24ZM475 153L475 145L481 156ZM450 69L452 75L443 79L441 71ZM801 238L798 238L798 234ZM892 96L893 90L897 92ZM390 174L385 178L382 175ZM1095 65L1088 68L1088 63L1091 59ZM647 133L652 140L645 139ZM792 124L794 120L800 122L795 126ZM690 163L684 165L681 159L689 155ZM1085 146L1093 138L1097 147L1096 149ZM177 72L182 75L177 77ZM926 208L921 214L918 210ZM1015 144L1026 150L1015 155ZM541 46L536 51L533 42ZM419 116L421 124L413 122ZM995 207L988 206L988 201ZM115 283L114 284L110 283ZM93 -1L97 -2L96 2ZM122 247L128 245L129 251ZM870 69L873 73L865 73L868 67ZM237 94L236 92L240 90ZM1041 78L1047 78L1048 85ZM113 151L99 149L104 146L109 145ZM989 43L994 42L992 45ZM733 45L734 52L728 52ZM426 72L429 68L429 72ZM1010 163L1003 172L1002 160ZM656 106L655 110L652 99ZM680 249L686 253L680 260L673 252ZM580 199L577 202L576 201ZM387 230L393 222L394 229ZM187 3L188 -3L194 -1L194 2ZM271 46L269 40L275 44ZM106 205L101 215L103 203ZM747 76L740 68L748 68ZM527 181L530 170L532 180ZM1054 255L1059 262L1053 266ZM652 55L640 54L646 43L652 46ZM210 61L211 53L219 57ZM871 9L867 -1L880 3ZM635 154L636 151L640 155L639 159ZM623 243L624 234L628 241ZM605 210L600 212L599 208L602 208ZM649 113L646 121L640 122L641 111ZM907 268L903 270L903 264ZM759 10L765 6L763 12ZM574 53L571 61L570 58ZM574 17L569 24L565 16L569 13ZM720 82L720 87L715 86ZM574 195L571 198L564 196L572 190ZM443 196L437 197L440 192ZM701 27L705 35L699 32ZM610 100L617 107L609 104ZM131 238L140 243L137 250L132 251ZM1134 -3L1137 -1L1132 5ZM793 141L797 146L791 147ZM46 21L43 13L46 10L53 15ZM353 262L357 263L355 275ZM1015 195L1016 195L1016 199L1013 196ZM174 3L178 11L170 10L171 6ZM792 126L788 126L793 122ZM1027 247L1026 254L1020 250L1021 246ZM70 277L75 281L70 283ZM65 257L60 258L58 246ZM428 102L427 93L432 101ZM482 37L481 32L490 32ZM910 77L910 73L914 72L915 75ZM202 182L193 185L197 177ZM761 97L761 106L758 99ZM152 24L147 19L157 16ZM491 42L485 43L487 33ZM282 97L278 102L274 95ZM900 227L898 225L899 216L908 220ZM220 97L219 99L215 97L216 94ZM432 153L434 148L436 149ZM1024 42L1016 39L1021 36ZM726 281L730 286L718 287L718 283ZM220 206L222 208L219 211L218 209ZM422 157L418 160L418 151ZM1007 185L999 182L1010 177ZM953 93L946 96L946 93L950 91ZM639 94L636 90L644 84ZM1084 249L1083 257L1079 253L1078 251ZM370 33L364 34L368 29ZM75 199L72 196L73 193L78 196ZM710 136L706 133L708 130ZM428 108L431 111L428 113ZM709 208L709 210L706 207ZM926 49L918 54L922 44ZM409 203L408 200L411 200L411 203ZM709 282L716 292L708 287ZM246 16L250 18L249 20L246 22ZM796 281L800 283L799 287L794 284ZM496 282L494 283L495 279ZM797 283L807 279L805 286ZM1083 238L1078 235L1080 234ZM936 88L934 84L941 84ZM374 85L378 89L372 94L365 90ZM709 229L706 225L711 223ZM39 283L40 275L47 277ZM976 242L969 236L977 234ZM1071 121L1070 125L1062 122ZM906 156L898 163L894 154ZM459 63L458 65L454 62L455 62ZM332 112L334 115L332 120L327 117ZM369 307L362 307L368 295ZM121 53L123 48L125 51L122 55ZM995 47L994 51L989 42ZM63 194L58 201L57 194ZM271 96L265 101L265 95ZM896 261L897 266L892 264ZM645 28L650 33L643 28ZM256 194L254 198L251 197ZM1118 45L1118 43L1125 45ZM255 39L259 28L261 29ZM314 109L318 105L318 109ZM152 163L156 169L151 168ZM766 67L773 58L776 64L773 70ZM35 97L34 93L42 93ZM922 45L914 49L917 43ZM347 51L347 43L352 50ZM1080 215L1080 207L1085 211ZM904 12L917 10L913 21ZM87 2L92 10L84 6ZM1100 109L1100 113L1097 114L1097 108ZM711 32L706 27L716 21ZM783 137L779 149L776 137ZM756 188L756 180L758 181ZM1026 98L1018 98L1021 90L1027 95ZM596 184L599 189L594 192ZM508 213L514 215L507 214ZM764 193L776 189L774 198ZM97 65L91 63L98 58L99 62ZM180 104L181 100L183 107L179 106ZM483 34L479 39L474 34L476 30ZM607 268L602 267L600 262L608 263ZM106 295L108 294L115 296L110 298ZM1071 135L1079 135L1077 139ZM351 197L349 201L350 196ZM564 161L568 166L562 164ZM1079 9L1078 -4L1086 0L1086 6ZM644 90L640 79L645 77ZM31 195L24 198L24 193L30 187ZM1028 245L1031 246L1026 247ZM385 135L383 141L383 134ZM338 207L344 219L337 221ZM768 118L768 129L762 126ZM480 201L483 206L472 204ZM444 309L441 301L451 296L455 302ZM1082 21L1088 16L1087 27ZM237 266L233 270L228 268L234 263ZM974 192L969 183L978 186ZM230 236L229 244L224 238ZM245 256L241 250L244 248ZM912 3L908 -1L918 2ZM986 270L991 270L987 273ZM191 66L182 61L191 56ZM906 218L899 227L894 220L899 213ZM268 67L266 76L260 69ZM1034 35L1030 33L1033 29ZM303 166L310 161L311 167ZM697 150L694 144L703 143L704 148ZM748 104L756 110L744 107ZM1018 51L1012 45L1025 46ZM713 104L720 112L711 113ZM861 64L857 66L857 62ZM418 160L421 159L422 162L419 165ZM106 267L102 268L100 267L103 264ZM877 219L877 206L886 211ZM183 114L178 108L187 102L189 110ZM1127 49L1129 55L1125 52ZM710 23L713 18L714 20ZM717 30L718 25L724 27ZM260 89L258 85L260 84ZM64 218L74 223L61 226ZM121 268L117 270L120 263ZM658 141L664 137L664 142ZM730 137L729 130L734 129L734 134ZM888 275L885 267L888 268ZM252 33L258 21L259 28ZM978 143L972 139L986 139ZM860 129L857 135L850 130L850 124ZM736 255L741 252L737 258ZM46 226L52 226L46 230ZM1073 186L1072 183L1079 182ZM198 286L196 282L200 284ZM11 30L9 30L9 26L14 27ZM973 257L976 254L977 260ZM841 293L842 297L838 297ZM1119 223L1111 218L1117 214ZM381 132L387 131L387 139L382 136ZM389 148L392 157L383 159L383 152ZM977 188L981 192L975 196ZM144 226L150 227L148 234ZM113 236L119 229L123 237ZM436 302L439 301L440 302ZM453 289L456 283L462 286L456 293ZM156 207L164 204L158 210ZM101 138L95 138L94 132L102 134ZM662 248L662 241L668 243ZM176 200L174 193L180 197ZM1100 41L1100 47L1097 48ZM121 103L119 101L123 99ZM563 63L560 67L559 61ZM421 199L423 195L426 200ZM461 125L464 125L459 127ZM241 82L252 82L244 86ZM1030 126L1028 121L1032 120L1032 125ZM793 268L784 264L784 258L799 262ZM448 190L448 184L453 186ZM897 298L903 295L900 303ZM656 38L652 46L645 42ZM541 15L538 11L542 7ZM527 103L537 101L530 105ZM406 152L406 148L411 150ZM682 -4L691 -6L686 0ZM910 190L908 195L902 190ZM96 169L92 172L91 167ZM783 290L784 294L777 294ZM1049 186L1057 191L1052 196L1049 196ZM813 194L818 197L812 197ZM803 166L805 157L809 161ZM534 246L532 244L535 242ZM309 283L308 282L306 278L309 278ZM404 66L408 70L403 72ZM329 307L328 301L336 302ZM399 94L403 88L409 95ZM1110 95L1119 94L1116 100ZM323 33L314 36L320 28ZM120 11L123 14L119 14ZM99 146L109 147L106 157L100 153ZM709 280L703 285L700 280ZM188 273L186 283L183 276ZM204 278L204 288L193 277ZM755 -6L759 7L749 1ZM574 129L572 125L574 123ZM252 291L250 295L244 294L249 287ZM9 105L20 109L10 115ZM1098 11L1104 6L1103 14ZM468 167L462 161L468 159L471 164ZM841 97L839 98L836 92ZM769 105L767 100L772 99ZM938 214L937 223L927 220ZM120 295L124 294L122 299L121 300ZM569 86L566 85L568 83ZM669 265L666 273L665 263ZM1074 80L1072 76L1077 73ZM837 159L836 148L842 147ZM463 19L463 7L469 21ZM409 254L410 257L407 257L405 255ZM143 240L135 232L140 227L146 232ZM390 291L395 300L382 296ZM96 26L93 15L96 17ZM68 209L65 208L68 206ZM34 22L28 15L41 10L43 18ZM220 230L223 231L224 235L219 236ZM735 227L741 224L737 230ZM960 75L953 67L964 62ZM519 62L521 66L517 64ZM624 86L631 86L627 90ZM296 166L289 164L289 160L298 161ZM317 181L326 172L325 183ZM36 54L44 54L38 58ZM337 -4L337 2L332 0ZM1013 267L1018 270L1016 275ZM407 144L414 135L416 142ZM892 71L890 75L888 72ZM19 0L22 -2L23 -1ZM595 103L590 103L595 100ZM503 17L503 28L495 20ZM498 232L503 229L503 234ZM428 147L431 137L433 147ZM887 1L889 5L885 3ZM978 55L982 59L980 63L973 61ZM1088 133L1090 130L1090 135ZM1129 156L1130 162L1125 160ZM282 74L282 73L285 70ZM277 103L276 97L278 93L284 104ZM1058 229L1051 231L1050 224ZM35 43L32 41L35 36L37 39ZM311 7L310 0L319 4ZM470 208L465 215L464 208ZM608 184L615 187L611 190ZM815 10L819 22L806 16ZM162 157L161 160L158 160L159 157ZM800 219L807 221L802 222ZM32 48L29 51L26 48ZM1035 19L1043 25L1036 29ZM388 65L388 55L394 61ZM39 297L45 288L49 294ZM131 47L124 51L122 48L124 41ZM1067 301L1065 305L1064 301ZM201 14L206 15L203 19L200 18ZM361 23L367 18L364 26ZM146 43L149 43L147 47ZM947 156L949 155L952 157L949 161ZM157 24L157 18L161 20ZM176 14L184 17L178 18ZM189 156L193 151L194 158ZM768 84L771 81L770 93ZM1101 237L1105 237L1103 241ZM12 247L13 250L9 252L8 250ZM584 225L583 228L580 226ZM929 147L923 144L932 140ZM1085 266L1091 266L1088 274ZM883 245L876 248L876 240ZM909 245L910 250L904 247ZM670 39L675 39L678 45L675 50ZM662 7L662 12L657 9ZM586 150L587 146L592 148ZM822 213L830 203L834 215L825 215ZM880 273L886 277L879 281ZM14 203L21 198L22 209ZM605 241L613 241L608 245ZM557 174L563 180L552 181ZM59 144L67 145L63 151ZM1013 56L1018 58L1013 59ZM461 140L457 137L461 137ZM89 9L89 4L92 9ZM578 215L582 219L579 220ZM1069 82L1074 89L1067 92L1063 84ZM1098 117L1101 115L1104 115ZM374 13L369 14L367 11ZM425 283L427 280L430 286ZM685 8L691 7L690 16ZM768 231L757 237L755 227ZM754 305L746 303L750 296L758 298ZM1105 137L1107 139L1103 144ZM199 61L202 65L198 65ZM1003 48L1000 53L1000 49ZM128 257L126 252L129 255ZM772 215L771 227L763 215ZM567 303L563 301L570 294ZM434 127L428 125L427 123ZM804 91L805 85L810 90ZM74 144L83 142L85 151L76 154ZM948 1L951 6L945 8ZM626 281L622 284L621 280ZM232 59L225 62L229 54ZM560 285L558 288L557 285ZM990 194L989 190L992 190L991 193ZM761 122L763 130L758 132L756 125ZM543 123L548 126L548 131L540 128ZM247 109L251 115L243 115ZM202 268L196 269L194 264L198 258ZM260 6L262 10L258 8ZM98 197L104 201L102 202L97 199ZM30 84L32 80L35 84L33 85ZM479 92L476 96L467 91L474 87ZM1079 239L1066 240L1078 236ZM233 15L240 24L231 20ZM673 212L677 217L674 221L671 213ZM785 282L792 278L792 283ZM1000 152L1009 152L1009 161ZM544 194L545 199L540 196ZM602 67L607 67L604 71ZM1110 75L1109 71L1114 72ZM1077 171L1067 176L1063 167L1071 166ZM300 301L297 293L304 293L303 301ZM206 212L210 217L204 220L203 217ZM960 32L959 30L962 31ZM588 227L587 221L590 221ZM582 83L584 77L588 78L588 84ZM585 239L593 235L591 245ZM625 29L618 25L628 25ZM903 45L895 41L901 38ZM904 147L900 145L906 141L907 145ZM457 23L453 19L458 17ZM891 291L881 288L883 286ZM555 61L551 68L551 62ZM13 56L10 62L7 60ZM758 65L762 61L762 65ZM475 137L465 136L473 130ZM634 169L629 169L631 163ZM765 66L771 64L772 70ZM205 18L209 20L207 25L204 23ZM792 127L797 126L796 132ZM590 87L597 81L596 90ZM479 120L475 123L476 117ZM430 10L432 14L426 11ZM1005 -6L1006 3L1002 -2ZM38 274L35 263L41 260ZM330 257L326 260L327 253ZM115 142L106 138L112 134ZM709 226L704 225L706 218ZM40 26L38 23L42 22ZM1118 68L1126 65L1126 75L1119 74ZM370 30L373 25L375 30ZM823 206L812 202L820 198ZM439 131L441 123L443 133ZM937 129L941 127L940 129ZM476 272L478 270L481 273L478 275ZM145 211L141 214L140 210ZM622 11L629 5L630 17ZM37 17L40 18L38 22ZM633 53L637 59L626 58ZM416 101L413 94L418 89L424 96ZM6 129L8 124L11 127L6 129ZM516 42L522 40L524 45L519 51ZM559 197L560 194L565 195L564 198ZM838 125L844 121L843 131ZM533 31L534 34L532 36L527 34ZM816 198L816 190L820 192L821 193ZM24 0L18 2L19 -5L23 -6ZM26 256L19 264L19 256L24 254ZM332 186L337 192L331 194ZM1051 83L1055 75L1055 85ZM58 267L54 269L53 265ZM923 226L930 217L931 219ZM265 8L269 10L266 13ZM145 63L150 55L153 56ZM1051 185L1052 189L1046 189ZM356 32L352 35L344 27ZM1009 85L1008 88L1001 89ZM599 111L602 113L594 116ZM99 114L95 118L93 111ZM1089 228L1085 233L1086 228ZM871 273L867 277L864 273L871 267ZM108 95L111 96L109 106L101 101ZM1018 245L1007 246L1014 239ZM1018 114L1006 118L1009 112ZM785 174L784 177L783 177L781 175ZM858 159L863 161L860 169ZM42 290L46 279L50 291ZM492 189L489 183L489 179L497 180ZM430 23L428 25L424 23ZM678 273L685 273L680 280ZM488 263L492 264L489 264ZM913 291L911 296L908 293L911 288ZM782 137L785 144L777 142ZM268 196L262 197L261 192ZM492 58L494 69L485 66ZM107 131L102 142L97 138ZM874 10L873 11L873 7ZM1070 303L1060 306L1064 295ZM282 31L276 29L284 27ZM567 289L575 286L570 298ZM435 74L441 81L431 78ZM298 243L302 250L295 251ZM530 183L530 188L525 185ZM248 113L248 119L244 118L245 114ZM634 264L634 270L631 267ZM480 136L479 130L484 130ZM516 162L524 161L527 168L525 168ZM350 -2L346 6L342 -1ZM472 92L476 95L473 97ZM550 179L552 183L547 183L547 181ZM750 85L757 83L754 93ZM477 9L474 5L482 -2ZM197 266L202 266L203 270L198 268ZM451 162L456 168L454 169ZM904 98L899 96L905 96ZM545 231L548 224L552 232ZM405 131L400 128L405 127ZM1044 122L1039 120L1042 117L1043 120ZM656 86L665 84L667 92L661 97ZM803 115L802 111L811 113ZM970 267L971 280L964 272ZM827 86L829 86L830 86L828 89ZM724 261L718 266L713 265L715 259ZM555 289L563 292L557 304ZM839 159L838 161L833 154ZM655 74L664 71L662 77ZM223 280L220 278L222 276ZM257 285L252 285L252 276ZM491 24L482 25L480 20L493 18ZM623 142L620 153L618 143ZM28 174L32 180L24 183ZM951 273L954 271L955 273L956 274ZM144 293L145 301L140 291ZM1023 298L1025 302L1020 304L1019 299ZM507 91L503 96L500 93L503 89ZM125 17L130 23L129 28ZM221 270L220 268L227 265ZM372 135L371 130L375 132ZM892 247L895 254L884 256L885 251ZM640 251L642 252L639 261ZM577 185L574 179L581 177ZM154 111L158 104L162 111ZM749 187L754 184L755 188ZM856 3L845 11L848 -1ZM588 205L589 198L593 198L590 207ZM1074 126L1081 134L1070 132ZM948 61L952 60L953 64ZM337 10L340 16L332 12ZM550 184L544 189L541 184L548 179ZM1102 285L1105 284L1105 288L1101 287ZM46 172L44 172L46 168ZM787 35L785 38L783 37L785 36ZM560 203L558 210L552 207L556 200ZM683 301L675 304L677 300ZM555 286L556 294L550 290ZM924 131L930 130L928 136ZM537 199L528 204L529 194ZM23 250L27 250L27 256L25 257ZM1127 156L1135 159L1131 162ZM466 180L465 184L459 178ZM978 90L977 81L983 83ZM241 182L246 183L245 193ZM427 49L421 43L425 42ZM965 78L958 82L960 73ZM584 155L581 158L579 153L581 151ZM1126 266L1118 266L1122 259ZM1054 183L1042 182L1044 175ZM1007 267L1010 269L1008 272ZM584 125L582 135L579 126ZM960 177L955 180L954 173L959 173ZM491 245L487 242L494 241ZM271 188L264 182L267 179ZM870 77L876 76L873 80ZM283 305L279 303L284 300L285 304ZM279 136L279 127L286 134ZM128 151L126 157L122 150ZM25 209L30 204L32 210L28 211ZM669 127L664 125L669 119L674 125ZM211 175L210 176L207 175L209 172ZM730 284L727 290L720 285ZM1127 121L1124 123L1123 120L1125 119ZM259 18L257 22L252 14ZM976 295L974 299L968 296L971 291ZM1084 301L1088 302L1085 308ZM592 264L598 269L586 272ZM208 287L205 286L206 280ZM627 267L620 273L619 267ZM345 244L350 243L350 246ZM677 138L680 132L681 143ZM1030 162L1028 163L1030 159ZM306 14L303 21L298 18ZM438 89L439 97L433 93ZM259 17L268 17L262 24ZM580 282L575 281L582 278ZM686 72L685 77L683 76L684 71ZM648 37L655 40L649 47L645 40ZM490 50L484 55L483 49ZM1064 116L1061 118L1061 112ZM941 259L943 263L941 264ZM296 16L301 14L303 17L298 21ZM46 26L48 31L46 30ZM1078 105L1080 106L1075 112ZM540 199L529 196L540 192ZM1115 170L1120 169L1116 173ZM732 260L733 257L740 259L738 260ZM661 16L662 21L660 18ZM859 42L854 51L850 40ZM798 70L807 62L807 71ZM200 54L205 58L206 62L200 66ZM802 274L806 276L802 279L801 276ZM159 238L161 233L161 239ZM180 140L173 144L175 138ZM744 179L748 172L755 175ZM739 16L744 22L739 24ZM156 185L162 190L156 188ZM379 114L370 112L380 107ZM755 170L759 167L762 169ZM558 218L556 208L561 207L560 216ZM141 129L145 133L141 134L139 134ZM1129 297L1132 292L1133 297ZM466 307L464 294L471 305ZM607 165L606 157L616 158L613 163ZM92 41L96 41L94 45ZM372 42L369 40L366 33L372 29ZM802 27L796 26L804 24ZM424 63L432 71L421 67ZM474 176L472 171L477 175ZM290 96L286 98L286 86ZM112 77L106 80L106 74L110 75ZM1097 28L1091 29L1095 21ZM24 238L27 241L24 245ZM789 120L798 122L790 127L785 124ZM1076 19L1074 26L1071 24L1073 18ZM324 129L325 125L328 125ZM324 80L323 77L326 80ZM114 50L116 56L107 51ZM48 73L55 77L45 81ZM990 47L983 50L984 44ZM412 61L412 67L408 68ZM8 42L9 36L17 39L12 46ZM310 37L309 33L312 31L315 36ZM1027 293L1031 294L1029 298ZM913 189L906 185L916 183ZM331 207L341 202L340 210L337 214ZM606 115L608 112L612 107L613 119ZM514 104L523 106L515 111ZM448 107L455 116L448 116ZM768 275L764 274L770 270ZM1108 57L1097 55L1098 49ZM881 258L872 251L882 246ZM994 288L995 280L1002 282ZM183 218L174 226L173 219ZM839 134L843 128L846 133ZM945 258L940 258L942 253ZM851 108L861 113L855 118ZM299 111L292 115L285 110L297 108ZM527 276L529 283L521 283ZM29 104L39 104L38 110ZM500 269L496 267L498 264ZM805 238L798 234L801 230ZM109 45L105 56L104 45ZM1110 257L1121 255L1116 265ZM659 282L656 281L657 279ZM-1 15L5 21L-4 26ZM708 244L718 242L719 248ZM808 165L800 166L801 160L806 159ZM466 290L461 295L461 288ZM542 15L539 18L535 16ZM390 38L389 47L381 41ZM1109 144L1118 143L1120 146ZM626 135L628 126L634 134ZM321 175L322 176L318 177ZM400 143L401 139L404 142ZM842 268L835 273L831 274L830 264ZM946 51L944 53L946 48ZM262 181L267 178L269 184ZM224 73L231 72L228 79ZM369 221L373 227L367 225ZM913 -2L914 8L909 9L909 -1ZM532 162L523 164L528 155ZM996 39L998 34L1000 35ZM235 254L240 252L237 257ZM961 288L962 282L966 284ZM388 72L392 74L392 79ZM36 46L33 57L30 47ZM813 50L816 48L819 54L812 53ZM1114 250L1109 251L1113 247ZM703 147L706 146L705 154ZM131 236L134 237L131 241ZM48 138L51 131L56 135L53 141ZM995 134L993 142L990 137ZM503 170L497 168L499 166L503 166ZM1013 112L1012 117L1007 110ZM914 124L913 129L910 121ZM792 274L800 281L796 284L789 277ZM733 252L734 262L723 263ZM318 270L317 262L325 263L325 267ZM700 114L691 118L691 113L700 111ZM379 76L386 76L380 80ZM420 110L422 106L425 105ZM328 208L321 212L320 210ZM771 151L777 146L778 153ZM818 247L815 242L820 240ZM989 55L988 48L993 49L996 53ZM297 290L304 281L305 285ZM1125 106L1129 106L1131 111L1124 113ZM451 117L451 108L458 112ZM1004 205L1000 207L1000 203ZM345 238L344 235L349 240ZM1045 115L1042 111L1047 106ZM314 56L309 62L304 55ZM1006 120L1009 124L1004 123ZM672 125L671 117L680 119ZM964 100L965 97L970 99L966 102ZM370 195L360 204L358 197ZM238 246L234 251L231 249ZM826 48L820 56L820 47ZM792 64L794 56L801 60L800 62ZM88 53L91 60L79 62L81 57ZM679 187L684 190L680 197L677 189ZM257 260L254 258L259 255ZM72 120L73 112L75 120ZM359 24L359 27L356 26ZM1091 174L1096 171L1097 172ZM847 149L844 142L857 146ZM165 161L165 158L167 156L168 160ZM397 270L392 268L397 266ZM257 269L264 262L261 269ZM409 131L404 131L403 127L411 127ZM532 281L541 275L542 280ZM626 264L622 259L626 256L628 263ZM135 21L136 18L138 23L136 25ZM571 260L576 267L565 268ZM345 283L343 272L351 280ZM948 101L954 102L952 106ZM167 67L161 72L161 63L166 66ZM242 63L242 62L247 64L243 68ZM934 235L941 236L935 243ZM342 53L339 55L336 51ZM438 244L450 246L442 253ZM3 299L5 297L9 301ZM104 33L112 33L108 39ZM384 75L385 80L380 84ZM236 276L236 271L239 275ZM364 230L361 223L369 225ZM954 232L960 233L958 241L952 239ZM244 255L241 254L243 250L246 254ZM1124 88L1129 99L1117 96ZM615 206L607 201L611 198ZM548 237L540 230L547 230ZM271 89L263 89L267 80ZM761 141L755 139L757 133L761 135ZM727 116L734 118L730 120ZM447 163L450 162L450 168ZM202 0L206 1L205 3L202 4ZM99 82L92 76L100 78ZM885 219L882 222L883 218ZM336 54L330 57L331 53ZM12 245L13 239L13 246ZM1096 219L1094 213L1099 217ZM290 14L299 9L300 16ZM895 204L891 203L891 201L894 198ZM797 18L800 22L793 29ZM396 240L399 234L403 239ZM335 83L342 83L339 88ZM55 61L51 55L55 52L58 59ZM387 297L392 295L389 300ZM364 144L362 154L358 150ZM1106 51L1097 50L1101 42L1106 46ZM1070 258L1057 255L1070 251ZM981 9L987 9L985 12ZM304 261L303 257L309 256ZM816 295L807 299L808 286L809 285ZM195 180L201 179L201 187ZM929 194L933 203L925 203ZM381 222L383 227L379 226L379 221ZM279 58L276 47L283 53ZM951 168L941 164L951 164ZM883 47L888 47L890 51L885 55ZM1039 147L1028 147L1039 142ZM530 143L531 134L536 139ZM898 258L905 256L898 264ZM1130 72L1132 77L1129 75ZM971 157L980 162L973 170ZM837 6L831 5L836 -6ZM722 243L729 248L729 252ZM949 207L958 208L955 214L949 212ZM221 69L218 72L218 65ZM252 155L251 165L248 155ZM94 124L91 114L103 117ZM256 4L255 9L253 6ZM296 299L291 300L294 297ZM645 168L644 177L634 171L637 167ZM298 272L290 271L295 265ZM618 156L611 164L611 155ZM438 64L436 67L437 62ZM437 283L436 293L431 290ZM183 23L185 30L181 29ZM941 11L936 11L936 7ZM393 45L396 51L391 54L391 47ZM333 57L331 51L335 47L340 54ZM397 148L392 145L395 143ZM408 48L400 55L401 49ZM683 46L682 44L688 44ZM817 137L818 133L825 134L824 139ZM206 117L207 113L212 118ZM948 293L946 291L948 290ZM899 242L894 235L907 235ZM747 242L745 249L741 241ZM1062 210L1058 217L1054 213ZM563 52L561 65L558 56ZM512 181L511 179L516 178ZM858 133L858 127L862 128L862 133ZM251 141L240 140L240 137ZM378 233L389 233L384 239ZM273 54L270 58L268 57L270 53ZM1136 199L1124 205L1132 197ZM900 109L899 106L903 108ZM150 121L155 121L151 124ZM127 158L132 154L128 158ZM959 42L960 47L953 48L955 40ZM1088 160L1089 158L1091 157L1093 160ZM912 121L918 120L917 125L911 125ZM939 4L934 4L935 -6ZM24 111L28 113L27 115L24 117ZM694 195L695 199L688 200L689 196ZM382 268L387 270L385 274ZM681 88L676 86L678 85ZM922 116L911 124L914 113ZM1122 220L1119 220L1119 216ZM934 85L934 79L937 81L937 83ZM341 40L343 42L341 44L339 41ZM328 72L328 64L333 68ZM532 100L530 103L525 99ZM108 79L106 78L109 75L109 77ZM1050 161L1055 160L1056 163L1055 166ZM238 10L232 8L236 4ZM177 164L182 162L182 166ZM457 285L464 282L465 290L457 289ZM635 298L631 292L640 290L640 294ZM856 92L858 91L862 98ZM305 299L304 306L301 304ZM403 298L410 295L409 307ZM189 40L190 36L197 30ZM192 219L199 214L203 220ZM896 8L898 -1L906 5ZM531 51L529 57L527 54ZM1017 176L1022 180L1020 182L1016 177ZM640 186L655 186L651 192ZM1050 157L1045 152L1058 152ZM655 303L648 297L656 289ZM3 255L9 260L2 266ZM588 139L593 136L594 140L591 144ZM995 193L988 193L989 183ZM14 179L25 174L23 184ZM566 87L565 80L575 81ZM559 10L560 18L557 11ZM878 189L885 184L885 192ZM674 22L676 11L684 16ZM1087 248L1090 253L1086 260ZM880 3L875 7L874 1ZM834 130L845 137L835 140ZM1058 61L1057 69L1053 63ZM320 165L317 163L320 161ZM188 225L174 225L180 221ZM1079 252L1075 255L1075 250ZM959 48L955 46L955 42ZM563 301L567 298L569 300L565 305ZM975 211L978 204L980 208ZM147 135L149 142L147 145L143 137ZM746 24L743 26L740 23L742 19ZM971 54L963 47L967 44ZM108 186L111 175L118 178ZM756 163L762 170L762 176ZM168 122L168 123L163 119ZM53 15L60 21L57 23ZM373 137L362 131L371 130ZM501 216L498 212L500 209ZM267 101L265 104L262 101ZM900 259L902 255L904 258ZM-5 214L-4 210L1 212ZM1033 72L1039 67L1043 73L1036 76ZM525 201L525 205L522 202ZM673 300L665 307L665 298ZM1009 38L1023 34L1016 41ZM126 212L124 209L127 204ZM299 77L301 74L304 80ZM529 77L536 80L532 91L527 86ZM49 260L45 265L45 258ZM1089 36L1092 39L1087 45ZM481 88L486 86L490 91ZM1021 249L1021 244L1027 241L1029 247ZM647 29L646 35L642 33ZM72 18L69 15L74 18ZM249 289L250 293L248 292L247 289ZM244 262L238 264L242 254ZM503 2L511 0L506 5ZM1116 225L1115 219L1119 221ZM936 159L930 161L929 153ZM986 76L979 87L977 74ZM558 101L562 108L554 105ZM335 235L332 241L332 234ZM138 135L133 132L134 129ZM873 302L868 305L867 299ZM1002 152L1006 149L1010 152L1007 156ZM829 174L827 173L829 170L831 172ZM327 177L320 185L318 179L322 173ZM224 177L228 170L236 175ZM648 44L643 43L645 39ZM290 170L290 163L294 162ZM200 171L191 169L194 164L199 167ZM1061 86L1054 92L1048 86ZM452 229L455 223L462 225ZM167 221L161 219L167 215ZM1056 25L1060 27L1052 31ZM1113 128L1120 133L1114 135ZM944 98L944 92L955 88ZM353 20L361 15L361 26ZM545 12L538 16L544 8ZM909 2L907 -2L910 -3L912 -1ZM772 74L778 72L776 75ZM288 2L291 7L285 12L282 5ZM565 264L560 254L564 254ZM675 99L676 106L673 105ZM802 243L799 233L807 236ZM91 256L92 265L82 264ZM860 37L872 38L871 43L860 44ZM649 67L643 72L641 68ZM346 190L349 186L352 193ZM886 184L879 177L887 174ZM145 145L141 145L143 140ZM104 72L108 75L105 77ZM356 279L352 280L352 277ZM153 222L157 226L150 231L148 226ZM318 101L316 96L320 95L324 100ZM695 159L698 160L696 166L693 164ZM75 18L72 14L76 13L78 14ZM1112 184L1109 178L1119 180ZM200 280L208 277L205 284ZM750 129L740 122L743 119ZM952 55L960 57L958 61L953 60ZM322 82L328 88L322 93L319 85ZM22 254L21 252L25 251L26 253ZM706 67L707 75L700 71ZM126 287L125 292L120 291L120 289ZM678 231L677 238L670 234ZM971 65L962 65L971 57ZM571 266L566 269L563 266ZM67 7L65 7L65 4ZM863 57L859 53L862 44L869 52ZM796 50L797 53L792 52ZM104 27L100 29L101 18ZM24 15L17 4L28 9ZM861 88L867 91L862 95ZM65 120L54 113L62 109L69 115ZM613 39L615 43L610 43L611 40ZM689 218L687 215L689 212ZM1017 134L1025 134L1020 144ZM145 181L146 176L148 180ZM266 42L268 34L272 39ZM146 51L141 49L146 46ZM452 10L459 13L450 14ZM381 226L378 221L383 216ZM442 105L447 110L439 113ZM69 138L74 132L75 141ZM784 193L784 200L775 197ZM1024 117L1013 115L1020 108ZM33 89L30 89L30 86ZM406 232L408 235L405 234ZM844 52L834 54L838 47ZM960 264L957 265L956 263L960 263ZM144 222L150 223L143 227ZM628 20L633 16L633 20L631 23ZM612 106L610 102L613 99L614 100ZM341 26L336 34L327 27ZM1095 99L1098 88L1105 92L1099 101ZM1117 159L1114 162L1116 158ZM567 206L568 201L571 207ZM1114 179L1102 184L1108 174ZM685 210L687 199L690 213ZM136 265L149 264L146 269L142 271ZM153 146L147 150L145 148ZM210 162L215 157L216 158ZM773 8L786 10L781 13ZM778 100L779 107L771 108ZM617 213L618 216L614 215ZM20 283L14 278L14 271L23 274ZM504 181L501 181L502 177ZM987 131L983 140L979 136ZM509 174L511 179L508 183L503 180ZM618 269L617 273L613 269ZM499 154L500 149L509 151L506 155ZM767 110L768 116L763 112ZM948 226L955 226L947 229ZM545 44L538 36L549 41ZM943 158L952 156L951 159ZM314 21L308 21L308 17ZM448 226L447 224L452 220L452 225ZM835 165L832 158L836 157ZM813 96L807 96L810 91ZM1118 218L1117 222L1111 221L1111 216ZM72 11L75 21L69 19ZM343 73L350 82L338 79ZM703 216L706 219L705 227ZM683 168L679 170L678 162ZM1113 71L1115 64L1117 64ZM767 190L773 194L766 198L761 196ZM55 140L50 139L56 131ZM588 295L586 290L597 293ZM68 127L71 129L73 131L69 133ZM795 169L796 173L789 176ZM457 237L464 237L461 239ZM28 228L28 224L32 223L32 229ZM819 203L813 206L821 196ZM840 136L838 147L833 142L838 133ZM950 196L951 199L949 200L947 196ZM297 13L296 19L291 18L292 15ZM671 93L672 82L677 90ZM990 45L994 45L992 46ZM773 231L770 228L778 231ZM940 272L937 275L932 272ZM1021 110L1026 110L1023 117ZM985 25L990 22L990 24ZM471 210L471 216L467 219L467 208ZM400 160L400 164L398 161ZM842 225L849 224L851 227ZM582 250L584 256L577 255L578 246ZM212 223L207 226L211 221ZM247 207L247 218L242 209ZM1098 198L1101 192L1101 198ZM575 234L579 237L580 242L575 239ZM208 254L197 251L208 247ZM991 46L987 54L984 42ZM998 11L990 14L994 6ZM912 271L916 267L919 271ZM1001 42L1003 38L1005 45ZM397 66L392 64L396 58ZM450 34L452 29L458 29L459 38ZM736 290L739 286L742 287L739 293ZM93 198L91 199L90 195ZM22 222L18 226L20 218ZM743 150L749 155L743 153ZM574 100L576 103L572 100ZM635 2L635 13L630 5ZM925 204L921 199L925 198ZM1046 70L1043 79L1042 74ZM797 48L796 36L804 37L807 43ZM2 0L5 7L1 10L-2 3ZM668 201L662 205L657 201ZM913 180L917 187L911 192ZM703 25L707 24L704 33ZM498 254L504 251L506 255ZM532 65L536 71L525 78ZM881 269L881 264L885 266ZM1040 77L1034 80L1031 73L1040 69ZM781 206L779 192L785 196ZM1063 306L1053 308L1055 299ZM331 292L333 298L327 298L328 294ZM199 146L196 147L195 142ZM110 284L108 289L105 286L107 283ZM132 209L136 209L135 214ZM819 199L814 194L817 192L821 194ZM241 159L241 163L236 163ZM753 296L753 289L758 293ZM1121 183L1118 177L1125 177ZM855 169L855 158L864 163ZM455 1L459 -4L467 1ZM364 26L361 31L361 23ZM436 250L434 241L441 247ZM208 63L212 60L213 61ZM872 212L879 218L872 221ZM361 132L367 132L362 140ZM635 250L628 256L624 251ZM319 277L315 281L308 274ZM103 69L104 61L109 68ZM929 75L935 79L927 80ZM1097 268L1094 265L1096 262L1100 264ZM765 144L767 147L767 148L763 146ZM516 258L512 258L513 254ZM782 207L783 204L786 205ZM366 20L359 19L361 16ZM926 212L929 221L923 219ZM602 100L599 97L604 99ZM354 269L356 272L351 271ZM517 141L523 138L517 147ZM437 159L433 156L438 153ZM709 57L707 55L706 51ZM401 118L400 125L393 119ZM516 214L515 219L513 212ZM972 201L980 202L976 206ZM308 203L312 205L307 207L308 204ZM969 111L967 119L966 111ZM545 178L549 180L543 185ZM1042 221L1042 215L1051 219L1048 224ZM1081 189L1084 180L1087 190ZM166 38L161 40L156 35ZM1075 220L1082 217L1087 221ZM129 261L124 267L121 264ZM596 179L588 188L585 179ZM559 88L555 93L555 85ZM507 143L514 140L511 148ZM345 106L357 109L349 115ZM71 236L57 237L63 231ZM658 8L654 9L652 6L656 4ZM569 223L569 217L577 218ZM930 52L934 49L936 55ZM565 -6L574 0L568 1ZM987 149L992 152L990 154ZM342 224L335 227L332 221L342 220ZM1112 281L1118 276L1118 281ZM239 13L235 17L232 11ZM894 294L889 303L887 298ZM665 250L674 249L674 252ZM167 169L169 173L163 170ZM101 177L98 185L92 183L92 178ZM185 125L193 119L196 126ZM894 274L895 268L903 270ZM655 86L662 88L655 91ZM625 93L631 94L628 102L623 100ZM287 197L282 191L288 194ZM788 43L782 50L780 43ZM360 118L356 119L357 116ZM494 183L496 176L497 182ZM65 206L60 210L57 202ZM96 5L93 17L84 8ZM445 186L453 185L448 192ZM419 136L411 135L410 130L418 129ZM585 238L582 234L590 230ZM1066 118L1062 126L1057 121L1059 113ZM238 209L240 204L242 208ZM405 283L403 277L408 279ZM732 172L731 170L733 168L734 173ZM1013 96L1011 93L1015 92ZM801 80L797 82L799 78ZM168 291L177 290L172 297ZM1057 291L1054 303L1048 299ZM1023 101L1026 97L1027 100ZM661 185L658 182L662 178L666 183ZM455 -1L459 2L453 7ZM1082 153L1077 148L1081 146ZM150 17L147 8L153 11ZM580 75L571 84L576 73ZM671 21L677 25L670 36ZM742 276L739 283L729 274L734 271ZM754 2L758 0L761 10L757 13ZM837 141L835 137L839 140ZM340 86L338 85L341 83ZM756 210L752 208L755 205ZM1101 164L1105 165L1097 169ZM1048 231L1043 238L1041 224ZM5 177L10 172L13 178ZM168 139L166 136L176 135ZM776 113L769 109L773 105ZM390 124L388 121L398 125L395 131ZM260 192L255 188L257 185ZM505 130L514 127L511 136ZM188 59L191 62L188 64ZM478 90L486 92L481 99ZM54 152L51 153L50 149ZM306 206L296 201L301 193L310 199ZM1059 152L1054 150L1058 149ZM570 158L567 153L569 148L574 151ZM529 252L520 257L519 246ZM470 193L465 196L465 190ZM341 159L348 159L342 161ZM514 204L517 196L518 203ZM1068 82L1063 87L1063 79ZM219 162L225 170L218 173L213 169ZM220 261L221 265L219 266ZM413 144L420 138L421 146ZM625 240L626 245L619 243ZM369 34L368 38L362 35ZM1045 35L1053 31L1052 40L1044 38ZM351 144L356 151L346 155L346 153ZM1011 98L1017 93L1018 102ZM688 49L687 55L683 48ZM1034 41L1035 33L1039 35L1038 41ZM615 186L611 190L612 185ZM599 124L598 129L596 128L597 124ZM916 167L921 163L927 168L921 174ZM889 134L887 146L882 139ZM405 247L404 236L411 243ZM336 96L335 86L339 86L338 92ZM285 145L291 147L287 150ZM359 288L360 283L366 286ZM229 102L232 101L234 106ZM594 225L593 234L586 230L591 222ZM937 197L939 189L943 193ZM75 299L72 289L83 292ZM49 181L55 182L50 185ZM953 24L948 26L951 23ZM727 6L735 1L733 11ZM955 20L961 15L958 24ZM169 177L176 183L166 184ZM135 -2L138 0L135 3ZM142 69L141 75L137 74ZM268 115L266 120L262 114ZM1099 206L1099 198L1103 206ZM1112 136L1119 127L1122 131L1117 140ZM954 298L961 295L958 303ZM81 28L79 30L78 28L79 25ZM256 93L251 91L255 88ZM698 247L704 246L698 252ZM1079 67L1086 70L1078 76ZM117 233L113 228L125 225ZM823 249L823 261L817 256ZM902 34L900 44L896 45ZM177 258L189 251L186 260ZM733 54L738 48L741 57ZM1062 267L1060 260L1069 262ZM555 41L565 39L560 46ZM404 214L398 223L395 214ZM289 271L280 270L286 263ZM979 124L982 132L973 135ZM602 141L601 141L599 135L602 137ZM879 153L882 161L878 161ZM253 244L250 242L250 236L257 238ZM202 267L198 268L199 263ZM950 72L952 68L957 76ZM861 44L867 41L867 46ZM480 50L472 56L473 45ZM644 86L643 89L641 89L641 87ZM317 204L319 197L326 204ZM98 61L97 53L104 58ZM507 218L513 211L517 213ZM464 41L465 37L468 37L467 42ZM600 74L601 71L604 74ZM642 254L640 242L646 244ZM900 66L900 65L905 66ZM186 305L180 305L183 296ZM623 95L617 87L623 83ZM576 280L568 282L573 277ZM626 271L625 266L628 270ZM958 240L958 235L968 235L964 244ZM216 54L219 55L217 56ZM348 244L344 247L341 240L347 239ZM93 65L89 57L95 59ZM798 183L795 180L799 177ZM482 303L475 297L485 298ZM237 266L236 257L246 258ZM607 37L613 42L601 44ZM526 212L535 208L539 214L536 219ZM876 29L874 25L879 25L879 28ZM275 256L267 262L270 256ZM768 190L758 188L765 183ZM874 145L879 147L875 152L870 149ZM300 124L293 125L291 122L297 119ZM646 163L639 168L639 160L642 160ZM37 305L43 299L45 305ZM92 247L101 248L98 253ZM103 102L106 112L100 112ZM1086 25L1087 17L1090 23ZM673 138L677 140L674 142ZM926 119L929 127L918 122ZM164 125L173 131L163 132ZM709 284L708 289L703 287ZM664 8L656 12L661 4ZM1016 183L1021 175L1028 182L1024 186ZM812 264L814 267L806 272L805 263ZM1036 66L1030 66L1034 64ZM792 306L787 300L794 300ZM566 153L574 147L576 151ZM1084 138L1082 143L1082 135ZM856 105L852 97L856 95ZM145 287L144 301L138 297ZM929 279L939 281L936 287ZM23 209L27 199L32 212ZM299 143L298 138L308 139ZM1054 296L1061 301L1050 306ZM354 135L353 144L348 142ZM331 160L337 153L340 164ZM638 295L639 292L642 298ZM64 156L61 154L61 150ZM686 38L689 38L687 42ZM62 4L69 1L73 0L70 12ZM550 124L552 131L545 128ZM1108 189L1112 185L1110 195ZM314 267L311 271L305 265L311 266ZM20 72L19 67L27 68ZM261 239L266 242L263 248L260 242ZM979 23L977 26L976 24L979 22ZM273 100L280 96L280 105ZM588 284L591 281L592 286L591 287ZM92 216L101 210L103 216ZM689 122L685 118L688 116ZM86 149L85 142L93 143L92 147ZM891 253L882 257L887 251ZM343 189L335 189L336 186ZM203 160L206 158L207 161ZM427 188L437 187L428 190ZM605 190L605 193L603 188ZM564 118L569 122L566 129ZM381 92L375 84L384 80ZM680 266L674 271L672 267ZM1124 20L1120 22L1119 17L1122 18ZM1054 21L1049 19L1052 16ZM922 86L923 82L926 84ZM922 129L913 132L915 127ZM1049 206L1046 199L1051 200ZM624 156L630 155L630 157ZM988 -8L989 3L982 4L982 -7ZM434 85L432 84L435 81ZM971 63L977 71L964 71ZM849 233L856 229L859 238L857 241ZM775 243L769 241L775 241ZM18 62L17 66L11 62ZM269 255L267 259L262 249ZM825 251L827 253L826 257ZM422 268L418 271L416 267L418 265ZM620 146L620 152L618 148ZM526 156L527 154L528 162L524 160ZM261 6L263 16L258 17ZM619 144L612 145L612 141L616 139ZM171 16L176 15L174 20ZM841 135L843 131L845 136ZM623 89L611 88L622 84ZM696 266L691 257L703 257ZM313 192L323 193L321 200L317 201ZM725 225L728 223L734 226L731 229ZM1097 30L1100 28L1102 32L1098 35ZM565 202L561 206L559 202L564 201ZM1065 -1L1059 2L1057 -3ZM769 241L777 237L779 246ZM455 271L462 266L462 270ZM861 280L854 282L851 279L862 275ZM370 291L366 287L373 281ZM986 119L978 116L987 115ZM213 25L206 27L213 15ZM489 112L488 107L490 111ZM118 306L116 297L125 298ZM403 114L412 118L399 115ZM632 69L633 66L637 67ZM278 308L273 307L280 301ZM81 233L82 241L73 243ZM875 210L881 209L880 215L878 214ZM671 171L665 162L671 157ZM656 189L659 189L661 192L656 191ZM420 130L418 126L424 127ZM77 199L77 192L82 192L83 198ZM451 94L448 104L443 98ZM1123 19L1115 26L1114 23L1116 16ZM48 74L57 71L52 79ZM119 90L119 94L112 92ZM655 190L647 181L655 180ZM886 74L884 81L876 77ZM903 269L895 267L905 264ZM1063 182L1049 184L1051 178ZM659 9L663 20L654 19ZM136 221L140 220L140 222ZM993 247L988 247L988 242L993 243ZM464 12L467 15L462 15ZM324 92L326 90L330 91L326 95ZM140 71L136 75L134 72L138 70ZM763 279L755 281L761 274ZM411 87L412 93L406 89ZM944 2L940 1L945 -1ZM81 303L83 294L86 294ZM295 200L294 194L297 200ZM1121 199L1115 199L1116 196ZM541 96L535 87L542 86ZM607 247L603 249L602 246ZM225 230L212 231L213 225ZM1083 194L1086 185L1089 186ZM1076 133L1077 140L1068 140ZM796 85L802 78L802 84ZM413 270L413 277L410 269ZM763 271L764 277L761 274ZM233 138L233 141L227 139ZM780 57L787 64L774 64ZM1000 -3L999 3L994 4ZM163 151L173 147L169 158ZM657 19L656 21L653 20L655 17ZM250 67L249 62L255 69ZM1132 198L1130 193L1133 193L1136 196ZM385 250L392 249L388 254ZM401 241L410 240L405 243ZM647 207L652 207L652 211ZM62 280L64 276L68 280ZM837 256L829 258L828 255ZM401 190L404 188L406 196L397 196ZM439 229L439 223L442 228ZM444 31L442 36L435 28ZM1093 41L1093 44L1089 47L1087 44ZM1066 174L1068 167L1071 172ZM129 130L121 131L121 126ZM115 186L114 190L111 189L112 185ZM860 51L864 58L855 58ZM545 98L551 98L548 105ZM380 11L386 8L389 14ZM303 42L296 43L299 37ZM583 105L589 106L583 112ZM62 256L69 257L62 265ZM610 226L605 234L600 227ZM849 137L856 135L859 143L846 140ZM10 75L2 68L8 60ZM103 79L106 82L104 84L101 81ZM227 122L230 120L228 124ZM757 122L755 134L752 126ZM330 192L330 196L329 192ZM790 63L788 68L786 64L789 61ZM23 276L16 283L15 277ZM509 263L507 266L502 262ZM343 253L343 248L346 252ZM76 18L81 15L82 27ZM692 119L685 113L692 111ZM545 235L546 237L540 232ZM259 156L254 151L262 151ZM213 261L213 256L221 251ZM396 274L403 264L405 274ZM965 255L959 254L961 250ZM933 3L939 1L941 2L940 9ZM667 32L664 31L665 27L668 28ZM67 33L68 38L64 36ZM347 139L345 144L343 143ZM87 107L92 109L89 112ZM557 -1L559 -5L562 4ZM511 39L508 35L512 35ZM317 20L319 12L327 16ZM1022 226L1014 230L1015 227ZM1044 284L1047 288L1041 293ZM1104 266L1096 261L1107 260ZM524 256L521 252L526 253ZM1111 234L1104 233L1109 229L1112 229ZM1073 17L1072 12L1079 12ZM779 103L781 98L782 104ZM155 22L151 17L159 23ZM797 124L792 122L798 118ZM1101 115L1095 114L1100 112ZM776 244L768 249L766 242ZM597 297L589 292L592 290ZM713 0L715 8L708 5ZM710 24L709 20L712 18L715 21ZM1064 197L1069 197L1068 200ZM23 290L18 290L22 285ZM324 79L325 89L320 87L319 80ZM240 161L242 166L239 169L236 161ZM461 265L465 268L454 272ZM429 250L433 247L433 255ZM393 234L393 223L395 220L397 234ZM303 298L301 303L296 300ZM268 90L267 98L258 97ZM239 40L223 39L234 31ZM214 39L208 35L212 30L214 30ZM883 16L885 11L890 15ZM623 83L625 86L623 88ZM949 217L945 219L947 213ZM713 16L708 14L710 13ZM650 148L657 147L656 150ZM538 63L527 63L531 54ZM628 226L634 222L633 228ZM676 91L676 87L678 91ZM627 41L624 38L628 37ZM723 27L727 27L724 30ZM802 -4L808 -11L814 -6ZM329 27L330 30L325 33ZM70 109L65 108L68 103L73 105ZM605 189L601 183L608 182ZM940 87L932 87L932 83L936 78ZM52 213L51 202L56 205ZM599 71L602 69L605 74ZM193 174L202 175L199 182L191 178ZM282 29L277 31L271 23ZM393 198L395 192L399 197ZM265 268L261 265L266 265ZM727 221L733 220L736 225L732 228ZM77 10L76 15L73 17L70 11ZM242 250L239 247L243 242L247 245ZM1085 99L1090 105L1081 108ZM267 89L272 92L268 96L263 93ZM1086 23L1084 30L1083 25ZM254 77L254 80L251 80ZM829 134L839 131L837 137ZM851 42L853 35L857 43ZM597 188L606 191L602 194ZM421 99L420 109L417 108L414 102ZM223 238L227 242L220 245L222 238ZM60 15L61 9L66 15ZM757 66L758 70L753 68ZM827 256L830 259L835 266ZM123 47L126 45L125 49ZM531 43L527 42L531 39ZM526 195L518 194L523 189ZM349 204L353 203L355 209L351 209ZM98 230L96 216L101 218ZM16 148L23 148L24 155ZM808 180L797 186L799 175ZM436 223L433 216L441 222ZM404 147L405 143L408 146ZM139 132L135 129L140 129ZM1035 117L1043 113L1040 123ZM46 45L49 49L46 50L42 50ZM119 222L116 233L114 232ZM11 111L16 113L12 118ZM718 92L724 92L721 94ZM746 14L752 15L742 18ZM813 81L808 78L813 76ZM166 119L164 115L168 116ZM93 155L105 153L97 160ZM860 269L869 274L861 278L858 275ZM677 23L676 17L681 19L679 23ZM721 86L725 88L721 88ZM728 199L732 204L728 207ZM231 231L233 238L224 237ZM1022 300L1027 293L1030 290L1030 305ZM561 21L569 29L564 34L557 24ZM988 164L993 167L985 167ZM143 32L146 29L146 33ZM1020 271L1025 274L1027 280ZM561 138L558 135L562 135ZM283 15L275 6L282 6ZM1123 105L1117 109L1118 105ZM10 238L9 226L16 225L17 235ZM1071 126L1072 135L1060 135ZM631 193L640 196L633 201ZM1044 122L1042 120L1048 119ZM705 140L706 134L708 138ZM1026 -6L1028 -2L1020 2L1019 0ZM898 301L896 297L906 300ZM270 93L273 89L274 91L273 97ZM867 179L867 186L859 179ZM468 247L472 249L470 252L464 251ZM517 218L523 220L519 226ZM43 261L40 262L41 258ZM428 185L418 181L420 177ZM471 74L476 74L472 79ZM314 50L317 46L318 46ZM301 271L309 281L305 287L296 279ZM965 70L965 62L969 73ZM1097 110L1100 109L1100 114L1098 113ZM226 240L226 234L229 235ZM138 124L138 121L140 125ZM976 178L972 184L969 174ZM312 269L304 278L306 270ZM909 277L914 279L908 281ZM561 80L558 79L558 78ZM1060 99L1062 103L1060 104ZM592 286L590 293L588 287ZM206 79L203 80L205 76ZM240 250L243 257L236 260L233 249ZM876 174L871 177L871 169L874 170ZM239 206L230 208L229 206L231 203ZM1090 211L1083 215L1090 208ZM996 247L999 243L1004 250ZM900 21L894 21L896 17ZM266 184L266 188L260 182ZM76 39L82 38L81 40ZM993 135L1001 132L995 138ZM178 299L170 303L167 298ZM1101 181L1097 189L1091 184ZM180 214L186 226L180 228ZM462 266L460 252L468 260ZM1111 266L1112 264L1116 268ZM771 141L767 130L774 133ZM831 297L838 301L831 307ZM953 27L954 34L948 37L945 32ZM958 91L962 99L955 96ZM1078 113L1089 112L1086 119L1077 115ZM517 120L522 121L516 129ZM878 75L879 83L873 77ZM342 208L340 217L336 213L338 204ZM664 292L664 290L667 286L671 288ZM981 298L978 289L983 285ZM875 46L872 41L879 39ZM953 89L952 98L945 92ZM582 141L582 143L578 142L579 140ZM575 229L568 230L569 223ZM421 76L422 80L416 83ZM-1 156L4 156L2 160ZM1094 141L1092 139L1095 137L1097 140ZM506 231L501 232L502 227ZM698 187L700 179L704 184ZM822 232L824 236L820 245L817 240ZM21 102L23 103L18 106ZM609 286L603 285L607 282ZM292 256L300 252L299 260ZM201 46L201 43L205 44ZM534 199L532 207L525 204ZM62 27L63 21L65 26ZM721 296L728 288L731 297ZM1108 124L1105 124L1101 120L1107 117ZM459 12L463 15L460 18L454 14ZM1092 300L1098 297L1101 308ZM568 102L570 101L569 107ZM428 214L419 216L429 207ZM90 218L94 214L95 218ZM546 241L549 243L549 245ZM556 208L561 208L558 212ZM254 88L261 84L262 92ZM781 136L785 124L793 132ZM579 33L582 41L571 35ZM522 235L523 229L532 229L529 236ZM1046 192L1053 187L1057 192ZM158 285L162 289L158 293ZM460 190L452 185L454 184L462 184ZM225 46L228 52L222 52ZM383 137L383 131L391 132ZM156 16L153 10L156 7ZM631 249L629 255L626 254L628 248ZM603 20L605 16L612 19ZM811 231L802 231L811 227ZM311 25L308 25L311 21ZM743 189L747 194L740 197L737 191ZM589 83L587 89L585 83ZM218 0L219 -6L223 -3ZM543 276L539 271L544 273ZM344 63L349 57L355 61ZM292 233L298 229L302 239ZM838 138L831 144L826 135L831 132ZM1060 156L1059 145L1066 155ZM487 259L493 251L496 253ZM280 287L281 281L288 283L279 290ZM131 162L134 170L121 169ZM448 264L455 256L454 265ZM1038 198L1038 195L1040 194ZM371 197L375 191L378 198L371 202ZM755 159L759 154L761 158ZM697 232L691 231L697 225ZM758 245L765 246L761 255ZM423 64L429 59L430 66ZM275 220L279 226L272 225ZM423 171L427 172L424 178L422 176ZM245 266L246 262L253 266ZM1043 127L1034 130L1031 126L1038 119ZM600 279L604 286L597 284ZM1000 204L993 205L990 202L1001 200ZM311 218L307 209L314 207L315 211ZM577 259L571 249L579 250ZM186 257L176 262L174 250ZM424 271L425 277L416 276ZM371 269L365 270L370 267ZM483 163L487 164L482 166ZM256 224L259 227L255 226ZM993 30L998 23L998 28ZM397 184L403 189L395 188ZM424 31L426 27L431 28L431 35ZM558 79L559 75L562 76L564 79ZM895 98L891 95L893 93L897 93ZM155 32L157 28L162 32ZM345 249L336 245L340 240ZM597 97L594 94L598 93ZM698 47L689 45L695 40L699 43ZM17 134L12 135L15 131ZM892 196L894 202L886 200ZM1057 18L1060 18L1063 19L1061 20ZM428 91L422 94L423 86ZM859 203L856 205L855 201ZM583 284L583 295L574 292ZM665 148L667 146L666 156ZM197 192L200 189L203 194ZM176 202L171 199L178 196ZM1050 109L1048 117L1045 113ZM1030 79L1024 83L1021 79L1029 75ZM425 209L422 211L418 202L423 202ZM388 182L379 175L387 174ZM261 257L257 267L256 260ZM428 3L435 -6L442 0ZM1068 5L1065 5L1065 2L1068 2ZM271 88L262 90L260 84L267 83ZM829 262L816 265L819 259ZM13 48L16 42L16 45ZM660 16L652 12L659 8ZM650 21L657 25L650 30L648 23ZM636 260L629 260L634 250ZM362 292L360 294L360 290ZM1084 120L1088 124L1082 126L1078 123ZM940 86L937 81L937 78L944 81ZM1058 57L1056 57L1057 53L1060 56ZM421 65L419 67L415 59ZM946 156L945 164L942 158ZM579 6L579 9L577 9L577 6ZM182 306L173 306L170 301L181 300ZM589 200L587 197L597 195L595 204ZM304 222L302 235L293 224ZM286 44L293 34L292 48ZM838 171L844 167L840 172ZM657 265L654 269L652 265ZM556 74L561 72L554 77ZM955 174L960 175L954 176ZM428 113L430 111L431 114ZM48 95L52 95L57 101L46 101ZM901 123L904 120L907 125ZM730 196L724 197L722 193L727 190ZM767 293L764 291L769 283L772 287ZM71 143L72 136L81 140ZM8 124L10 122L11 125ZM492 280L495 275L495 285ZM320 184L324 179L327 182L322 186ZM177 212L179 204L185 207ZM90 3L87 8L84 6ZM401 250L399 246L402 246L403 249ZM827 293L822 295L819 291L822 286ZM590 294L589 293L592 287L593 296ZM1102 109L1100 111L1100 104ZM778 126L783 129L779 133L777 130ZM917 25L917 17L921 24ZM209 265L216 266L208 271ZM273 150L279 157L274 166ZM251 118L253 120L250 121ZM951 110L952 100L957 108L951 110ZM607 33L595 30L602 24ZM920 28L931 23L933 32L927 36ZM33 79L40 80L37 83ZM819 155L822 154L822 159ZM807 245L799 249L800 240ZM2 130L-2 138L-1 128ZM123 179L127 169L134 172ZM568 8L576 14L568 14ZM147 195L149 199L148 201ZM513 130L513 132L511 133L509 131ZM556 284L565 289L552 289ZM961 262L957 259L969 252L969 256ZM608 204L608 216L602 213ZM553 287L549 289L550 284ZM173 271L174 269L174 271ZM903 211L901 205L908 208ZM903 172L908 171L906 174ZM583 75L579 81L576 75ZM506 258L509 260L504 261ZM96 31L92 27L99 28ZM695 227L691 221L696 222ZM606 62L600 57L606 53L613 57ZM1022 1L1020 10L1015 10L1012 -1ZM582 67L583 64L587 63L588 67ZM427 237L422 244L426 231ZM446 127L443 126L446 124ZM938 139L948 135L947 140ZM855 199L848 194L853 192ZM530 302L535 300L534 304ZM229 55L231 51L232 53ZM925 142L924 141L922 139L925 138ZM720 46L719 52L714 50ZM175 125L172 126L177 124ZM1110 206L1116 200L1116 208ZM873 24L875 23L876 26L873 27ZM596 256L603 252L605 256L603 262ZM349 17L357 20L354 25L349 23ZM122 125L116 116L123 117ZM833 227L830 224L833 219L836 224ZM458 179L466 180L463 184ZM1035 66L1042 64L1041 67ZM831 136L836 141L828 146L823 138ZM831 189L824 183L831 178L834 183ZM782 262L784 258L786 261L785 264ZM241 145L236 140L243 144ZM53 296L42 303L41 293ZM226 110L234 105L229 113ZM903 13L904 18L895 17L897 13ZM458 86L456 87L454 86L456 83ZM913 201L908 196L915 192ZM259 165L264 164L260 169ZM325 89L330 92L324 95ZM260 294L257 297L252 291ZM56 258L52 264L50 255ZM336 122L341 131L334 129ZM864 116L873 126L862 126L857 122ZM930 71L941 66L937 76ZM978 252L984 252L982 254ZM763 239L764 233L768 232L771 240ZM198 295L203 300L196 298ZM431 291L427 298L423 291ZM1050 19L1044 14L1053 10ZM839 290L836 283L841 282ZM208 285L198 288L198 281L206 277ZM276 175L276 179L273 180L272 177ZM842 223L844 219L847 220L847 223ZM513 20L513 13L515 23ZM203 194L202 200L198 194ZM28 257L23 265L23 250ZM150 293L142 293L143 286ZM761 43L759 48L758 45ZM564 16L559 10L562 8L567 16ZM344 168L348 167L347 174L341 172ZM870 274L881 272L876 280ZM735 196L729 200L733 194ZM180 180L182 175L184 180ZM437 157L434 154L435 152ZM594 89L599 83L596 93ZM953 0L957 -3L959 -1L956 5ZM804 30L798 28L798 25L804 23ZM798 271L797 273L793 273L794 268ZM885 56L882 52L890 54ZM1106 260L1102 271L1101 266ZM136 22L137 27L133 23ZM3 32L10 30L10 35ZM43 144L37 146L38 140ZM627 181L632 178L633 186L625 185ZM968 276L968 285L964 283ZM582 202L582 197L584 196ZM439 210L442 207L443 209ZM698 191L691 184L696 184ZM471 92L476 89L479 92L472 94ZM480 186L482 184L484 185ZM783 91L780 84L791 87ZM665 271L656 266L668 264ZM308 147L305 147L308 144ZM630 84L625 81L628 78ZM639 7L635 11L631 3L639 4ZM42 289L35 290L38 286ZM188 179L191 176L193 181ZM615 177L605 181L605 174ZM1045 13L1050 9L1049 16ZM700 175L705 176L697 180ZM1081 289L1088 292L1086 296L1082 293ZM423 170L412 169L414 163L420 165ZM886 299L881 296L887 292ZM490 28L484 32L483 29ZM267 52L271 54L267 53ZM527 8L519 8L523 1ZM663 83L660 92L656 83ZM203 53L202 58L198 57ZM723 193L725 201L718 204L717 192ZM1098 261L1101 257L1105 260ZM951 9L946 9L943 6L951 1ZM840 93L847 96L839 103ZM369 153L376 145L379 157ZM238 143L243 139L245 143ZM125 12L116 14L115 7L122 9ZM255 84L257 81L259 83L258 85ZM956 118L950 114L965 110ZM572 204L577 208L575 210ZM504 216L504 205L512 209ZM1112 272L1114 265L1119 273ZM447 76L453 69L458 77L451 79ZM106 162L109 161L111 164L107 165ZM442 96L431 98L437 91ZM802 298L801 303L797 300ZM288 284L294 289L289 292ZM233 103L233 99L239 101ZM351 37L351 32L353 34ZM56 120L50 112L54 111ZM1124 280L1127 280L1125 285ZM610 1L617 -1L616 4ZM708 282L715 278L710 285ZM98 42L95 42L98 37L101 38ZM719 303L726 300L726 305ZM385 76L386 70L389 71L389 76ZM46 24L45 28L39 25L41 21ZM556 132L554 126L558 124ZM266 11L271 14L264 18ZM298 159L299 148L304 153L305 156ZM918 170L917 168L920 166L922 169ZM1089 202L1087 201L1088 196ZM404 265L401 272L398 271ZM1010 52L1016 53L1014 55L1012 55ZM2 206L7 216L-2 205ZM767 62L758 69L757 59ZM474 154L482 158L471 165ZM659 120L660 122L657 123ZM721 66L726 69L721 70L720 67ZM1080 192L1082 192L1076 197ZM1023 10L1017 12L1016 10L1020 7ZM711 101L705 105L705 99ZM543 1L535 -1L537 -5ZM704 183L704 180L709 178ZM594 -1L586 3L592 -2ZM247 184L245 180L250 181ZM965 287L967 284L969 288ZM1123 287L1127 289L1125 292ZM619 255L623 250L624 254ZM777 300L772 302L776 291ZM978 156L988 151L989 160ZM696 187L692 183L697 180ZM320 44L319 46L315 45ZM155 82L152 79L158 76ZM957 144L953 137L959 137ZM619 289L618 295L615 291L616 289ZM1033 50L1029 48L1033 46ZM942 232L933 232L932 230ZM721 260L731 253L728 263ZM928 66L933 65L933 69L929 71ZM1004 297L1006 297L1010 301ZM752 57L757 58L755 61L753 60ZM559 191L553 193L553 187ZM388 23L389 25L384 24L388 19ZM309 190L304 186L308 183ZM1088 77L1091 76L1089 84ZM1096 28L1102 31L1096 35ZM1100 61L1096 64L1094 57L1099 54ZM157 141L159 138L163 140L163 145ZM727 2L732 -6L739 1ZM848 258L844 261L843 259L845 257ZM621 152L626 155L625 158ZM193 202L206 194L205 201ZM117 142L125 150L109 150ZM110 197L112 193L114 194L112 197ZM397 68L403 75L399 78ZM862 141L863 143L856 142ZM464 41L470 43L468 46ZM312 35L314 39L311 43L308 41ZM167 34L168 38L165 34ZM526 234L528 232L533 238L525 238ZM890 41L888 40L890 36ZM297 -4L291 4L286 -4ZM758 111L749 104L751 99L759 105ZM432 255L427 254L428 247ZM651 86L644 87L641 79L647 77ZM1052 34L1057 35L1055 40ZM693 115L693 122L690 116ZM774 152L769 159L767 151ZM472 0L462 -4L462 -8ZM149 72L151 81L144 81ZM263 224L256 223L258 214L264 218ZM710 94L703 91L708 86ZM501 41L499 41L496 35ZM1122 207L1118 212L1114 210L1114 205ZM246 162L241 159L248 157ZM993 18L989 11L992 7L998 14ZM315 26L315 20L317 24ZM711 12L709 5L714 5ZM688 235L691 237L687 239L685 238ZM826 284L830 291L824 294L819 287ZM612 179L624 184L615 186ZM315 85L321 89L317 89ZM192 243L189 241L194 240ZM892 235L895 238L881 233ZM1003 37L1010 42L1001 42ZM892 33L898 35L894 39ZM1126 249L1121 257L1116 249L1124 244ZM832 39L832 30L836 37ZM892 27L898 33L889 34ZM249 97L251 94L252 98ZM320 157L319 153L326 155ZM299 243L297 247L295 241ZM43 154L42 144L47 151ZM315 122L309 119L311 116L315 117ZM557 255L557 248L564 258ZM571 148L573 152L568 153ZM-6 254L4 254L-2 259ZM1040 105L1044 96L1052 104ZM270 206L272 205L274 210ZM406 185L416 186L405 192ZM464 277L457 274L465 272ZM287 61L286 59L288 57ZM699 201L688 199L698 197ZM373 119L373 123L367 120ZM529 79L532 80L532 82ZM841 23L832 23L841 17ZM470 246L465 245L463 239ZM98 160L99 149L102 157ZM138 10L132 15L131 7ZM525 6L528 16L522 11ZM485 270L491 264L492 267L490 270ZM145 179L139 180L145 165ZM571 85L565 90L569 83ZM765 107L763 108L764 104L766 105ZM273 44L277 42L281 45ZM293 164L297 171L291 169ZM294 261L290 253L301 254ZM864 214L857 209L867 208ZM737 308L732 299L743 303ZM864 28L861 32L859 30ZM12 163L16 166L14 168L11 166ZM47 59L43 59L47 52L49 55ZM155 73L149 75L153 72ZM652 186L656 192L649 196ZM910 -2L911 -1L906 1ZM118 232L108 231L113 225ZM218 84L215 81L217 78L220 82ZM488 247L490 242L493 243ZM372 135L369 140L369 133ZM270 69L275 71L270 73ZM156 153L160 159L153 163L149 154ZM127 225L127 227L121 229ZM566 258L559 252L568 249ZM1051 207L1048 211L1044 201ZM929 113L930 115L924 123L920 119ZM525 210L527 213L522 211ZM67 150L64 156L54 148ZM181 85L189 97L179 97L179 89ZM179 123L184 133L176 130ZM362 118L360 120L359 116L361 115ZM262 295L266 297L262 300L260 297ZM712 197L711 204L707 202ZM905 80L907 78L909 82ZM970 107L965 118L961 110ZM936 185L940 188L937 190ZM741 109L736 115L736 108ZM904 241L903 248L898 241L901 237ZM328 215L329 212L332 219ZM978 11L980 15L975 16L973 10ZM489 174L488 181L483 178ZM579 293L576 301L574 296ZM714 249L711 245L716 240ZM16 110L15 101L15 99L23 105ZM810 106L814 102L819 107L816 110ZM530 16L527 18L524 15L527 13Z" fill="#f5f5f5"/>
<path d="M553 44 L586 40 L600 60 L596 90 L580 118 L556 112 L548 80Z" fill="#c0e2c3" opacity=".9"/>
<path d="M268 152 L309 152 L313 181 L293 189 L270 181Z" fill="#c0e2c3" opacity=".9"/>
<path d="M313 185 L347 181 L371 201 L374 232 L347 247 L320 232Z" fill="#c0e2c3" opacity=".9"/>
<path d="M268 150 L293 150 L293 170 L276 176 L268 166Z" fill="#c0e2c3" opacity=".9"/>
<path d="M940 100 L960 90 L976 100 L996 96 L1016 106 L1012 140 L1004 152 L960 152 L950 130Z" fill="#c0e2c3" opacity=".9"/>
<path d="M976 66 L1000 62 L1016 72 L1020 90 L1000 96 L984 88Z" fill="#c0e2c3" opacity=".9"/>
<path d="M418 84 L440 88 L446 102 L430 110 L416 100Z" fill="#c0e2c3" opacity=".9"/>
<path d="M980 258 L1000 262 L1008 280 L996 296 L980 290Z" fill="#c0e2c3" opacity=".9"/>
<path d="M746 261 L790 259 L794 276 L788 290 L750 290Z" fill="#e6e6e6" opacity=".95"/>
<path d="M384 28 L410 26 L416 50 L400 72 L380 66 L376 44Z" fill="#e6e6e6" opacity=".95"/>
<path d="M840 0 L880 0 L876 24 L850 30Z" fill="#e6e6e6" opacity=".95"/>
<path d="M966 186 L990 188 L988 212 L968 208Z" fill="#e6e6e6" opacity=".95"/>
<path d="M966 240 L990 240 L988 262 L968 262Z" fill="#e6e6e6" opacity=".95"/>
<path d="M476 284 L500 282 L502 301 L478 301Z" fill="#e6e6e6" opacity=".95"/>
<path d="M250 106 L270 108 L268 124 L252 122Z" fill="#e6e6e6" opacity=".95"/>
<path d="M628 232 L656 230 L656 246 L630 248Z" fill="#e6e6e6" opacity=".95"/>
<path d="M555 180 L567 184 L573 180 L581 190 L590 196 L590 216 L577 218 L571 228 L559 222 L551 226 L553 214 L541 210 L539 206 L551 202 L557 194 L553 188Z" fill="#a8d3f8"/>
<path d="M1032 52 L1040 56 L1046 66 L1056 72 L1064 86 L1058 90 L1050 80 L1040 72 L1034 62Z" fill="#a8d3f8"/>
<path d="M1016 108 L1028 116 L1040 112 L1052 120 L1060 128 L1048 128 L1036 122 L1024 124Z" fill="#a8d3f8"/>
<path d="M610 96 L622 94 L626 102 L614 106Z" fill="#a8d3f8"/>
<path d="M624 84 L636 80 L638 88 L628 90Z" fill="#a8d3f8"/>
<path d="M708 132 L716 120 L723 115 L724 120 L718 128 L714 140 L708 150 L704 149 L710 138Z" fill="#a8d3f8"/>
<path d="M686 150 L694 151 L696 164 L692 176 L689 166Z" fill="#a8d3f8"/>
<path d="M694 227 L710 225 L710 228 L696 230Z" fill="#a8d3f8"/>
<path d="M452 168 L460 176 L472 186 L470 192 L458 186 L450 176Z" fill="#a8d3f8"/>
<path d="M468 226 L478 232 L490 238 L488 242 L474 238Z" fill="#a8d3f8"/>
<path d="M508 34 L516 44 L512 56 L504 62 L500 56 L506 48Z" fill="#a8d3f8"/>
<path d="M120 100 L130 104 L132 112 L124 110Z" fill="#a8d3f8"/>
<path d="M30 262 L38 260 L38 272 L32 272Z" fill="#a8d3f8"/>
<path d="M936 296 L950 294 L950 301 L936 301Z" fill="#a8d3f8"/>
<path d="M560 197 L568 192 L572 202 L564 207Z" fill="#cbedce"/>
<path d="M574 207 L583 204 L581 214Z" fill="#cbedce"/>
<path d="M556 212 L563 210 L562 218Z" fill="#cbedce"/>
<g fill="none" stroke="#a8d3f8" stroke-width="1.3"><path d="M293 56 L310 50 L322 40 L330 26"/><path d="M447 150 L452 168"/><path d="M470 192 L480 210 L476 226"/><path d="M512 56 L516 70 L508 84"/><path d="M1040 112 L1052 100 L1064 92"/><path d="M420 290 L430 296 L428 301"/><path d="M140 150 L146 158"/></g>
<g fill="none" stroke="#fff" stroke-width="1" stroke-linejoin="round"><path d="M200 20 L204 60 L196 90 L190 110"/><path d="M100 100 L140 106 L170 96 L200 100"/><path d="M300 190 L330 200 L350 216 L340 240"/><path d="M930 70 L960 90 L1000 84 L1040 100"/><path d="M870 240 L900 250 L940 246"/><path d="M1000 100 L990 130 L1000 150"/><path d="M30 180 L40 210 L30 240"/></g>
<g fill="none" stroke="#9a9a9a" stroke-width="1" stroke-dasharray="2 2.500"><path d="M137 0 L133 40 L128 90 L124 130 L120 150 L114 200 L108 262 L105 301"/><path d="M663 0 L670 40 L676 80 L684 128 L688 150 L695 190 L704 216 L710 238 L724 260 L730 276"/></g>
<g fill="none" stroke="#f6d98a" stroke-width="1.300" stroke-linejoin="round"><path d="M110 54 L120 66 L130 90 L134 112 L152 130 L160 152"/><path d="M100 0 L104 20 L103 50"/><path d="M212 11 L240 12 L260 8 L293 6 L330 10"/><path d="M212 11 L200 30 L180 36 L166 38 L132 42"/><path d="M212 11 L216 40 L222 66 L240 86 L250 100"/><path d="M180 36 L184 52 L178 80 L174 88 L164 100 L160 120 L156 140"/><path d="M0 136 L40 140 L80 138 L110 140 L124 150"/><path d="M0 50 L20 54 L58 54"/><path d="M0 80 L12 76 L20 60"/><path d="M0 118 L14 108 L20 92"/><path d="M523 30 L525 64 L513 84 L505 104 L499 122"/><path d="M526 64 L541 80 L545 94 L573 102 L586 96 L600 92 L614 92 L646 93"/><path d="M575 102 L559 120 L543 136 L533 152"/><path d="M469 30 L477 12 L483 0"/><path d="M413 138 L433 124 L451 114 L465 104 L479 96"/><path d="M293 20 L310 18 L327 26 L345 40"/><path d="M713 34 L726 44 L742 48 L752 62 L764 77"/><path d="M764 77 L772 100 L776 124 L780 152"/><path d="M674 58 L706 59 L742 58"/><path d="M764 77 L742 82 L722 88 L710 96 L698 108 L682 112"/><path d="M646 93 L654 80 L660 66 L674 58 L680 40 L676 20 L678 12"/><path d="M794 73 L786 96 L770 112 L752 124"/><path d="M861 106 L856 124 L848 140 L846 152"/><path d="M764 77 L798 73 L816 62 L842 50"/><path d="M863 10 L871.6 11 L880 28 L884 36 L883.6 70"/><path d="M990 52 L990 64 L976 80 L964 96 L956 112 L942 124 L926 138 L916 152"/><path d="M1016 90 L1012 112 L1006 132 L996 152"/><path d="M1022 80 L1036 76 L1046 60 L1052 50"/><path d="M861 106 L856 124 L848 140 L844 152"/><path d="M861 106 L872 128 L880 152"/><path d="M124 150 L125 200 L126 240 L127 262"/><path d="M254 150 L246 174 L254 200 L253 226 L256 254 L255 301"/><path d="M0 170 L20 180 L44 174 L62 166 L80 166"/><path d="M62 166 L58 210 L60 250 L58 278"/><path d="M0 212 L34 214 L62 210 L84 198 L98 196 L124 196"/><path d="M253 226 L240 242 L236 267"/><path d="M253 226 L280 227 L293 224 L323 230"/><path d="M147 250 L160 258 L170 275"/><path d="M431 195 L413 198 L393 204 L379 216 L373 236 L369 254 L363 270 L359 288"/><path d="M431 195 L451 210 L473 202 L493 190 L503 182"/><path d="M293 180 L313 182 L333 168 L343 158 L351 150"/><path d="M323 230 L329 254 L337 274 L359 288"/><path d="M554 172 L551 210 L553 230 L555 246 L559 262"/><path d="M507 259 L533 238 L537 226"/><path d="M778 150 L784 170 L786 186 L780 210 L774 226 L762 244 L750 256"/><path d="M848 150 L852 166 L850 184 L862 206 L866 216 L864 234 L866 262 L874 278"/><path d="M806 250 L826 246 L864 254"/><path d="M640 245 L626 234 L606 210 L586 198"/><path d="M654 162 L656 186 L642 204 L646 218 L658 230"/><path d="M660 238 L660 262 L656 278"/><path d="M730 278 L714 290 L702 301"/><path d="M738 262 L741 282 L740 301"/><path d="M906 220 L916 240 L930 257 L944 270 L958 277"/><path d="M994 150 L984 170 L982 192"/><path d="M982 192 L1016 192 L1036 180 L1052 166 L1076 158 L1096 166 L1126 164"/><path d="M850 184 L856 200 L866 216 L862 230 L866 254 L860 278 L856 301"/><path d="M880 150 L894 176 L892 190 L904 210 L906 220"/><path d="M920 150 L906 162 L894 176"/><path d="M1008 262 L1020 274 L1028 290 L1034 301"/><path d="M1076 260 L1109 260 L1129 252"/><path d="M586 120 L600 130 L620 126 L640 136 L662 128"/><path d="M586 60 L600 70 L610 92"/><path d="M1060 90 L1080 110 L1100 104 L1129 112"/><path d="M1080 137 L1100 160 L1129 170"/><path d="M1060 0 L1070 30 L1090 40"/><path d="M1129 20 L1110 30 L1100 44"/></g>
<g fill="none" stroke="#fbd877" stroke-width="2.100" stroke-linejoin="round" stroke-linecap="round"><path d="M841 33 L843 44 L847.6 54.6 L853 71 L855.8 87 L858 100 L861 106"/><path d="M401 54 L417 64 L425 76 L433 80 L453 81 L467 86 L479 96 L489 114 L499 124 L505 140 L508 152 L520 160 L533 150"/><path d="M533 150 L554 172 L573 184 L586 194 L610 215 L640 236 L660 238 L676 240 L698 250 L714 258 L730 262"/><path d="M58 54 L90 54 L103 50 L120 49 L132 53 L152 68 L166 72 L180 79 L200 91 L212 98 L226 100 L248 104 L258 112"/><path d="M262 122 L274 136 L290 146 L305 152 L333 168 L359 180 L379 202 L397 222 L411 240 L425 256 L439 268 L453 274 L469 280 L485 290"/><path d="M60 296 L76 288 L112 281 L140 279 L164 275 L184 280 L211 266 L236 267 L260 275 L293 280 L323 280 L359 288 L381 274 L413 278 L443 282 L469 284"/><path d="M586 270 L606 270 L626 278 L646 282 L670 281 L698 276 L726 273 L736 261 L760 258 L786 256 L806 250 L812 230 L828 225 L850 220 L866 216 L888 216 L906 220 L916 210 L936 202 L956 200"/><path d="M493 0 L495 24 L497 38 L483 54 L469 74 L465 86"/><path d="M505 150 L509 170 L503 194 L501 218 L499 234 L505 246 L507 259 L509 274 L493 290 L489 296"/><path d="M240 12 L243 30 L250 60 L253 84 L258 112 L256 126"/><path d="M202 195 L198 210 L200 230 L210 244 L211 264 L220 280 L221 301"/><path d="M59 0 L60 26 L61 54 L66 80 L77 106 L80 128 L81 152 L80 166 L92 184 L98 200 L94 220 L90 246 L86 266 L72 276 L64 290"/><path d="M92 56 L84 80 L77 106"/><path d="M586 26 L596 30 L610 46 L626 64 L638 84 L642 100 L652 116 L662 128 L666 152 L662 180 L656 200 L650 220 L658 232"/><path d="M713 34 L714 48 L704 60 L706 76 L710 94 L718 108 L724 120 L722 140 L720 152 L730 160 L738 168 L752 186 L754 200 L750 216 L752 234 L744 250 L736 258"/><path d="M887 83 L897.8 89.5 L908.7 89.5 L916.4 96 L927.3 102.6 L936 120 L948 140 L956 152 L962 170 L970 184 L976 194"/><path d="M976 194 L972 218 L984 244 L980 270 L988 290 L992 301"/><path d="M1012 0 L1010 52 L1024 66 L1022 80 L1016 90 L1024 100 L1034 112 L1042 128 L1048 143 L1048 150 L1058 180 L1062 206 L1076 230 L1094 244 L1109 260 L1102 280 L1104 301"/><path d="M220 170 L200 198 L176 212 L160 228 L148 236 L124 270 L108 282"/><path d="M437 196 L453 212 L457 222 L455 236 L463 262"/><path d="M988 200 L1010 210 L1026 226 L1036 240 L1056 252 L1086 268 L1110 280 L1129 288"/></g>
<g fill="none" stroke="#fde9a6" stroke-width=".8" stroke-linejoin="round" stroke-linecap="round"><path d="M841 33 L843 44 L847.6 54.6 L853 71 L855.8 87 L858 100 L861 106"/><path d="M401 54 L417 64 L425 76 L433 80 L453 81 L467 86 L479 96 L489 114 L499 124 L505 140 L508 152 L520 160 L533 150"/><path d="M533 150 L554 172 L573 184 L586 194 L610 215 L640 236 L660 238 L676 240 L698 250 L714 258 L730 262"/><path d="M58 54 L90 54 L103 50 L120 49 L132 53 L152 68 L166 72 L180 79 L200 91 L212 98 L226 100 L248 104 L258 112"/><path d="M262 122 L274 136 L290 146 L305 152 L333 168 L359 180 L379 202 L397 222 L411 240 L425 256 L439 268 L453 274 L469 280 L485 290"/><path d="M60 296 L76 288 L112 281 L140 279 L164 275 L184 280 L211 266 L236 267 L260 275 L293 280 L323 280 L359 288 L381 274 L413 278 L443 282 L469 284"/><path d="M586 270 L606 270 L626 278 L646 282 L670 281 L698 276 L726 273 L736 261 L760 258 L786 256 L806 250 L812 230 L828 225 L850 220 L866 216 L888 216 L906 220 L916 210 L936 202 L956 200"/><path d="M493 0 L495 24 L497 38 L483 54 L469 74 L465 86"/><path d="M505 150 L509 170 L503 194 L501 218 L499 234 L505 246 L507 259 L509 274 L493 290 L489 296"/><path d="M240 12 L243 30 L250 60 L253 84 L258 112 L256 126"/><path d="M202 195 L198 210 L200 230 L210 244 L211 264 L220 280 L221 301"/><path d="M59 0 L60 26 L61 54 L66 80 L77 106 L80 128 L81 152 L80 166 L92 184 L98 200 L94 220 L90 246 L86 266 L72 276 L64 290"/><path d="M92 56 L84 80 L77 106"/><path d="M586 26 L596 30 L610 46 L626 64 L638 84 L642 100 L652 116 L662 128 L666 152 L662 180 L656 200 L650 220 L658 232"/><path d="M713 34 L714 48 L704 60 L706 76 L710 94 L718 108 L724 120 L722 140 L720 152 L730 160 L738 168 L752 186 L754 200 L750 216 L752 234 L744 250 L736 258"/><path d="M887 83 L897.8 89.5 L908.7 89.5 L916.4 96 L927.3 102.6 L936 120 L948 140 L956 152 L962 170 L970 184 L976 194"/><path d="M976 194 L972 218 L984 244 L980 270 L988 290 L992 301"/><path d="M1012 0 L1010 52 L1024 66 L1022 80 L1016 90 L1024 100 L1034 112 L1042 128 L1048 143 L1048 150 L1058 180 L1062 206 L1076 230 L1094 244 L1109 260 L1102 280 L1104 301"/><path d="M220 170 L200 198 L176 212 L160 228 L148 236 L124 270 L108 282"/><path d="M437 196 L453 212 L457 222 L455 236 L463 262"/><path d="M988 200 L1010 210 L1026 226 L1036 240 L1056 252 L1086 268 L1110 280 L1129 288"/></g>
<g fill="none" stroke="#fbd877" stroke-width="3.200" stroke-linejoin="round" stroke-linecap="round"><path d="M56 54 L90 54 L103 50 L120 49 L132 53"/><path d="M393 48 L377 60 L369 76 L353 94 L333 112 L313 120 L293 121 L276 122 L258 128 L240 140 L232 150 L216 166 L196 188 L172 210 L152 230 L132 254 L112 278 L96 284 L76 288 L60 298 L50 301"/><path d="M393 0 L396 20 L398 38 L393 52 L399 68 L402 84 L401 100 L405 120 L411 146 L425 174 L437 196 L447 218 L457 240 L465 262 L473 278 L485 294 L489 301"/><path d="M327 0 L353 14 L373 22 L389 30 L397 38"/><path d="M398 38 L413 28 L433 18 L449 6 L455 0"/><path d="M398 38 L417 43 L437 40 L451 36 L469 30 L493 27 L523 30 L553 32 L586 26 L606 22 L630 20 L652 16 L676 11 L698 8 L726 4 L756 2 L786 1.6 L806 2 L829 1"/><path d="M373 68 L387 58 L405 50 L417 50 L425 40"/><path d="M869 0 L865 3 L858.5 6.5 L848 12 L839 21 L829 23 L820 25 L815 28 L804 36 L793 43.7 L778 66 L770 84 L762 108 L748 128 L740 146 L722 162 L706 176 L694 194 L680 216 L666 234 L646 248 L622 266 L602 278 L586 284 L563 286 L543 292 L513 298 L489 294"/><path d="M736 148 L736 170 L730 190 L724 210 L726 226 L734 242 L736 258 L734 270"/><path d="M845.4 0 L847.6 14 L854 25 L859.6 36 L867 48 L873.8 61 L881.4 71 L887 83 L890 98 L894 108 L902 124 L912 140 L920 150 L936 162 L948 176 L956 194 L962 210 L958 230 L956 254 L956 274 L954 301"/><path d="M976 194 L988 208 L1000 220 L1016 234 L1036 246 L1066 258 L1096 268 L1129 274"/><path d="M849.8 1 L858.5 4.4 L869.4 5.5 L880.3 6 L891.3 5.5 L896.7 8.7 L907.6 16.4 L918.5 23 L935 28.4 L953 29.5 L990 32 L1040 36 L1090 40 L1120 46 L1129 50"/><path d="M818 0 L818.7 13 L820 25"/><path d="M829 1 L830 14 L825.7 22"/><path d="M838.9 25 L849.8 32.8 L860.7 40.4 L871.6 41.5 L876 48 L881.4 61 L883.6 70"/><path d="M835.6 0 L836 11 L836.7 22 L841 33"/></g>
<g fill="none" stroke="#fde9a6" stroke-width="1.300" stroke-linejoin="round" stroke-linecap="round"><path d="M56 54 L90 54 L103 50 L120 49 L132 53"/><path d="M393 48 L377 60 L369 76 L353 94 L333 112 L313 120 L293 121 L276 122 L258 128 L240 140 L232 150 L216 166 L196 188 L172 210 L152 230 L132 254 L112 278 L96 284 L76 288 L60 298 L50 301"/><path d="M393 0 L396 20 L398 38 L393 52 L399 68 L402 84 L401 100 L405 120 L411 146 L425 174 L437 196 L447 218 L457 240 L465 262 L473 278 L485 294 L489 301"/><path d="M327 0 L353 14 L373 22 L389 30 L397 38"/><path d="M398 38 L413 28 L433 18 L449 6 L455 0"/><path d="M398 38 L417 43 L437 40 L451 36 L469 30 L493 27 L523 30 L553 32 L586 26 L606 22 L630 20 L652 16 L676 11 L698 8 L726 4 L756 2 L786 1.6 L806 2 L829 1"/><path d="M373 68 L387 58 L405 50 L417 50 L425 40"/><path d="M869 0 L865 3 L858.5 6.5 L848 12 L839 21 L829 23 L820 25 L815 28 L804 36 L793 43.7 L778 66 L770 84 L762 108 L748 128 L740 146 L722 162 L706 176 L694 194 L680 216 L666 234 L646 248 L622 266 L602 278 L586 284 L563 286 L543 292 L513 298 L489 294"/><path d="M736 148 L736 170 L730 190 L724 210 L726 226 L734 242 L736 258 L734 270"/><path d="M845.4 0 L847.6 14 L854 25 L859.6 36 L867 48 L873.8 61 L881.4 71 L887 83 L890 98 L894 108 L902 124 L912 140 L920 150 L936 162 L948 176 L956 194 L962 210 L958 230 L956 254 L956 274 L954 301"/><path d="M976 194 L988 208 L1000 220 L1016 234 L1036 246 L1066 258 L1096 268 L1129 274"/><path d="M849.8 1 L858.5 4.4 L869.4 5.5 L880.3 6 L891.3 5.5 L896.7 8.7 L907.6 16.4 L918.5 23 L935 28.4 L953 29.5 L990 32 L1040 36 L1090 40 L1120 46 L1129 50"/><path d="M818 0 L818.7 13 L820 25"/><path d="M829 1 L830 14 L825.7 22"/><path d="M838.9 25 L849.8 32.8 L860.7 40.4 L871.6 41.5 L876 48 L881.4 61 L883.6 70"/><path d="M835.6 0 L836 11 L836.7 22 L841 33"/></g>
<g transform="translate(144 64)"><path transform="scale(1 1)" d="M-7.500-8.300Q-3.800-5.600 0-8.300Q3.800-5.600 7.500-8.300L9.200-6.200Q7.600-3.200 8.600 0Q9.200 5.200 4 6.600Q1.200 7.100 0 8.400Q-1.200 7.100-4 6.600Q-9.200 5.200-8.600 0Q-7.600-3.200-9.200-6.200Z" fill="#fff" stroke="#3c3c3c" stroke-width="1"/><text x="0" y="3.600" text-anchor="middle" font-size="10" fill="#333" textLength="11" lengthAdjust="spacingAndGlyphs">82</text></g>
<g transform="translate(253 71.5)"><path transform="scale(1 1)" d="M-7.500-8.300Q-3.800-5.600 0-8.300Q3.800-5.600 7.500-8.300L9.200-6.200Q7.600-3.200 8.600 0Q9.200 5.200 4 6.600Q1.200 7.100 0 8.400Q-1.200 7.100-4 6.600Q-9.200 5.200-8.600 0Q-7.600-3.200-9.200-6.200Z" fill="#fff" stroke="#3c3c3c" stroke-width="1"/><text x="0" y="3.600" text-anchor="middle" font-size="10" fill="#333" textLength="11" lengthAdjust="spacingAndGlyphs">43</text></g>
<g transform="translate(85 176)"><path transform="scale(1 1)" d="M-7.500-8.300Q-3.800-5.600 0-8.300Q3.800-5.600 7.500-8.300L9.200-6.200Q7.600-3.200 8.600 0Q9.200 5.200 4 6.600Q1.200 7.100 0 8.400Q-1.200 7.100-4 6.600Q-9.200 5.200-8.600 0Q-7.600-3.200-9.200-6.200Z" fill="#fff" stroke="#3c3c3c" stroke-width="1"/><text x="0" y="3.600" text-anchor="middle" font-size="10" fill="#333" textLength="11" lengthAdjust="spacingAndGlyphs">45</text></g>
<g transform="translate(85 84)"><path transform="scale(1 1)" d="M-7.500-8.300Q-3.800-5.600 0-8.300Q3.800-5.600 7.500-8.300L9.200-6.200Q7.600-3.200 8.600 0Q9.200 5.200 4 6.600Q1.200 7.100 0 8.400Q-1.200 7.100-4 6.600Q-9.200 5.200-8.600 0Q-7.600-3.200-9.200-6.200Z" fill="#fff" stroke="#3c3c3c" stroke-width="1"/><text x="0" y="3.600" text-anchor="middle" font-size="10" fill="#333" textLength="11" lengthAdjust="spacingAndGlyphs">45</text></g>
<g transform="translate(199 229)"><path transform="scale(1 1)" d="M-7.500-8.300Q-3.800-5.600 0-8.300Q3.800-5.600 7.500-8.300L9.200-6.200Q7.600-3.200 8.600 0Q9.200 5.200 4 6.600Q1.200 7.100 0 8.400Q-1.200 7.100-4 6.600Q-9.200 5.200-8.600 0Q-7.600-3.200-9.200-6.200Z" fill="#fff" stroke="#3c3c3c" stroke-width="1"/><text x="0" y="3.600" text-anchor="middle" font-size="10" fill="#333" textLength="11" lengthAdjust="spacingAndGlyphs">43</text></g>
<g transform="translate(140 278)"><path transform="scale(1 1)" d="M-7.500-8.300Q-3.800-5.600 0-8.300Q3.800-5.600 7.500-8.300L9.200-6.200Q7.600-3.200 8.600 0Q9.200 5.200 4 6.600Q1.200 7.100 0 8.400Q-1.200 7.100-4 6.600Q-9.200 5.200-8.600 0Q-7.600-3.200-9.200-6.200Z" fill="#fff" stroke="#3c3c3c" stroke-width="1"/><text x="0" y="3.600" text-anchor="middle" font-size="10" fill="#333" textLength="11" lengthAdjust="spacingAndGlyphs">80</text></g>
<g transform="translate(412 244)"><path transform="scale(1 1)" d="M-7.500-8.300Q-3.800-5.600 0-8.300Q3.800-5.600 7.500-8.300L9.200-6.200Q7.600-3.200 8.600 0Q9.200 5.200 4 6.600Q1.200 7.100 0 8.400Q-1.200 7.100-4 6.600Q-9.200 5.200-8.600 0Q-7.600-3.200-9.200-6.200Z" fill="#fff" stroke="#3c3c3c" stroke-width="1"/><text x="0" y="3.600" text-anchor="middle" font-size="10" fill="#333" textLength="11" lengthAdjust="spacingAndGlyphs">82</text></g>
<g transform="translate(502 218)"><path transform="scale(1.2 1)" d="M-7.500-8.300Q-3.800-5.600 0-8.300Q3.800-5.600 7.500-8.300L9.200-6.200Q7.600-3.200 8.600 0Q9.200 5.200 4 6.600Q1.200 7.100 0 8.400Q-1.200 7.100-4 6.600Q-9.200 5.200-8.600 0Q-7.600-3.200-9.200-6.200Z" fill="#fff" stroke="#3c3c3c" stroke-width="1"/><text x="0" y="3.600" text-anchor="middle" font-size="9.5" fill="#333" textLength="15.5" lengthAdjust="spacingAndGlyphs">231</text></g>
<g transform="translate(311 280)"><path transform="scale(1 1)" d="M-7.500-8.300Q-3.800-5.600 0-8.300Q3.800-5.600 7.500-8.300L9.200-6.200Q7.600-3.200 8.600 0Q9.200 5.200 4 6.600Q1.200 7.100 0 8.400Q-1.200 7.100-4 6.600Q-9.200 5.200-8.600 0Q-7.600-3.200-9.200-6.200Z" fill="#fff" stroke="#3c3c3c" stroke-width="1"/><text x="0" y="3.600" text-anchor="middle" font-size="10" fill="#333" textLength="11" lengthAdjust="spacingAndGlyphs">80</text></g>
<g transform="translate(443 83)"><path transform="scale(1.2 1)" d="M-7.500-8.300Q-3.800-5.600 0-8.300Q3.800-5.600 7.500-8.300L9.200-6.200Q7.600-3.200 8.600 0Q9.200 5.200 4 6.600Q1.200 7.100 0 8.400Q-1.200 7.100-4 6.600Q-9.200 5.200-8.600 0Q-7.600-3.200-9.200-6.200Z" fill="#fff" stroke="#3c3c3c" stroke-width="1"/><text x="0" y="3.600" text-anchor="middle" font-size="9.5" fill="#333" textLength="15.5" lengthAdjust="spacingAndGlyphs">280</text></g>
<g transform="translate(516 144)"><path transform="scale(1.2 1)" d="M-7.500-8.300Q-3.800-5.600 0-8.300Q3.800-5.600 7.500-8.300L9.200-6.200Q7.600-3.200 8.600 0Q9.200 5.200 4 6.600Q1.200 7.100 0 8.400Q-1.200 7.100-4 6.600Q-9.200 5.200-8.600 0Q-7.600-3.200-9.200-6.200Z" fill="#fff" stroke="#3c3c3c" stroke-width="1"/><text x="0" y="3.600" text-anchor="middle" font-size="9.5" fill="#333" textLength="15.5" lengthAdjust="spacingAndGlyphs">280</text></g>
<g transform="translate(630 72)"><path transform="scale(1.2 1)" d="M-7.500-8.300Q-3.800-5.600 0-8.300Q3.800-5.600 7.500-8.300L9.200-6.200Q7.600-3.200 8.600 0Q9.200 5.200 4 6.600Q1.200 7.100 0 8.400Q-1.200 7.100-4 6.600Q-9.200 5.200-8.600 0Q-7.600-3.200-9.200-6.200Z" fill="#fff" stroke="#3c3c3c" stroke-width="1"/><text x="0" y="3.600" text-anchor="middle" font-size="9.5" fill="#333" textLength="15.5" lengthAdjust="spacingAndGlyphs">431</text></g>
<g transform="translate(663 138)"><path transform="scale(1.2 1)" d="M-7.500-8.300Q-3.800-5.600 0-8.300Q3.800-5.600 7.500-8.300L9.200-6.200Q7.600-3.200 8.600 0Q9.200 5.200 4 6.600Q1.200 7.100 0 8.400Q-1.200 7.100-4 6.600Q-9.200 5.200-8.600 0Q-7.600-3.200-9.200-6.200Z" fill="#fff" stroke="#3c3c3c" stroke-width="1"/><text x="0" y="3.600" text-anchor="middle" font-size="9.5" fill="#333" textLength="15.5" lengthAdjust="spacingAndGlyphs">431</text></g>
<g transform="translate(685 248)"><path transform="scale(1.2 1)" d="M-7.500-8.300Q-3.800-5.600 0-8.300Q3.800-5.600 7.500-8.300L9.200-6.200Q7.600-3.200 8.600 0Q9.200 5.200 4 6.600Q1.200 7.100 0 8.400Q-1.200 7.100-4 6.600Q-9.200 5.200-8.600 0Q-7.600-3.200-9.200-6.200Z" fill="#fff" stroke="#3c3c3c" stroke-width="1"/><text x="0" y="3.600" text-anchor="middle" font-size="9.5" fill="#333" textLength="15.5" lengthAdjust="spacingAndGlyphs">280</text></g>
<g transform="translate(656 281)"><path transform="scale(1 1)" d="M-7.500-8.300Q-3.800-5.600 0-8.300Q3.800-5.600 7.500-8.300L9.200-6.200Q7.600-3.200 8.600 0Q9.200 5.200 4 6.600Q1.200 7.100 0 8.400Q-1.200 7.100-4 6.600Q-9.200 5.200-8.600 0Q-7.600-3.200-9.200-6.200Z" fill="#fff" stroke="#3c3c3c" stroke-width="1"/><text x="0" y="3.600" text-anchor="middle" font-size="10" fill="#333" textLength="11" lengthAdjust="spacingAndGlyphs">80</text></g>
<g transform="translate(828 226)"><path transform="scale(1 1)" d="M-7.500-8.300Q-3.800-5.600 0-8.300Q3.800-5.600 7.500-8.300L9.200-6.200Q7.600-3.200 8.600 0Q9.200 5.200 4 6.600Q1.200 7.100 0 8.400Q-1.200 7.100-4 6.600Q-9.200 5.200-8.600 0Q-7.600-3.200-9.200-6.200Z" fill="#fff" stroke="#3c3c3c" stroke-width="1"/><text x="0" y="3.600" text-anchor="middle" font-size="10" fill="#333" textLength="11" lengthAdjust="spacingAndGlyphs">80</text></g>
<g transform="translate(888 213)"><path transform="scale(1 1)" d="M-7.500-8.300Q-3.800-5.600 0-8.300Q3.800-5.600 7.500-8.300L9.200-6.200Q7.600-3.200 8.600 0Q9.200 5.200 4 6.600Q1.200 7.100 0 8.400Q-1.200 7.100-4 6.600Q-9.200 5.200-8.600 0Q-7.600-3.200-9.200-6.200Z" fill="#fff" stroke="#3c3c3c" stroke-width="1"/><text x="0" y="3.600" text-anchor="middle" font-size="10" fill="#333" textLength="11" lengthAdjust="spacingAndGlyphs">80</text></g>
<g transform="translate(940 130)"><path transform="scale(1 1)" d="M-7.500-8.300Q-3.800-5.600 0-8.300Q3.800-5.600 7.500-8.300L9.200-6.200Q7.600-3.200 8.600 0Q9.200 5.200 4 6.600Q1.200 7.100 0 8.400Q-1.200 7.100-4 6.600Q-9.200 5.200-8.600 0Q-7.600-3.200-9.200-6.200Z" fill="#fff" stroke="#3c3c3c" stroke-width="1"/><text x="0" y="3.600" text-anchor="middle" font-size="10" fill="#333" textLength="11" lengthAdjust="spacingAndGlyphs">23</text></g>
<g transform="translate(1009 254)"><path transform="scale(1 1)" d="M-7.500-8.300Q-3.800-5.600 0-8.300Q3.800-5.600 7.500-8.300L9.200-6.200Q7.600-3.200 8.600 0Q9.200 5.200 4 6.600Q1.200 7.100 0 8.400Q-1.200 7.100-4 6.600Q-9.200 5.200-8.600 0Q-7.600-3.200-9.200-6.200Z" fill="#fff" stroke="#3c3c3c" stroke-width="1"/><text x="0" y="3.600" text-anchor="middle" font-size="10" fill="#333" textLength="11" lengthAdjust="spacingAndGlyphs">23</text></g>
<g transform="translate(1074 228)"><path transform="scale(1.2 1)" d="M-7.500-8.300Q-3.800-5.600 0-8.300Q3.800-5.600 7.500-8.300L9.200-6.200Q7.600-3.200 8.600 0Q9.200 5.200 4 6.600Q1.200 7.100 0 8.400Q-1.200 7.100-4 6.600Q-9.200 5.200-8.600 0Q-7.600-3.200-9.200-6.200Z" fill="#fff" stroke="#3c3c3c" stroke-width="1"/><text x="0" y="3.600" text-anchor="middle" font-size="9.5" fill="#333" textLength="15.5" lengthAdjust="spacingAndGlyphs">441</text></g>
<g transform="translate(345 9)"><g transform="scale(1 1)"><path d="M-7.600-4.400H7.600Q7.900 3.500 0 8.200Q-7.900 3.500-7.600-4.400Z" fill="#3674cb"/><path d="M-7-8Q-3.500-6.600 0-8Q3.500-6.600 7-8L7.600-5.200H-7.600Z" fill="#d9433d"/></g><text x="0" y="4.200" text-anchor="middle" font-size="10" font-weight="bold" fill="#fff">22</text></g>
<g transform="translate(452 36)"><g transform="scale(1 1)"><path d="M-7.600-4.400H7.600Q7.900 3.500 0 8.200Q-7.900 3.500-7.600-4.400Z" fill="#3674cb"/><path d="M-7-8Q-3.500-6.600 0-8Q3.500-6.600 7-8L7.600-5.200H-7.600Z" fill="#d9433d"/></g><text x="0" y="4.200" text-anchor="middle" font-size="10" font-weight="bold" fill="#fff">20</text></g>
<g transform="translate(630 21)"><g transform="scale(1 1)"><path d="M-7.600-4.400H7.600Q7.900 3.500 0 8.200Q-7.900 3.500-7.600-4.400Z" fill="#3674cb"/><path d="M-7-8Q-3.500-6.600 0-8Q3.500-6.600 7-8L7.600-5.200H-7.600Z" fill="#d9433d"/></g><text x="0" y="4.200" text-anchor="middle" font-size="10" font-weight="bold" fill="#fff">20</text></g>
<g transform="translate(793 51)"><g transform="scale(1 1)"><path d="M-7.600-4.400H7.600Q7.900 3.500 0 8.200Q-7.900 3.500-7.600-4.400Z" fill="#3674cb"/><path d="M-7-8Q-3.500-6.600 0-8Q3.500-6.600 7-8L7.600-5.200H-7.600Z" fill="#d9433d"/></g><text x="0" y="4.200" text-anchor="middle" font-size="10" font-weight="bold" fill="#fff">85</text></g>
<g transform="translate(897 113)"><g transform="scale(1 1)"><path d="M-7.600-4.400H7.600Q7.900 3.500 0 8.200Q-7.900 3.500-7.600-4.400Z" fill="#3674cb"/><path d="M-7-8Q-3.500-6.600 0-8Q3.500-6.600 7-8L7.600-5.200H-7.600Z" fill="#d9433d"/></g><text x="0" y="4.200" text-anchor="middle" font-size="10" font-weight="bold" fill="#fff">75</text></g>
<g transform="translate(201 183)"><g transform="scale(1 1)"><path d="M-7.600-4.400H7.600Q7.900 3.500 0 8.200Q-7.900 3.500-7.600-4.400Z" fill="#3674cb"/><path d="M-7-8Q-3.500-6.600 0-8Q3.500-6.600 7-8L7.600-5.200H-7.600Z" fill="#d9433d"/></g><text x="0" y="4.200" text-anchor="middle" font-size="10" font-weight="bold" fill="#fff">20</text></g>
<g transform="translate(679 211)"><g transform="scale(1 1)"><path d="M-7.600-4.400H7.600Q7.900 3.500 0 8.200Q-7.900 3.500-7.600-4.400Z" fill="#3674cb"/><path d="M-7-8Q-3.500-6.600 0-8Q3.500-6.600 7-8L7.600-5.200H-7.600Z" fill="#d9433d"/></g><text x="0" y="4.200" text-anchor="middle" font-size="10" font-weight="bold" fill="#fff">85</text></g>
<g transform="translate(723 202)"><g transform="scale(1.22 1)"><path d="M-7.600-4.400H7.600Q7.900 3.500 0 8.200Q-7.900 3.500-7.600-4.400Z" fill="#3674cb"/><path d="M-7-8Q-3.500-6.600 0-8Q3.500-6.600 7-8L7.600-5.200H-7.600Z" fill="#d9433d"/></g><text x="0" y="4.200" text-anchor="middle" font-size="9.5" font-weight="bold" fill="#fff">185</text></g>
<g transform="translate(990 210)"><g transform="scale(1 1)"><path d="M-7.600-4.400H7.600Q7.900 3.500 0 8.200Q-7.900 3.500-7.600-4.400Z" fill="#3674cb"/><path d="M-7-8Q-3.500-6.600 0-8Q3.500-6.600 7-8L7.600-5.200H-7.600Z" fill="#d9433d"/></g><text x="0" y="4.200" text-anchor="middle" font-size="10" font-weight="bold" fill="#fff">16</text></g>
<circle cx="63" cy="28" r="2.200" fill="#fff" stroke="#3a3a3a" stroke-width="1.200"/>
<circle cx="103" cy="54" r="2.200" fill="#fff" stroke="#3a3a3a" stroke-width="1.200"/>
<circle cx="212" cy="11" r="2.200" fill="#fff" stroke="#3a3a3a" stroke-width="1.200"/>
<circle cx="259" cy="114" r="2.200" fill="#fff" stroke="#3a3a3a" stroke-width="1.200"/>
<circle cx="372" cy="72" r="2.200" fill="#fff" stroke="#3a3a3a" stroke-width="1.200"/>
<circle cx="398" cy="98" r="2.200" fill="#fff" stroke="#3a3a3a" stroke-width="1.200"/>
<circle cx="526" cy="64" r="2.200" fill="#fff" stroke="#3a3a3a" stroke-width="1.200"/>
<circle cx="499" cy="121" r="2.200" fill="#fff" stroke="#3a3a3a" stroke-width="1.200"/>
<circle cx="576" cy="16" r="2.200" fill="#fff" stroke="#3a3a3a" stroke-width="1.200"/>
<circle cx="713" cy="34" r="2.200" fill="#fff" stroke="#3a3a3a" stroke-width="1.200"/>
<circle cx="764" cy="77" r="2.200" fill="#fff" stroke="#3a3a3a" stroke-width="1.200"/>
<circle cx="721" cy="151" r="2.200" fill="#fff" stroke="#3a3a3a" stroke-width="1.200"/>
<circle cx="883" cy="63" r="2.200" fill="#fff" stroke="#3a3a3a" stroke-width="1.200"/>
<circle cx="861" cy="106" r="2.200" fill="#fff" stroke="#3a3a3a" stroke-width="1.200"/>
<circle cx="935" cy="30" r="2.200" fill="#fff" stroke="#3a3a3a" stroke-width="1.200"/>
<circle cx="1049" cy="143" r="2.200" fill="#fff" stroke="#3a3a3a" stroke-width="1.200"/>
<circle cx="63" cy="210" r="2.200" fill="#fff" stroke="#3a3a3a" stroke-width="1.200"/>
<circle cx="202" cy="195" r="2.200" fill="#fff" stroke="#3a3a3a" stroke-width="1.200"/>
<circle cx="147" cy="250" r="2.200" fill="#fff" stroke="#3a3a3a" stroke-width="1.200"/>
<circle cx="211" cy="264" r="2.200" fill="#fff" stroke="#3a3a3a" stroke-width="1.200"/>
<circle cx="53" cy="299" r="2.200" fill="#fff" stroke="#3a3a3a" stroke-width="1.200"/>
<circle cx="431" cy="195" r="2.200" fill="#fff" stroke="#3a3a3a" stroke-width="1.200"/>
<circle cx="554" cy="172" r="2.200" fill="#fff" stroke="#3a3a3a" stroke-width="1.200"/>
<circle cx="507" cy="259" r="2.200" fill="#fff" stroke="#3a3a3a" stroke-width="1.200"/>
<circle cx="359" cy="288" r="2.200" fill="#fff" stroke="#3a3a3a" stroke-width="1.200"/>
<circle cx="489" cy="294" r="2.200" fill="#fff" stroke="#3a3a3a" stroke-width="1.200"/>
<circle cx="599" cy="282" r="2.200" fill="#fff" stroke="#3a3a3a" stroke-width="1.200"/>
<circle cx="640" cy="245" r="2.200" fill="#fff" stroke="#3a3a3a" stroke-width="1.200"/>
<circle cx="730" cy="277" r="2.200" fill="#fff" stroke="#3a3a3a" stroke-width="1.200"/>
<circle cx="742" cy="300" r="2.200" fill="#fff" stroke="#3a3a3a" stroke-width="1.200"/>
<circle cx="850" cy="184" r="2.200" fill="#fff" stroke="#3a3a3a" stroke-width="1.200"/>
<circle cx="977" cy="194" r="2.200" fill="#fff" stroke="#3a3a3a" stroke-width="1.200"/>
<circle cx="978" cy="243" r="2.200" fill="#fff" stroke="#3a3a3a" stroke-width="1.200"/>
<circle cx="930" cy="257" r="2.200" fill="#fff" stroke="#3a3a3a" stroke-width="1.200"/>
<circle cx="958" cy="277" r="2.200" fill="#fff" stroke="#3a3a3a" stroke-width="1.200"/>
<circle cx="1109" cy="260" r="2.200" fill="#fff" stroke="#3a3a3a" stroke-width="1.200"/>
<circle cx="1126" cy="164" r="2.200" fill="#fff" stroke="#3a3a3a" stroke-width="1.200"/>
<g stroke="#fff" stroke-width="2.600" stroke-linejoin="round" paint-order="stroke" style="paint-order:stroke">
<text x="41" y="22.5" font-size="9.9" fill="#5c5c5c">West Point</text>
<text x="76" y="49" font-size="12" fill="#5c5c5c">Columbus</text>
<text x="194" y="5" font-size="11" fill="#5c5c5c">Fayette</text>
<text x="232" y="110" font-size="13" fill="#5c5c5c">Tuscaloosa</text>
<text x="362" y="40" font-size="13.5" fill="#2b2b2b">Birmingham</text>
<text x="377" y="66" font-size="13" fill="#5c5c5c">Hoover</text>
<text x="346" y="86" font-size="12" fill="#5c5c5c">Bessemer</text>
<text x="379" y="110" font-size="11" fill="#5c5c5c">Pelham</text>
<text x="503" y="61" font-size="11" fill="#5c5c5c">Talladega</text>
<text x="474" y="118" font-size="11" fill="#5c5c5c">Sylacauga</text>
<text x="552" y="10" font-size="11" fill="#5c5c5c">Anniston</text>
<text x="690" y="28" font-size="11" fill="#5c5c5c">Carrollton</text>
<text x="745" y="72" font-size="11" fill="#5c5c5c">Newnan</text>
<text x="699" y="148" font-size="11" fill="#5c5c5c">LaGrange</text>
<text x="854" y="58" font-size="11" fill="#5c5c5c">McDonough</text>
<text x="847" y="102" font-size="11" fill="#5c5c5c">Griffin</text>
<text x="911" y="26" font-size="11" fill="#5c5c5c">Covington</text>
<text x="1020" y="138" font-size="11" fill="#5c5c5c">Milledgeville</text>
<text x="45" y="206" font-size="11" fill="#5c5c5c">De Kalb</text>
<text x="188" y="207" font-size="11" fill="#5c5c5c">Eutaw</text>
<text x="123" y="246" font-size="11" fill="#5c5c5c">Livingston</text>
<text x="185" y="260" font-size="11" fill="#5c5c5c">Demopolis</text>
<text x="28" y="291" font-size="11" fill="#5c5c5c">Meridian</text>
<text x="413" y="190" font-size="11" fill="#5c5c5c">Clanton</text>
<text x="518" y="168" font-size="11" fill="#5c5c5c">Alexander City</text>
<text x="481" y="253" font-size="11" fill="#5c5c5c">Wetumpka</text>
<text x="344" y="283" font-size="12" fill="#5c5c5c">Selma</text>
<text x="452" y="288" font-size="13.6" fill="#2b2b2b">Montgomery</text>
<text x="577" y="278" font-size="11" fill="#5c5c5c">Tuskegee</text>
<text x="624" y="238" font-size="12" fill="#5c5c5c">Auburn</text>
<text x="700" y="270" font-size="13.4" fill="#2b2b2b">Columbus</text>
<text x="705" y="294" font-size="11" fill="#5c5c5c">Fort Benning</text>
<text x="823" y="180" font-size="11" fill="#5c5c5c">Thomaston</text>
<text x="957" y="189" font-size="13.2" fill="#2b2b2b">Macon</text>
<text x="936" y="238" font-size="12.6" fill="#2b2b2b">Warner Robins</text>
<text x="905" y="252" font-size="11" fill="#5c5c5c">Fort Valley</text>
<text x="947" y="272" font-size="11" fill="#5c5c5c">Perry</text>
<text x="1094" y="254" font-size="11" fill="#5c5c5c">Dublin</text>
<text x="1096" y="160" font-size="11" fill="#5c5c5c">Sandersville</text>
<text x="8" y="57" font-size="12" fill="#5c5c5c">Starkville</text>
<text x="-56" y="221" font-size="11" fill="#5c5c5c">Philadelphia</text>
<text x="-38" y="130" font-size="11" fill="#5c5c5c">Louisville</text>
</g>
<circle cx="396" cy="39" r="7.200" fill="#0c6fe4" stroke="#fff" stroke-width="1.200"/>
<circle cx="398" cy="43" r="7.200" fill="#0c6fe4" stroke="#fff" stroke-width="1.200"/>
<circle cx="410" cy="40" r="8.300" fill="#111"/>
<circle cx="409" cy="40" r="7.200" fill="#0c6fe4" stroke="#fff" stroke-width="1.200"/>
<circle cx="394" cy="60" r="7.200" fill="#0c6fe4" stroke="#fff" stroke-width="1.200"/>
<circle cx="384" cy="64" r="8.300" fill="#111"/>
<circle cx="383" cy="64" r="7.200" fill="#0c6fe4" stroke="#fff" stroke-width="1.200"/>
<circle cx="398" cy="68" r="8.300" fill="#111"/>
<circle cx="397" cy="68" r="7.200" fill="#0c6fe4" stroke="#fff" stroke-width="1.200"/>
<circle cx="383" cy="77" r="7.200" fill="#0c6fe4" stroke="#fff" stroke-width="1.200"/>
<circle cx="550" cy="194" r="7.200" fill="#0c6fe4" stroke="#fff" stroke-width="1.200"/>
<circle cx="540" cy="229" r="7.200" fill="#0c6fe4" stroke="#fff" stroke-width="1.200"/>
<circle cx="621" cy="242" r="7.200" fill="#0c6fe4" stroke="#fff" stroke-width="1.200"/>
<circle cx="640" cy="232" r="7.200" fill="#0c6fe4" stroke="#fff" stroke-width="1.200"/>
<circle cx="644" cy="233" r="7.200" fill="#0c6fe4" stroke="#fff" stroke-width="1.200"/>
<circle cx="659" cy="226" r="8.300" fill="#111"/>
<circle cx="658" cy="226" r="7.200" fill="#0c6fe4" stroke="#fff" stroke-width="1.200"/>
<circle cx="747" cy="243" r="7.200" fill="#0c6fe4" stroke="#fff" stroke-width="1.200"/>
</svg>
<div class="abs" style="left:10px;top:11px;width:40px;height:81px;background:#fff;border-radius:2px;box-shadow:0 1px 4px -1px rgba(0,0,0,.3)"></div>
<div class="abs" style="left:15px;top:51px;width:30px;height:1px;background:#e6e6e6"></div>
<div class="abs" style="left:21px;top:29px;width:18px;height:4px;background:#666"></div><div class="abs" style="left:28px;top:22px;width:4px;height:18px;background:#666"></div>
<div class="abs" style="left:21px;top:70px;width:18px;height:4px;background:#666"></div>
<div class="abs" style="left:951px;top:11px;width:168px;height:40px;background:#fff;border-radius:2px;box-shadow:0 1px 4px -1px rgba(0,0,0,.3)"></div>
<div class="abs" style="left:1020px;top:11px;width:1px;height:40px;background:#ececec"></div>
<div class="abs" style="left:951px;top:11px;width:69px;height:40px;line-height:40px;text-align:center;font-size:17.500px;color:#000;-webkit-text-stroke:.55px #000;letter-spacing:.1px">Map</div>
<div class="abs" style="left:1021px;top:11px;width:98px;height:40px;line-height:40px;text-align:center;font-size:18px;color:#565656;letter-spacing:.25px">Satellite</div>
<div class="abs" style="left:1079px;top:71px;width:40px;height:40px;background:#fff;border-radius:2px;box-shadow:0 1px 4px -1px rgba(0,0,0,.3)"></div>
<svg class="abs" style="left:1090px;top:82px" width="18" height="18" viewBox="0 0 18 18"><path d="M1.500 6V1.500H6M12 1.500h4.500V6M16.500 12v4.500H12M6 16.500H1.500V12" fill="none" stroke="#666" stroke-width="2.200"/></svg>
<div class="abs" style="left:6px;top:273px;font-size:19.500px;line-height:26px;letter-spacing:-.25px;-webkit-text-stroke:.3px;white-space:nowrap;text-shadow:0 0 2px #fff,0 0 2px #fff"><span style="color:#4285f4">G</span><span style="color:#ea4335">o</span><span style="color:#fbbc05">o</span><span style="color:#4285f4">g</span><span style="color:#34a853">l</span><span style="color:#ea4335">e</span></div>
<div class="abs" style="left:744px;top:287px;width:385px;height:14px;background:rgba(245,245,245,.72)"></div>
<div class="abs" style="left:750px;top:287px;font-size:9.800px;line-height:14px;color:#222;white-space:nowrap">Keyboard shortcuts</div>
<div class="abs" style="left:848px;top:287px;font-size:9.800px;line-height:14px;color:#222;white-space:nowrap">Map data ©2021 Google</div>
<div class="abs" style="left:969px;top:287px;font-size:9.800px;line-height:14px;color:#222;white-space:nowrap">Terms of Use</div>
<div class="abs" style="left:1040px;top:287px;font-size:9.800px;line-height:14px;color:#222;white-space:nowrap">Report a map error</div>
  </div>

  <!-- table -->
  <div class="vl" style="left:277px"></div>
  <div class="vl" style="left:572px"></div>
  <div class="vl" style="left:744px"></div>
  <div class="vl" style="left:979px"></div>
  <div class="vl" style="left:1068px"></div>
  <div class="vl" style="left:1181px"></div>
  <div class="vl" style="left:1405px"></div>
  <div class="hl" style="top:629px;background:#ebebeb"></div>
  <div class="hl" style="top:676px;height:2px;background:#c8c8c8"></div>
  <div class="th" style="left:290px">Quote</div>
  <div class="th" style="left:585px">Name / Description</div>
  <div class="th" style="left:757px">Address</div>
  <div class="th" style="left:992px">Status</div>
  <div class="th" style="left:1080px">Amount</div>
  <svg class="srt" style="left:551px" viewBox="0 0 14 14"><path d="M3.500 13V1.500M1 4l2.500-2.700L6 4M10.500 1v11.500M8 10l2.500 2.700L13 10" fill="none" stroke="#cfcfcf" stroke-width="1"/></svg>
  <svg class="srt" style="left:723px" viewBox="0 0 14 14"><path d="M3.500 13V1.500M1 4l2.500-2.700L6 4M10.500 1v11.500M8 10l2.500 2.700L13 10" fill="none" stroke="#cfcfcf" stroke-width="1"/></svg>
  <svg class="srt" style="left:958px" viewBox="0 0 14 14"><path d="M3.500 13V1.500M1 4l2.500-2.700L6 4M10.500 1v11.500M8 10l2.500 2.700L13 10" fill="none" stroke="#cfcfcf" stroke-width="1"/></svg>
  <svg class="srt" style="left:1046px" viewBox="0 0 14 14"><path d="M3.500 13V1.500M1 4l2.500-2.700L6 4M10.500 1v11.500M8 10l2.500 2.700L13 10" fill="none" stroke="#cfcfcf" stroke-width="1"/></svg>
  <svg class="srt" style="left:1160px" viewBox="0 0 14 14"><path d="M3.500 13V1.500M1 4l2.500-2.700L6 4M10.500 1v11.500M8 10l2.500 2.700L13 10" fill="none" stroke="#cfcfcf" stroke-width="1"/></svg>
  <svg class="srt" style="left:1384px" viewBox="0 0 14 14"><path d="M3.500 13V1.500M1 4l2.500-2.700L6 4M10.500 1v11.500M8 10l2.500 2.700L13 10" fill="none" stroke="#cfcfcf" stroke-width="1"/></svg>
  <div class="hl" style="top:723px"></div>
  <div class="td" style="left:290px;top:690px"><a style="letter-spacing:.35px">Quote #128592</a> (One Time)</div>
  <div class="td" style="left:585px;top:690px">Aaron Wize</div>
  <div class="td" style="left:757px;top:690px">4220 Glasscott Xingz, Hoo...</div>
  <div class="td" style="left:992px;top:690px">Pending</div>
  <div class="td" style="left:1080px;top:690px;letter-spacing:.35px">$7,356.80</div>
  <div class="td" style="left:1194px;top:690px;letter-spacing:-.15px"><a>Schedule Job</a> or <a>Cancel Quote</a></div>
  <div class="hl" style="top:769px"></div>
  <div class="td" style="left:290px;top:736px"><a style="letter-spacing:.35px">Quote #126110</a> (One Time)</div>
  <div class="td" style="left:585px;top:736px">Bernhard Long</div>
  <div class="td" style="left:757px;top:736px">123 1st Avenue, Hoover AL...</div>
  <div class="td" style="left:992px;top:736px">Open</div>
  <div class="td" style="left:1080px;top:736px;letter-spacing:.35px">$1,386.00</div>
  <div class="td" style="left:1194px;top:736px;letter-spacing:-.15px"><a>Schedule Job</a> or <a>Cancel Quote</a></div>
  <div class="hl" style="top:815px"></div>
  <div class="td" style="left:290px;top:782px"><a style="letter-spacing:.35px">Quote #121877</a> (One Time)</div>
  <div class="res" style="top:782px">Residential</div>
  <div class="td" style="left:585px;top:782px">Tommy Walter</div>
  <div class="td" style="left:757px;top:782px">685 Russet Hill Circle, H...</div>
  <div class="td" style="left:992px;top:782px">Open</div>
  <div class="td" style="left:1080px;top:782px;letter-spacing:.35px">$6,365.30</div>
  <div class="td" style="left:1194px;top:782px;letter-spacing:-.15px"><a>Schedule Job</a> or <a>Cancel Quote</a></div>
  <div class="hl" style="top:861px"></div>
  <div class="td" style="left:290px;top:828px"><a style="letter-spacing:.35px">Quote #121660</a> (One Time)</div>
  <div class="td" style="left:585px;top:828px">Austin Riley</div>
  <div class="td" style="left:757px;top:828px">123 Main Street, Hoover A...</div>
  <div class="td" style="left:992px;top:828px">Open</div>
  <div class="td" style="left:1080px;top:828px;letter-spacing:.35px">$0.00</div>
  <div class="td" style="left:1194px;top:828px;letter-spacing:-.15px"><a>Schedule Job</a> or <a>Cancel Quote</a></div>
  <div class="hl" style="top:907px"></div>
  <div class="td" style="left:290px;top:874px"><a style="letter-spacing:.35px">Quote #121577</a> (One Time)</div>
  <div class="res" style="top:874px">Residential</div>
  <div class="td" style="left:585px;top:874px">Brad Staple</div>
  <div class="td" style="left:757px;top:874px">123 Main Street, Hoover A...</div>
  <div class="td" style="left:992px;top:874px">Open</div>
  <div class="td" style="left:1080px;top:874px;letter-spacing:.35px">$0.00</div>
  <div class="td" style="left:1194px;top:874px;letter-spacing:-.15px"><a>Schedule Job</a> or <a>Cancel Quote</a></div>
  <div class="hl" style="top:953px"></div>
  <div class="td" style="left:290px;top:920px"><a style="letter-spacing:.35px">Quote #121055</a> (One Time)</div>
  <div class="res" style="top:920px">Residential</div>
  <div class="td" style="left:585px;top:920px">Carlos Mendez</div>
  <div class="td" style="left:757px;top:920px">123 Main Street, Hoover A...</div>
  <div class="td" style="left:992px;top:920px">Open</div>
  <div class="td" style="left:1080px;top:920px;letter-spacing:.35px">$3,678.40</div>
  <div class="td" style="left:1194px;top:920px;letter-spacing:-.15px"><a>Schedule Job</a> or <a>Cancel Quote</a></div>
  <div class="hl" style="top:999px"></div>
  <div class="td" style="left:290px;top:966px"><a style="letter-spacing:.35px">Quote #120988</a> (One Time)</div>
  <div class="td" style="left:585px;top:966px">Dana Ortiz</div>
  <div class="td" style="left:757px;top:966px">123 Main Street, Hoover A...</div>
  <div class="td" style="left:992px;top:966px">Open</div>
  <div class="td" style="left:1080px;top:966px;letter-spacing:.35px">$0.00</div>
  <div class="td" style="left:1194px;top:966px;letter-spacing:-.15px"><a>Schedule Job</a> or <a>Cancel Quote</a></div>
</div>

</div>
</body>
</html>
